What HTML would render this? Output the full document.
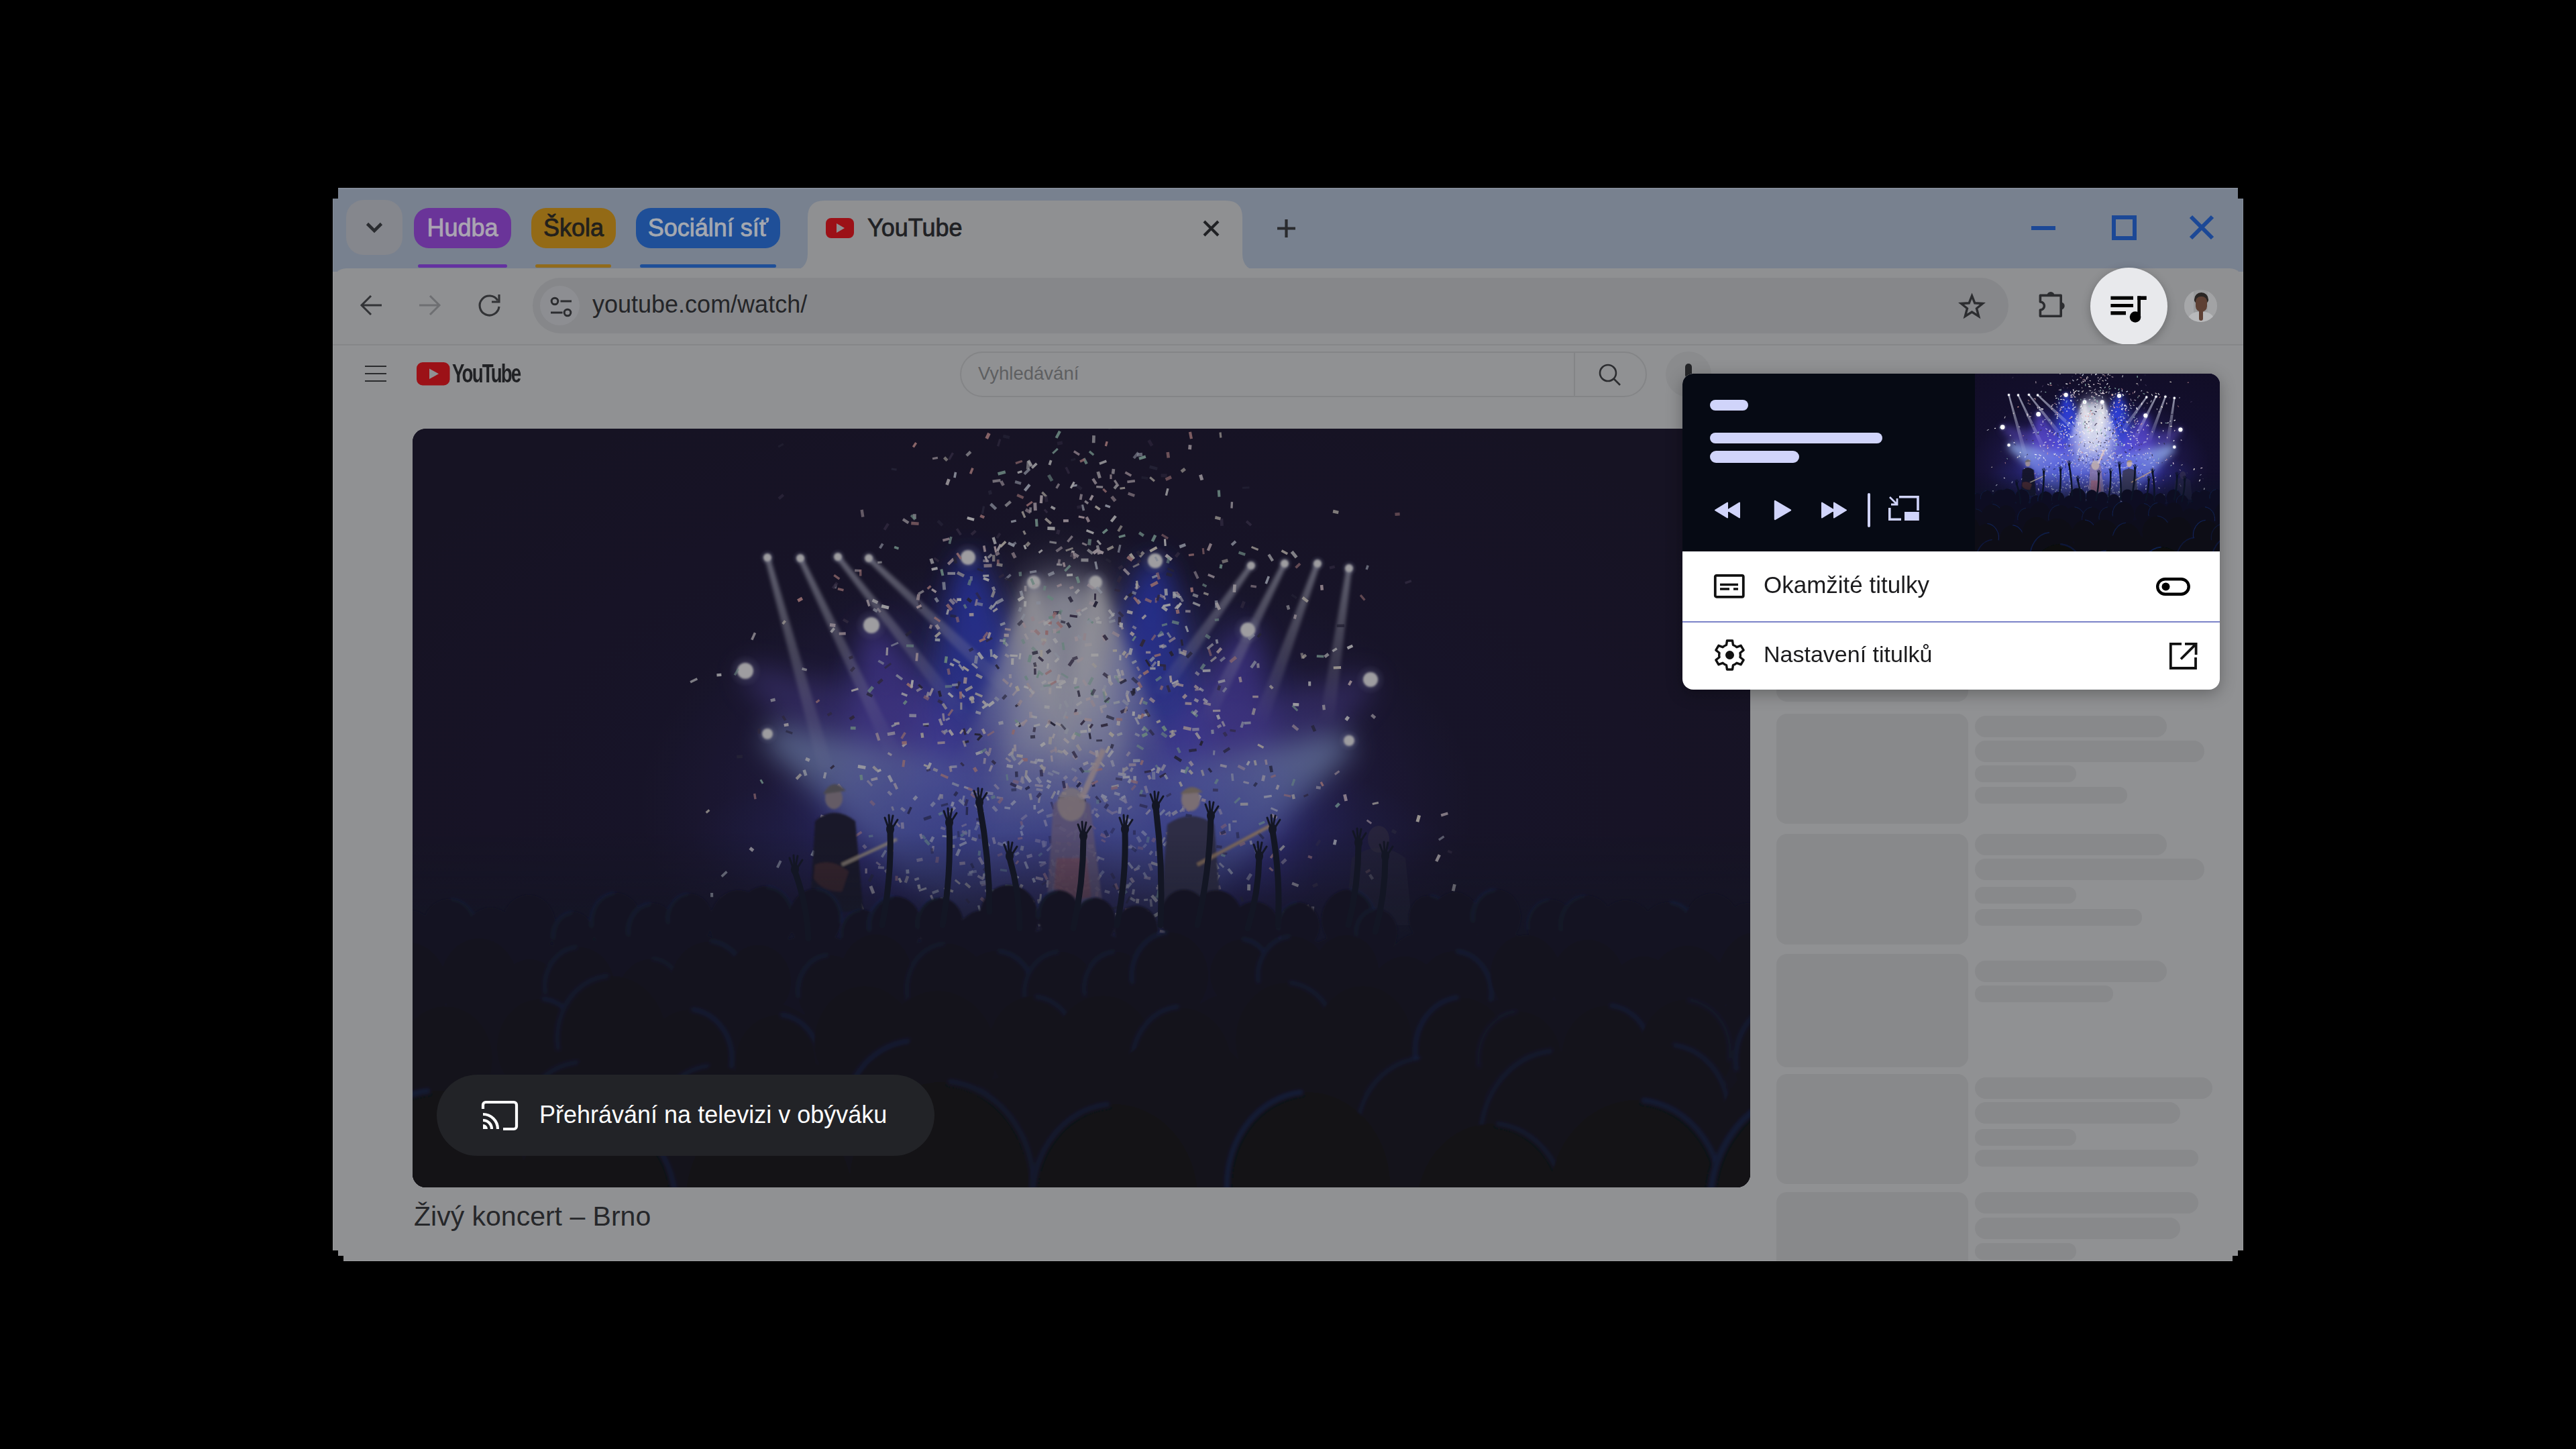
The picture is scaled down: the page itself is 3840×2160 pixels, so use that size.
<!DOCTYPE html>
<html><head><meta charset="utf-8">
<style>
*{margin:0;padding:0;box-sizing:border-box}
html,body{width:3840px;height:2160px;background:#000;overflow:hidden;font-family:"Liberation Sans",sans-serif}
.a{position:absolute}
#win{position:absolute;left:496px;top:280px;width:2848px;height:1600px;background:#909193;overflow:hidden;
clip-path:polygon(8px 0,2840px 0,2840px 16px,2848px 16px,2848px 1584px,2840px 1584px,2840px 1592px,2832px 1592px,2832px 1600px,16px 1600px,16px 1592px,8px 1592px,8px 1584px,0 1584px,0 16px,8px 16px)}
#tabs{left:0;top:0;width:2848px;height:125px;background:#78818f}
#toolbar{left:0;top:120px;width:2848px;height:113px;background:#8f9092;border-radius:20px 20px 0 0}
#content{left:0;top:233px;width:2848px;height:1367px;background:#909193;border-top:2px solid #858688}
.chip{top:30px;height:60px;border-radius:22px;font-size:36px;line-height:60px;text-align:center;-webkit-text-stroke:0.9px currentColor}
.uline{top:113.5px;height:5.5px;border-radius:3px}
.skel{position:absolute;background:#88898b;border-radius:16px}
.bar{position:absolute;background:#88898b;border-radius:16px;height:32px}
.bar.s{height:25px;border-radius:12px}
svg{position:absolute;overflow:visible}
</style></head><body>
<svg width="0" height="0" style="position:absolute"><defs>
<filter id="b40" x="-50%" y="-50%" width="200%" height="200%"><feGaussianBlur stdDeviation="40"/></filter>
<filter id="b20" x="-50%" y="-50%" width="200%" height="200%"><feGaussianBlur stdDeviation="20"/></filter>
<filter id="b10" x="-50%" y="-50%" width="200%" height="200%"><feGaussianBlur stdDeviation="10"/></filter>
<filter id="b5" x="-50%" y="-50%" width="200%" height="200%"><feGaussianBlur stdDeviation="5"/></filter>
<filter id="b3" x="-50%" y="-50%" width="200%" height="200%"><feGaussianBlur stdDeviation="2.5"/></filter>
<filter id="b2" x="-50%" y="-50%" width="200%" height="200%"><feGaussianBlur stdDeviation="1.5"/></filter>
<radialGradient id="pbg" cx="0.49" cy="0.5" r="0.6"><stop offset="0" stop-color="#1a1444"/><stop offset="0.45" stop-color="#130f2e"/><stop offset="1" stop-color="#110d24"/></radialGradient>
<radialGradient id="gpurple"><stop offset="0" stop-color="#4a3cc0" stop-opacity="0.75"/><stop offset="0.5" stop-color="#4a3cc0" stop-opacity="0.3375"/><stop offset="1" stop-color="#4a3cc0" stop-opacity="0"/></radialGradient>
<radialGradient id="gblue"><stop offset="0" stop-color="#3550e8" stop-opacity="0.8"/><stop offset="0.5" stop-color="#3550e8" stop-opacity="0.36000000000000004"/><stop offset="1" stop-color="#3550e8" stop-opacity="0"/></radialGradient>
<radialGradient id="gwhite"><stop offset="0" stop-color="#dfe6ff" stop-opacity="0.9"/><stop offset="0.5" stop-color="#dfe6ff" stop-opacity="0.405"/><stop offset="1" stop-color="#dfe6ff" stop-opacity="0"/></radialGradient>
<radialGradient id="gcyan"><stop offset="0" stop-color="#a8d0ff" stop-opacity="0.7"/><stop offset="0.5" stop-color="#a8d0ff" stop-opacity="0.315"/><stop offset="1" stop-color="#a8d0ff" stop-opacity="0"/></radialGradient>
<radialGradient id="gdot"><stop offset="0" stop-color="#c8d0ff" stop-opacity="0.9"/><stop offset="0.5" stop-color="#c8d0ff" stop-opacity="0.405"/><stop offset="1" stop-color="#c8d0ff" stop-opacity="0"/></radialGradient>
<linearGradient id="crowdg" x1="0" y1="0" x2="0" y2="1"><stop offset="0" stop-color="#0c1426" stop-opacity="0"/><stop offset="0.3" stop-color="#0c1426" stop-opacity="0.6"/><stop offset="1" stop-color="#07090f" stop-opacity="0.95"/></linearGradient>
<symbol id="photo" viewBox="0 0 1994 1131" preserveAspectRatio="none">
<rect width="1994" height="1131" fill="url(#pbg)"/>
<ellipse cx="960" cy="560" rx="620" ry="380" fill="url(#gpurple)" opacity="0.75" transform="rotate(0 960 560)"/>
<ellipse cx="790" cy="470" rx="200" ry="260" fill="url(#gblue)" opacity="0.5" transform="rotate(15 790 470)"/>
<ellipse cx="1160" cy="470" rx="200" ry="260" fill="url(#gblue)" opacity="0.5" transform="rotate(-15 1160 470)"/>
<ellipse cx="760" cy="520" rx="240" ry="200" fill="url(#gpurple)" opacity="0.7" transform="rotate(20 760 520)"/>
<ellipse cx="1190" cy="530" rx="240" ry="200" fill="url(#gpurple)" opacity="0.7" transform="rotate(-20 1190 530)"/>
<ellipse cx="975" cy="470" rx="260" ry="330" fill="url(#gwhite)" opacity="0.4" transform="rotate(0 975 470)"/>
<ellipse cx="972" cy="390" rx="130" ry="230" fill="url(#gwhite)" opacity="0.55" transform="rotate(0 972 390)"/>
<linearGradient id="lg23" gradientUnits="userSpaceOnUse" x1="828" y1="192" x2="870" y2="620"><stop offset="0" stop-color="#2c44ff" stop-opacity="1"/><stop offset="0.5" stop-color="#2c44ff" stop-opacity="0.55"/><stop offset="1" stop-color="#2c44ff" stop-opacity="0"/></linearGradient>
<polygon points="814.1,193.4 720.7,634.6 1019.3,605.4 841.9,190.6" fill="url(#lg23)" opacity="0.9" filter="url(#b20)"/>
<linearGradient id="lg25" gradientUnits="userSpaceOnUse" x1="1107" y1="197" x2="1075" y2="620"><stop offset="0" stop-color="#2c44ff" stop-opacity="1"/><stop offset="0.5" stop-color="#2c44ff" stop-opacity="0.55"/><stop offset="1" stop-color="#2c44ff" stop-opacity="0"/></linearGradient>
<polygon points="1093.0,195.9 925.4,608.7 1224.6,631.3 1121.0,198.1" fill="url(#lg25)" opacity="0.9" filter="url(#b20)"/>
<linearGradient id="lg27" gradientUnits="userSpaceOnUse" x1="684" y1="293" x2="780" y2="680"><stop offset="0" stop-color="#6650e8" stop-opacity="1"/><stop offset="0.5" stop-color="#6650e8" stop-opacity="0.55"/><stop offset="1" stop-color="#6650e8" stop-opacity="0"/></linearGradient>
<polygon points="672.4,295.9 615.0,720.9 945.0,639.1 695.6,290.1" fill="url(#lg27)" opacity="0.7" filter="url(#b20)"/>
<linearGradient id="lg29" gradientUnits="userSpaceOnUse" x1="1245" y1="300" x2="1160" y2="680"><stop offset="0" stop-color="#6650e8" stop-opacity="1"/><stop offset="0.5" stop-color="#6650e8" stop-opacity="0.55"/><stop offset="1" stop-color="#6650e8" stop-opacity="0"/></linearGradient>
<polygon points="1233.3,297.4 994.1,642.9 1325.9,717.1 1256.7,302.6" fill="url(#lg29)" opacity="0.7" filter="url(#b20)"/>
<linearGradient id="lg31" gradientUnits="userSpaceOnUse" x1="496" y1="361" x2="860" y2="580"><stop offset="0" stop-color="#6a58d8" stop-opacity="1"/><stop offset="0.5" stop-color="#6a58d8" stop-opacity="0.55"/><stop offset="1" stop-color="#6a58d8" stop-opacity="0"/></linearGradient>
<polygon points="490.8,369.6 782.7,708.5 937.3,451.5 501.2,352.4" fill="url(#lg31)" opacity="0.5" filter="url(#b20)"/>
<linearGradient id="lg33" gradientUnits="userSpaceOnUse" x1="1428" y1="374" x2="1090" y2="590"><stop offset="0" stop-color="#6a58d8" stop-opacity="1"/><stop offset="0.5" stop-color="#6a58d8" stop-opacity="0.55"/><stop offset="1" stop-color="#6a58d8" stop-opacity="0"/></linearGradient>
<polygon points="1422.6,365.6 1009.2,463.6 1170.8,716.4 1433.4,382.4" fill="url(#lg33)" opacity="0.5" filter="url(#b20)"/>
<linearGradient id="lg35" gradientUnits="userSpaceOnUse" x1="529" y1="455" x2="930" y2="660"><stop offset="0" stop-color="#9cbcf8" stop-opacity="1"/><stop offset="0.5" stop-color="#9cbcf8" stop-opacity="0.55"/><stop offset="1" stop-color="#9cbcf8" stop-opacity="0"/></linearGradient>
<polygon points="522.6,467.5 861.7,793.6 998.3,526.4 535.4,442.5" fill="url(#lg35)" opacity="0.8" filter="url(#b20)"/>
<linearGradient id="lg37" gradientUnits="userSpaceOnUse" x1="1396" y1="465" x2="1010" y2="670"><stop offset="0" stop-color="#9cbcf8" stop-opacity="1"/><stop offset="0.5" stop-color="#9cbcf8" stop-opacity="0.55"/><stop offset="1" stop-color="#9cbcf8" stop-opacity="0"/></linearGradient>
<polygon points="1389.4,452.6 939.6,537.5 1080.4,802.5 1402.6,477.4" fill="url(#lg37)" opacity="0.8" filter="url(#b20)"/>
<linearGradient id="lg39" gradientUnits="userSpaceOnUse" x1="972" y1="229" x2="972" y2="680"><stop offset="0" stop-color="#f0f4ff" stop-opacity="1"/><stop offset="0.5" stop-color="#f0f4ff" stop-opacity="0.55"/><stop offset="1" stop-color="#f0f4ff" stop-opacity="0"/></linearGradient>
<polygon points="932.0,229.0 832.0,680.0 1112.0,680.0 1012.0,229.0" fill="url(#lg39)" opacity="0.85" filter="url(#b20)"/>
<linearGradient id="lg41" gradientUnits="userSpaceOnUse" x1="926" y1="229" x2="900" y2="520"><stop offset="0" stop-color="#ffffff" stop-opacity="1"/><stop offset="0.5" stop-color="#ffffff" stop-opacity="0.55"/><stop offset="1" stop-color="#ffffff" stop-opacity="0"/></linearGradient>
<polygon points="918.0,228.3 810.4,512.0 989.6,528.0 934.0,229.7" fill="url(#lg41)" opacity="0.8" filter="url(#b10)"/>
<linearGradient id="lg43" gradientUnits="userSpaceOnUse" x1="1018" y1="229" x2="1045" y2="520"><stop offset="0" stop-color="#ffffff" stop-opacity="1"/><stop offset="0.5" stop-color="#ffffff" stop-opacity="0.55"/><stop offset="1" stop-color="#ffffff" stop-opacity="0"/></linearGradient>
<polygon points="1010.0,229.7 955.4,528.3 1134.6,511.7 1026.0,228.3" fill="url(#lg43)" opacity="0.8" filter="url(#b10)"/>
<linearGradient id="lg45" gradientUnits="userSpaceOnUse" x1="529" y1="192" x2="620" y2="520"><stop offset="0" stop-color="#e8ecff" stop-opacity="1"/><stop offset="0.5" stop-color="#e8ecff" stop-opacity="0.55"/><stop offset="1" stop-color="#e8ecff" stop-opacity="0"/></linearGradient>
<polygon points="525.1,193.1 609.4,522.9 630.6,517.1 532.9,190.9" fill="url(#lg45)" opacity="0.6" filter="url(#b3)"/>
<linearGradient id="lg47" gradientUnits="userSpaceOnUse" x1="578" y1="193" x2="720" y2="490"><stop offset="0" stop-color="#e8ecff" stop-opacity="1"/><stop offset="0.5" stop-color="#e8ecff" stop-opacity="0.55"/><stop offset="1" stop-color="#e8ecff" stop-opacity="0"/></linearGradient>
<polygon points="574.4,194.7 710.1,494.7 729.9,485.3 581.6,191.3" fill="url(#lg47)" opacity="0.6" filter="url(#b3)"/>
<linearGradient id="lg49" gradientUnits="userSpaceOnUse" x1="634" y1="191" x2="830" y2="440"><stop offset="0" stop-color="#e8ecff" stop-opacity="1"/><stop offset="0.5" stop-color="#e8ecff" stop-opacity="0.55"/><stop offset="1" stop-color="#e8ecff" stop-opacity="0"/></linearGradient>
<polygon points="630.9,193.5 821.4,446.8 838.6,433.2 637.1,188.5" fill="url(#lg49)" opacity="0.6" filter="url(#b3)"/>
<linearGradient id="lg51" gradientUnits="userSpaceOnUse" x1="680" y1="193" x2="900" y2="400"><stop offset="0" stop-color="#e8ecff" stop-opacity="1"/><stop offset="0.5" stop-color="#e8ecff" stop-opacity="0.55"/><stop offset="1" stop-color="#e8ecff" stop-opacity="0"/></linearGradient>
<polygon points="677.3,195.9 892.5,408.0 907.5,392.0 682.7,190.1" fill="url(#lg51)" opacity="0.6" filter="url(#b3)"/>
<linearGradient id="lg53" gradientUnits="userSpaceOnUse" x1="1250" y1="204" x2="1110" y2="400"><stop offset="0" stop-color="#e8ecff" stop-opacity="1"/><stop offset="0.5" stop-color="#e8ecff" stop-opacity="0.55"/><stop offset="1" stop-color="#e8ecff" stop-opacity="0"/></linearGradient>
<polygon points="1246.7,201.7 1101.0,393.6 1119.0,406.4 1253.3,206.3" fill="url(#lg53)" opacity="0.6" filter="url(#b3)"/>
<linearGradient id="lg55" gradientUnits="userSpaceOnUse" x1="1300" y1="201" x2="1180" y2="440"><stop offset="0" stop-color="#e8ecff" stop-opacity="1"/><stop offset="0.5" stop-color="#e8ecff" stop-opacity="0.55"/><stop offset="1" stop-color="#e8ecff" stop-opacity="0"/></linearGradient>
<polygon points="1296.4,199.2 1170.2,435.1 1189.8,444.9 1303.6,202.8" fill="url(#lg55)" opacity="0.6" filter="url(#b3)"/>
<linearGradient id="lg57" gradientUnits="userSpaceOnUse" x1="1349" y1="201" x2="1262" y2="440"><stop offset="0" stop-color="#e8ecff" stop-opacity="1"/><stop offset="0.5" stop-color="#e8ecff" stop-opacity="0.55"/><stop offset="1" stop-color="#e8ecff" stop-opacity="0"/></linearGradient>
<polygon points="1345.2,199.6 1251.7,436.2 1272.3,443.8 1352.8,202.4" fill="url(#lg57)" opacity="0.6" filter="url(#b3)"/>
<linearGradient id="lg59" gradientUnits="userSpaceOnUse" x1="1396" y1="208" x2="1362" y2="440"><stop offset="0" stop-color="#e8ecff" stop-opacity="1"/><stop offset="0.5" stop-color="#e8ecff" stop-opacity="0.55"/><stop offset="1" stop-color="#e8ecff" stop-opacity="0"/></linearGradient>
<polygon points="1392.0,207.4 1351.1,438.4 1372.9,441.6 1400.0,208.6" fill="url(#lg59)" opacity="0.6" filter="url(#b3)"/>
<circle cx="529" cy="192" r="12" fill="url(#gdot)" opacity="0.45"/>
<circle cx="578" cy="193" r="12" fill="url(#gdot)" opacity="0.45"/>
<circle cx="634" cy="191" r="12" fill="url(#gdot)" opacity="0.45"/>
<circle cx="680" cy="193" r="12" fill="url(#gdot)" opacity="0.45"/>
<circle cx="828" cy="192" r="22" fill="url(#gdot)" opacity="0.45"/>
<circle cx="926" cy="229" r="20" fill="url(#gdot)" opacity="0.45"/>
<circle cx="1018" cy="229" r="20" fill="url(#gdot)" opacity="0.45"/>
<circle cx="1107" cy="197" r="22" fill="url(#gdot)" opacity="0.45"/>
<circle cx="1250" cy="204" r="12" fill="url(#gdot)" opacity="0.45"/>
<circle cx="1300" cy="201" r="12" fill="url(#gdot)" opacity="0.45"/>
<circle cx="1349" cy="201" r="12" fill="url(#gdot)" opacity="0.45"/>
<circle cx="1396" cy="208" r="12" fill="url(#gdot)" opacity="0.45"/>
<circle cx="684" cy="293" r="24" fill="url(#gdot)" opacity="0.45"/>
<circle cx="1245" cy="300" r="22" fill="url(#gdot)" opacity="0.45"/>
<circle cx="496" cy="361" r="24" fill="url(#gdot)" opacity="0.45"/>
<circle cx="1428" cy="374" r="22" fill="url(#gdot)" opacity="0.45"/>
<circle cx="529" cy="455" r="16" fill="url(#gdot)" opacity="0.45"/>
<circle cx="1396" cy="465" r="16" fill="url(#gdot)" opacity="0.45"/>
<g filter="url(#b2)">
<circle cx="529" cy="192" r="6" fill="#ffffff"/>
<circle cx="578" cy="193" r="6" fill="#ffffff"/>
<circle cx="634" cy="191" r="6" fill="#ffffff"/>
<circle cx="680" cy="193" r="6" fill="#ffffff"/>
<circle cx="828" cy="192" r="11" fill="#ffffff"/>
<circle cx="926" cy="229" r="10" fill="#ffffff"/>
<circle cx="1018" cy="229" r="10" fill="#ffffff"/>
<circle cx="1107" cy="197" r="11" fill="#ffffff"/>
<circle cx="1250" cy="204" r="6" fill="#ffffff"/>
<circle cx="1300" cy="201" r="6" fill="#ffffff"/>
<circle cx="1349" cy="201" r="6" fill="#ffffff"/>
<circle cx="1396" cy="208" r="6" fill="#ffffff"/>
<circle cx="684" cy="293" r="12" fill="#ffffff"/>
<circle cx="1245" cy="300" r="11" fill="#ffffff"/>
<circle cx="496" cy="361" r="12" fill="#ffffff"/>
<circle cx="1428" cy="374" r="11" fill="#ffffff"/>
<circle cx="529" cy="455" r="8" fill="#ffffff"/>
<circle cx="1396" cy="465" r="8" fill="#ffffff"/>
</g>
<rect x="921.0" y="494.7" width="9.2" height="3.7" fill="#f4ecf0" opacity="0.80" transform="rotate(10 921.0 494.7)"/>
<rect x="1300.8" y="720.1" width="9.5" height="3.1" fill="#ffffff" opacity="0.62" transform="rotate(105 1300.8 720.1)"/>
<rect x="1127.6" y="89.5" width="10.9" height="3.4" fill="#ffffff" opacity="0.86" transform="rotate(104 1127.6 89.5)"/>
<rect x="1211.7" y="377.3" width="10.7" height="3.9" fill="#ffffff" opacity="0.74" transform="rotate(166 1211.7 377.3)"/>
<rect x="1091.6" y="185.5" width="9.2" height="4.8" fill="#f8f0e0" opacity="0.72" transform="rotate(131 1091.6 185.5)"/>
<rect x="991.4" y="371.6" width="10.0" height="4.5" fill="#ffffff" opacity="0.95" transform="rotate(103 991.4 371.6)"/>
<rect x="841.6" y="258.5" width="9.0" height="4.6" fill="#d8e0f0" opacity="0.64" transform="rotate(12 841.6 258.5)"/>
<rect x="1074.3" y="293.2" width="6.1" height="3.9" fill="#f4ecf0" opacity="0.65" transform="rotate(30 1074.3 293.2)"/>
<rect x="800.9" y="165.8" width="10.4" height="3.8" fill="#e8d0d8" opacity="0.80" transform="rotate(165 800.9 165.8)"/>
<rect x="1084.1" y="656.6" width="8.5" height="3.7" fill="#e8d0d8" opacity="0.98" transform="rotate(159 1084.1 656.6)"/>
<rect x="1109.2" y="500.5" width="11.0" height="3.4" fill="#a0d0c0" opacity="0.66" transform="rotate(50 1109.2 500.5)"/>
<rect x="1056.3" y="280.6" width="11.7" height="4.4" fill="#3a3050" opacity="0.85" transform="rotate(92 1056.3 280.6)"/>
<rect x="967.3" y="661.9" width="10.1" height="4.1" fill="#e0a0a0" opacity="0.76" transform="rotate(71 967.3 661.9)"/>
<rect x="709.4" y="482.1" width="6.4" height="3.4" fill="#f4ecf0" opacity="0.74" transform="rotate(29 709.4 482.1)"/>
<rect x="1179.0" y="466.4" width="7.2" height="3.8" fill="#2a2844" opacity="0.98" transform="rotate(114 1179.0 466.4)"/>
<rect x="1081.5" y="354.2" width="6.5" height="3.2" fill="#e8d0d8" opacity="0.71" transform="rotate(61 1081.5 354.2)"/>
<rect x="816.5" y="723.5" width="10.1" height="4.8" fill="#3a3050" opacity="0.72" transform="rotate(136 816.5 723.5)"/>
<rect x="967.6" y="656.1" width="7.6" height="3.7" fill="#a0d0c0" opacity="0.91" transform="rotate(30 967.6 656.1)"/>
<rect x="908.7" y="599.2" width="7.2" height="3.5" fill="#ffffff" opacity="0.92" transform="rotate(72 908.7 599.2)"/>
<rect x="752.1" y="22.0" width="7.7" height="3.5" fill="#e0a0a0" opacity="0.98" transform="rotate(124 752.1 22.0)"/>
<rect x="959.1" y="614.5" width="8.1" height="4.9" fill="#e0a0a0" opacity="0.64" transform="rotate(14 959.1 614.5)"/>
<rect x="1040.6" y="474.3" width="11.0" height="4.0" fill="#f8f0e0" opacity="0.92" transform="rotate(117 1040.6 474.3)"/>
<rect x="1144.7" y="634.3" width="8.3" height="4.4" fill="#f0e0e8" opacity="0.96" transform="rotate(35 1144.7 634.3)"/>
<rect x="1039.7" y="608.6" width="8.4" height="3.8" fill="#e8d0d8" opacity="0.89" transform="rotate(170 1039.7 608.6)"/>
<rect x="767.0" y="754.8" width="9.5" height="3.9" fill="#2a2844" opacity="0.84" transform="rotate(118 767.0 754.8)"/>
<rect x="939.8" y="99.5" width="11.8" height="4.3" fill="#f0e0e8" opacity="0.97" transform="rotate(94 939.8 99.5)"/>
<rect x="1149.0" y="664.2" width="7.3" height="4.0" fill="#a0d0c0" opacity="0.73" transform="rotate(137 1149.0 664.2)"/>
<rect x="971.1" y="318.4" width="11.5" height="3.7" fill="#a0d0c0" opacity="0.83" transform="rotate(82 971.1 318.4)"/>
<rect x="1252.2" y="397.9" width="8.6" height="3.4" fill="#e8d0d8" opacity="0.92" transform="rotate(0 1252.2 397.9)"/>
<rect x="1203.8" y="91.5" width="10.1" height="4.1" fill="#a0d0c0" opacity="0.91" transform="rotate(86 1203.8 91.5)"/>
<rect x="1094.4" y="343.7" width="11.4" height="3.1" fill="#2a2844" opacity="0.99" transform="rotate(58 1094.4 343.7)"/>
<rect x="1014.7" y="389.2" width="8.7" height="4.1" fill="#a0d0c0" opacity="0.98" transform="rotate(86 1014.7 389.2)"/>
<rect x="1067.9" y="336.0" width="7.4" height="3.1" fill="#e8d0d8" opacity="0.91" transform="rotate(120 1067.9 336.0)"/>
<rect x="1081.6" y="714.0" width="8.2" height="3.5" fill="#f8f0e0" opacity="0.79" transform="rotate(24 1081.6 714.0)"/>
<rect x="962.7" y="548.8" width="9.3" height="3.9" fill="#2a2844" opacity="0.73" transform="rotate(3 962.7 548.8)"/>
<rect x="1059.7" y="206.7" width="7.1" height="4.5" fill="#3a3050" opacity="0.94" transform="rotate(147 1059.7 206.7)"/>
<rect x="911.6" y="622.4" width="6.9" height="4.8" fill="#f8f0e0" opacity="0.88" transform="rotate(102 911.6 622.4)"/>
<rect x="1425.8" y="204.4" width="6.5" height="3.5" fill="#d8e0f0" opacity="0.69" transform="rotate(109 1425.8 204.4)"/>
<rect x="1163.9" y="257.8" width="11.6" height="3.5" fill="#ffffff" opacity="0.81" transform="rotate(23 1163.9 257.8)"/>
<rect x="973.2" y="708.5" width="9.2" height="3.4" fill="#d8e0f0" opacity="0.87" transform="rotate(80 973.2 708.5)"/>
<rect x="1142.6" y="263.7" width="7.5" height="3.0" fill="#ffffff" opacity="0.82" transform="rotate(131 1142.6 263.7)"/>
<rect x="798.0" y="339.8" width="9.9" height="4.3" fill="#a0d0c0" opacity="0.96" transform="rotate(98 798.0 339.8)"/>
<rect x="968.2" y="233.9" width="7.4" height="3.4" fill="#e8d0d8" opacity="0.89" transform="rotate(158 968.2 233.9)"/>
<rect x="794.2" y="41.3" width="6.4" height="4.5" fill="#f8f0e0" opacity="0.67" transform="rotate(46 794.2 41.3)"/>
<rect x="1115.2" y="505.6" width="9.0" height="4.9" fill="#f4ecf0" opacity="0.88" transform="rotate(107 1115.2 505.6)"/>
<rect x="843.3" y="338.8" width="11.8" height="4.9" fill="#d8e0f0" opacity="0.70" transform="rotate(98 843.3 338.8)"/>
<rect x="1021.9" y="165.6" width="8.0" height="3.2" fill="#ffffff" opacity="0.86" transform="rotate(50 1021.9 165.6)"/>
<rect x="960.1" y="200.8" width="8.4" height="3.1" fill="#ffffff" opacity="0.72" transform="rotate(4 960.1 200.8)"/>
<rect x="1072.7" y="678.5" width="9.6" height="4.5" fill="#d8e0f0" opacity="0.80" transform="rotate(129 1072.7 678.5)"/>
<rect x="869.3" y="550.4" width="6.3" height="4.7" fill="#a0d0c0" opacity="0.85" transform="rotate(160 869.3 550.4)"/>
<rect x="718.7" y="174.8" width="6.8" height="3.7" fill="#a0d0c0" opacity="0.93" transform="rotate(18 718.7 174.8)"/>
<rect x="1031.3" y="403.9" width="7.6" height="3.9" fill="#a0d0c0" opacity="0.97" transform="rotate(12 1031.3 403.9)"/>
<rect x="977.4" y="615.0" width="7.4" height="4.5" fill="#e0a0a0" opacity="0.86" transform="rotate(41 977.4 615.0)"/>
<rect x="701.8" y="375.4" width="8.9" height="4.4" fill="#3a3050" opacity="0.85" transform="rotate(138 701.8 375.4)"/>
<rect x="1093.0" y="252.1" width="10.2" height="4.2" fill="#e0a0a0" opacity="0.79" transform="rotate(24 1093.0 252.1)"/>
<rect x="851.7" y="221.1" width="8.8" height="3.9" fill="#ffffff" opacity="0.96" transform="rotate(21 851.7 221.1)"/>
<rect x="634.3" y="236.9" width="8.8" height="3.6" fill="#e0a0a0" opacity="0.80" transform="rotate(13 634.3 236.9)"/>
<rect x="975.6" y="56.7" width="10.5" height="3.5" fill="#3a3050" opacity="0.84" transform="rotate(64 975.6 56.7)"/>
<rect x="956.3" y="682.3" width="6.1" height="3.0" fill="#d8e0f0" opacity="0.78" transform="rotate(88 956.3 682.3)"/>
<rect x="947.9" y="285.8" width="8.0" height="3.6" fill="#ffffff" opacity="0.76" transform="rotate(60 947.9 285.8)"/>
<rect x="1218.7" y="447.8" width="8.6" height="3.6" fill="#3a3050" opacity="0.64" transform="rotate(8 1218.7 447.8)"/>
<rect x="855.0" y="189.5" width="9.1" height="3.4" fill="#f4ecf0" opacity="0.98" transform="rotate(67 855.0 189.5)"/>
<rect x="586.9" y="489.8" width="6.3" height="4.9" fill="#ffffff" opacity="0.79" transform="rotate(22 586.9 489.8)"/>
<rect x="1112.0" y="214.1" width="10.4" height="4.3" fill="#e0a0a0" opacity="0.70" transform="rotate(73 1112.0 214.1)"/>
<rect x="750.7" y="127.2" width="7.2" height="4.8" fill="#ffffff" opacity="0.69" transform="rotate(89 750.7 127.2)"/>
<rect x="896.8" y="757.3" width="6.8" height="3.4" fill="#f8f0e0" opacity="0.74" transform="rotate(16 896.8 757.3)"/>
<rect x="883.9" y="615.1" width="6.1" height="4.7" fill="#ffffff" opacity="0.90" transform="rotate(68 883.9 615.1)"/>
<rect x="1202.3" y="286.4" width="6.4" height="3.6" fill="#a0d0c0" opacity="0.65" transform="rotate(174 1202.3 286.4)"/>
<rect x="550.5" y="645.0" width="11.4" height="3.8" fill="#d8e0f0" opacity="0.77" transform="rotate(116 550.5 645.0)"/>
<rect x="904.3" y="645.0" width="6.1" height="3.1" fill="#e0a0a0" opacity="0.96" transform="rotate(127 904.3 645.0)"/>
<rect x="927.6" y="705.4" width="8.8" height="3.9" fill="#e8d0d8" opacity="0.69" transform="rotate(140 927.6 705.4)"/>
<rect x="932.0" y="492.0" width="8.7" height="4.1" fill="#ffffff" opacity="0.91" transform="rotate(7 932.0 492.0)"/>
<rect x="922.3" y="543.4" width="9.8" height="4.1" fill="#f8f0e0" opacity="0.91" transform="rotate(78 922.3 543.4)"/>
<rect x="861.7" y="8.0" width="8.8" height="4.9" fill="#e0a0a0" opacity="0.95" transform="rotate(116 861.7 8.0)"/>
<rect x="933.3" y="493.7" width="7.2" height="4.8" fill="#ffffff" opacity="0.63" transform="rotate(116 933.3 493.7)"/>
<rect x="702.5" y="172.4" width="8.0" height="3.8" fill="#d8e0f0" opacity="0.68" transform="rotate(122 702.5 172.4)"/>
<rect x="1400.9" y="376.8" width="7.3" height="3.8" fill="#e8d0d8" opacity="0.98" transform="rotate(119 1400.9 376.8)"/>
<rect x="945.6" y="315.7" width="7.1" height="3.9" fill="#f8f0e0" opacity="0.73" transform="rotate(128 945.6 315.7)"/>
<rect x="983.5" y="505.0" width="8.2" height="3.7" fill="#d8e0f0" opacity="0.60" transform="rotate(30 983.5 505.0)"/>
<rect x="921.4" y="61.4" width="11.3" height="4.1" fill="#d8e0f0" opacity="0.75" transform="rotate(136 921.4 61.4)"/>
<rect x="1068.4" y="681.7" width="8.5" height="4.6" fill="#f4ecf0" opacity="0.62" transform="rotate(138 1068.4 681.7)"/>
<rect x="1047.5" y="275.9" width="11.7" height="3.1" fill="#d8e0f0" opacity="0.88" transform="rotate(134 1047.5 275.9)"/>
<rect x="867.7" y="452.6" width="11.7" height="3.1" fill="#e0a0a0" opacity="0.64" transform="rotate(148 867.7 452.6)"/>
<rect x="1367.2" y="725.0" width="7.5" height="3.9" fill="#e8d0d8" opacity="0.97" transform="rotate(88 1367.2 725.0)"/>
<rect x="1016.6" y="526.0" width="7.4" height="4.7" fill="#2a2844" opacity="0.91" transform="rotate(82 1016.6 526.0)"/>
<rect x="1130.7" y="572.2" width="6.4" height="3.1" fill="#f0e0e8" opacity="0.73" transform="rotate(99 1130.7 572.2)"/>
<rect x="1089.3" y="539.4" width="7.4" height="3.8" fill="#a0d0c0" opacity="0.87" transform="rotate(111 1089.3 539.4)"/>
<rect x="1278.0" y="186.5" width="11.3" height="4.2" fill="#ffffff" opacity="0.76" transform="rotate(58 1278.0 186.5)"/>
<rect x="803.8" y="614.4" width="11.9" height="3.2" fill="#e0a0a0" opacity="0.93" transform="rotate(85 803.8 614.4)"/>
<rect x="976.7" y="694.9" width="7.8" height="3.2" fill="#2a2844" opacity="0.99" transform="rotate(34 976.7 694.9)"/>
<rect x="1019.0" y="389.6" width="9.6" height="4.5" fill="#3a3050" opacity="0.60" transform="rotate(119 1019.0 389.6)"/>
<rect x="1077.8" y="453.1" width="7.3" height="3.7" fill="#d8e0f0" opacity="0.68" transform="rotate(25 1077.8 453.1)"/>
<rect x="1081.6" y="622.3" width="8.2" height="4.2" fill="#e0a0a0" opacity="0.61" transform="rotate(14 1081.6 622.3)"/>
<rect x="898.7" y="77.1" width="9.3" height="4.3" fill="#d8e0f0" opacity="0.67" transform="rotate(16 898.7 77.1)"/>
<rect x="958.1" y="311.4" width="7.8" height="4.9" fill="#ffffff" opacity="0.83" transform="rotate(56 958.1 311.4)"/>
<rect x="943.9" y="582.7" width="9.9" height="3.8" fill="#f0e0e8" opacity="0.98" transform="rotate(72 943.9 582.7)"/>
<rect x="1009.6" y="685.2" width="10.9" height="3.8" fill="#e8d0d8" opacity="0.78" transform="rotate(158 1009.6 685.2)"/>
<rect x="1044.4" y="301.5" width="11.6" height="4.5" fill="#e8d0d8" opacity="0.74" transform="rotate(30 1044.4 301.5)"/>
<rect x="909.5" y="611.7" width="7.2" height="3.3" fill="#e0a0a0" opacity="0.99" transform="rotate(169 909.5 611.7)"/>
<rect x="850.1" y="483.6" width="10.3" height="4.4" fill="#ffffff" opacity="0.86" transform="rotate(160 850.1 483.6)"/>
<rect x="1079.0" y="429.7" width="11.6" height="3.3" fill="#ffffff" opacity="0.66" transform="rotate(64 1079.0 429.7)"/>
<rect x="988.3" y="637.0" width="9.6" height="4.1" fill="#f0e0e8" opacity="0.72" transform="rotate(112 988.3 637.0)"/>
<rect x="915.4" y="234.2" width="8.3" height="3.7" fill="#f4ecf0" opacity="0.67" transform="rotate(90 915.4 234.2)"/>
<rect x="788.0" y="592.8" width="7.1" height="3.9" fill="#f0e0e8" opacity="0.65" transform="rotate(19 788.0 592.8)"/>
<rect x="1176.5" y="547.5" width="10.5" height="4.8" fill="#f4ecf0" opacity="0.91" transform="rotate(117 1176.5 547.5)"/>
<rect x="909.4" y="49.8" width="10.5" height="3.3" fill="#e0a0a0" opacity="0.71" transform="rotate(161 909.4 49.8)"/>
<rect x="1168.1" y="699.1" width="7.6" height="4.0" fill="#e8d0d8" opacity="0.61" transform="rotate(57 1168.1 699.1)"/>
<rect x="945.7" y="286.4" width="7.6" height="4.5" fill="#e0a0a0" opacity="0.94" transform="rotate(8 945.7 286.4)"/>
<rect x="1204.3" y="421.9" width="11.3" height="3.2" fill="#f0e0e8" opacity="0.85" transform="rotate(178 1204.3 421.9)"/>
<rect x="966.7" y="285.6" width="6.9" height="3.7" fill="#2a2844" opacity="0.69" transform="rotate(14 966.7 285.6)"/>
<rect x="744.8" y="565.1" width="10.9" height="3.5" fill="#2a2844" opacity="0.99" transform="rotate(115 744.8 565.1)"/>
<rect x="801.9" y="276.7" width="8.9" height="4.2" fill="#2a2844" opacity="0.62" transform="rotate(8 801.9 276.7)"/>
<rect x="800.4" y="269.8" width="8.1" height="3.4" fill="#ffffff" opacity="0.84" transform="rotate(105 800.4 269.8)"/>
<rect x="671.8" y="120.6" width="10.8" height="4.4" fill="#e8d0d8" opacity="0.63" transform="rotate(81 671.8 120.6)"/>
<rect x="1098.2" y="427.4" width="9.9" height="3.9" fill="#ffffff" opacity="0.89" transform="rotate(168 1098.2 427.4)"/>
<rect x="988.6" y="46.8" width="7.1" height="3.3" fill="#2a2844" opacity="0.64" transform="rotate(164 988.6 46.8)"/>
<rect x="991.1" y="418.7" width="6.9" height="3.4" fill="#3a3050" opacity="0.80" transform="rotate(109 991.1 418.7)"/>
<rect x="688.1" y="386.5" width="9.8" height="5.0" fill="#a0d0c0" opacity="0.79" transform="rotate(130 688.1 386.5)"/>
<rect x="976.5" y="563.7" width="7.4" height="3.2" fill="#ffffff" opacity="0.62" transform="rotate(41 976.5 563.7)"/>
<rect x="916.3" y="516.2" width="11.5" height="4.9" fill="#ffffff" opacity="0.97" transform="rotate(53 916.3 516.2)"/>
<rect x="1137.1" y="639.7" width="7.0" height="4.8" fill="#2a2844" opacity="0.76" transform="rotate(34 1137.1 639.7)"/>
<rect x="1022.1" y="479.3" width="10.0" height="5.0" fill="#f4ecf0" opacity="0.94" transform="rotate(84 1022.1 479.3)"/>
<rect x="933.4" y="233.9" width="9.7" height="3.2" fill="#f4ecf0" opacity="0.66" transform="rotate(163 933.4 233.9)"/>
<rect x="1347.2" y="532.6" width="6.8" height="4.3" fill="#f4ecf0" opacity="0.63" transform="rotate(7 1347.2 532.6)"/>
<rect x="857.1" y="677.4" width="11.2" height="4.8" fill="#ffffff" opacity="0.64" transform="rotate(169 857.1 677.4)"/>
<rect x="1004.0" y="721.4" width="10.5" height="3.2" fill="#e0a0a0" opacity="0.85" transform="rotate(135 1004.0 721.4)"/>
<rect x="1047.8" y="75.9" width="10.5" height="3.4" fill="#f4ecf0" opacity="0.77" transform="rotate(57 1047.8 75.9)"/>
<rect x="815.0" y="599.7" width="9.1" height="3.2" fill="#2a2844" opacity="0.62" transform="rotate(84 815.0 599.7)"/>
<rect x="1471.8" y="129.5" width="7.2" height="4.5" fill="#e0a0a0" opacity="0.60" transform="rotate(176 1471.8 129.5)"/>
<rect x="953.8" y="713.1" width="7.0" height="4.9" fill="#a0d0c0" opacity="0.80" transform="rotate(138 953.8 713.1)"/>
<rect x="1065.8" y="270.3" width="8.4" height="4.8" fill="#f4ecf0" opacity="0.96" transform="rotate(15 1065.8 270.3)"/>
<rect x="642.9" y="282.7" width="8.6" height="4.1" fill="#3a3050" opacity="0.99" transform="rotate(30 642.9 282.7)"/>
<rect x="1013.6" y="404.0" width="10.5" height="4.3" fill="#e8d0d8" opacity="0.73" transform="rotate(62 1013.6 404.0)"/>
<rect x="1261.4" y="659.7" width="9.3" height="3.6" fill="#d8e0f0" opacity="0.88" transform="rotate(83 1261.4 659.7)"/>
<rect x="870.9" y="351.1" width="7.4" height="3.4" fill="#2a2844" opacity="0.88" transform="rotate(54 870.9 351.1)"/>
<rect x="923.1" y="117.5" width="7.5" height="3.7" fill="#ffffff" opacity="0.66" transform="rotate(93 923.1 117.5)"/>
<rect x="1033.1" y="112.7" width="7.8" height="3.5" fill="#d8e0f0" opacity="0.96" transform="rotate(19 1033.1 112.7)"/>
<rect x="1231.6" y="601.2" width="9.0" height="4.3" fill="#2a2844" opacity="0.66" transform="rotate(83 1231.6 601.2)"/>
<rect x="1038.4" y="561.1" width="7.5" height="4.7" fill="#3a3050" opacity="0.83" transform="rotate(126 1038.4 561.1)"/>
<rect x="1070.6" y="588.3" width="11.1" height="4.4" fill="#ffffff" opacity="0.78" transform="rotate(115 1070.6 588.3)"/>
<rect x="961.1" y="680.0" width="8.4" height="4.4" fill="#e0a0a0" opacity="0.94" transform="rotate(28 961.1 680.0)"/>
<rect x="669.3" y="707.0" width="9.9" height="4.6" fill="#f8f0e0" opacity="0.80" transform="rotate(69 669.3 707.0)"/>
<rect x="1216.8" y="714.8" width="6.6" height="4.1" fill="#a0d0c0" opacity="0.89" transform="rotate(97 1216.8 714.8)"/>
<rect x="828.3" y="564.0" width="11.9" height="3.4" fill="#2a2844" opacity="0.97" transform="rotate(92 828.3 564.0)"/>
<rect x="1152.1" y="270.2" width="7.6" height="3.8" fill="#f0e0e8" opacity="0.77" transform="rotate(2 1152.1 270.2)"/>
<rect x="726.0" y="440.9" width="7.8" height="3.8" fill="#f0e0e8" opacity="0.99" transform="rotate(171 726.0 440.9)"/>
<rect x="714.1" y="351.2" width="11.6" height="3.1" fill="#3a3050" opacity="0.68" transform="rotate(143 714.1 351.2)"/>
<rect x="819.5" y="732.5" width="9.8" height="4.6" fill="#d8e0f0" opacity="0.79" transform="rotate(146 819.5 732.5)"/>
<rect x="917.0" y="577.5" width="10.7" height="3.9" fill="#f0e0e8" opacity="0.69" transform="rotate(141 917.0 577.5)"/>
<rect x="711.9" y="515.9" width="10.8" height="4.6" fill="#ffffff" opacity="0.86" transform="rotate(64 711.9 515.9)"/>
<rect x="664.3" y="501.0" width="11.6" height="4.7" fill="#ffffff" opacity="0.93" transform="rotate(10 664.3 501.0)"/>
<rect x="1139.6" y="595.9" width="11.0" height="4.3" fill="#f8f0e0" opacity="0.60" transform="rotate(2 1139.6 595.9)"/>
<rect x="879.3" y="77.1" width="7.4" height="4.6" fill="#f0e0e8" opacity="0.66" transform="rotate(62 879.3 77.1)"/>
<rect x="827.5" y="601.7" width="11.3" height="4.2" fill="#a0d0c0" opacity="0.87" transform="rotate(140 827.5 601.7)"/>
<rect x="1179.8" y="178.0" width="9.0" height="3.1" fill="#e0a0a0" opacity="0.66" transform="rotate(84 1179.8 178.0)"/>
<rect x="988.2" y="455.7" width="7.0" height="3.6" fill="#d8e0f0" opacity="0.80" transform="rotate(125 988.2 455.7)"/>
<rect x="1134.9" y="638.8" width="8.5" height="4.9" fill="#3a3050" opacity="0.85" transform="rotate(13 1134.9 638.8)"/>
<rect x="944.4" y="759.2" width="6.6" height="4.0" fill="#ffffff" opacity="0.66" transform="rotate(136 944.4 759.2)"/>
<rect x="915.4" y="257.3" width="8.2" height="3.9" fill="#ffffff" opacity="0.91" transform="rotate(94 915.4 257.3)"/>
<rect x="984.2" y="219.8" width="9.0" height="3.7" fill="#ffffff" opacity="0.95" transform="rotate(177 984.2 219.8)"/>
<rect x="1067.3" y="741.0" width="10.8" height="3.7" fill="#2a2844" opacity="0.72" transform="rotate(57 1067.3 741.0)"/>
<rect x="1090.5" y="757.3" width="9.3" height="3.8" fill="#f8f0e0" opacity="0.76" transform="rotate(103 1090.5 757.3)"/>
<rect x="966.8" y="4.7" width="11.5" height="4.2" fill="#a0d0c0" opacity="0.92" transform="rotate(118 966.8 4.7)"/>
<rect x="761.4" y="453.2" width="7.3" height="4.3" fill="#f8f0e0" opacity="0.91" transform="rotate(82 761.4 453.2)"/>
<rect x="724.6" y="320.4" width="11.6" height="3.0" fill="#d8e0f0" opacity="0.66" transform="rotate(156 724.6 320.4)"/>
<rect x="553.2" y="427.2" width="7.8" height="3.8" fill="#3a3050" opacity="0.77" transform="rotate(57 553.2 427.2)"/>
<rect x="645.8" y="307.5" width="10.1" height="4.2" fill="#e8d0d8" opacity="0.86" transform="rotate(178 645.8 307.5)"/>
<rect x="1168.5" y="361.3" width="6.6" height="4.3" fill="#f4ecf0" opacity="0.66" transform="rotate(38 1168.5 361.3)"/>
<rect x="954.3" y="508.7" width="11.2" height="3.4" fill="#d8e0f0" opacity="0.79" transform="rotate(21 954.3 508.7)"/>
<rect x="1000.2" y="546.7" width="10.4" height="3.4" fill="#e8d0d8" opacity="0.91" transform="rotate(9 1000.2 546.7)"/>
<rect x="971.7" y="477.8" width="8.8" height="4.9" fill="#f4ecf0" opacity="0.99" transform="rotate(45 971.7 477.8)"/>
<rect x="880.9" y="8.7" width="9.9" height="4.6" fill="#2a2844" opacity="0.72" transform="rotate(14 880.9 8.7)"/>
<rect x="1235.1" y="369.6" width="8.2" height="4.1" fill="#e8d0d8" opacity="0.87" transform="rotate(78 1235.1 369.6)"/>
<rect x="1414.0" y="734.4" width="11.7" height="3.3" fill="#e0a0a0" opacity="0.79" transform="rotate(144 1414.0 734.4)"/>
<rect x="1397.1" y="430.8" width="6.4" height="4.9" fill="#ffffff" opacity="0.93" transform="rotate(126 1397.1 430.8)"/>
<rect x="836.4" y="660.9" width="6.1" height="3.3" fill="#ffffff" opacity="0.83" transform="rotate(149 836.4 660.9)"/>
<rect x="1250.8" y="613.7" width="6.0" height="3.5" fill="#f4ecf0" opacity="0.83" transform="rotate(76 1250.8 613.7)"/>
<rect x="952.0" y="676.9" width="6.9" height="5.0" fill="#e0a0a0" opacity="0.82" transform="rotate(143 952.0 676.9)"/>
<rect x="1118.6" y="263.6" width="9.3" height="4.6" fill="#ffffff" opacity="0.90" transform="rotate(36 1118.6 263.6)"/>
<rect x="953.6" y="300.6" width="11.6" height="4.2" fill="#a0d0c0" opacity="0.75" transform="rotate(1 953.6 300.6)"/>
<rect x="1010.3" y="440.5" width="11.3" height="4.0" fill="#ffffff" opacity="0.84" transform="rotate(85 1010.3 440.5)"/>
<rect x="804.7" y="161.6" width="10.8" height="3.6" fill="#a0d0c0" opacity="0.74" transform="rotate(104 804.7 161.6)"/>
<rect x="1102.0" y="701.2" width="11.2" height="3.7" fill="#ffffff" opacity="0.63" transform="rotate(83 1102.0 701.2)"/>
<rect x="837.9" y="453.9" width="9.1" height="3.0" fill="#2a2844" opacity="1.00" transform="rotate(6 837.9 453.9)"/>
<rect x="1012.8" y="323.7" width="10.6" height="4.6" fill="#f4ecf0" opacity="0.70" transform="rotate(173 1012.8 323.7)"/>
<rect x="557.0" y="287.4" width="6.2" height="3.7" fill="#f8f0e0" opacity="0.79" transform="rotate(127 557.0 287.4)"/>
<rect x="624.5" y="536.8" width="7.9" height="3.5" fill="#a0d0c0" opacity="0.97" transform="rotate(16 624.5 536.8)"/>
<rect x="1333.9" y="753.7" width="6.2" height="3.5" fill="#f4ecf0" opacity="0.96" transform="rotate(63 1333.9 753.7)"/>
<rect x="1532.8" y="636.3" width="10.7" height="4.4" fill="#f4ecf0" opacity="0.99" transform="rotate(116 1532.8 636.3)"/>
<rect x="1161.0" y="4.4" width="10.5" height="4.2" fill="#e0a0a0" opacity="0.86" transform="rotate(79 1161.0 4.4)"/>
<rect x="1114.7" y="246.2" width="6.7" height="4.0" fill="#e8d0d8" opacity="0.70" transform="rotate(30 1114.7 246.2)"/>
<rect x="714.4" y="607.1" width="11.0" height="3.2" fill="#e8d0d8" opacity="0.75" transform="rotate(111 714.4 607.1)"/>
<rect x="1096.4" y="703.7" width="6.1" height="3.2" fill="#ffffff" opacity="0.73" transform="rotate(175 1096.4 703.7)"/>
<rect x="888.9" y="168.5" width="10.3" height="4.1" fill="#d8e0f0" opacity="0.95" transform="rotate(26 888.9 168.5)"/>
<rect x="884.9" y="317.9" width="6.2" height="4.1" fill="#d8e0f0" opacity="0.92" transform="rotate(53 884.9 317.9)"/>
<rect x="766.6" y="686.4" width="11.9" height="3.1" fill="#ffffff" opacity="0.87" transform="rotate(161 766.6 686.4)"/>
<rect x="997.4" y="425.6" width="6.7" height="4.5" fill="#d8e0f0" opacity="0.77" transform="rotate(174 997.4 425.6)"/>
<rect x="978.2" y="681.1" width="10.4" height="3.6" fill="#a0d0c0" opacity="0.61" transform="rotate(176 978.2 681.1)"/>
<rect x="1100.6" y="400.2" width="8.6" height="4.8" fill="#e8d0d8" opacity="0.83" transform="rotate(39 1100.6 400.2)"/>
<rect x="1153.1" y="175.1" width="9.6" height="4.7" fill="#d8e0f0" opacity="0.89" transform="rotate(160 1153.1 175.1)"/>
<rect x="732.2" y="133.2" width="10.0" height="4.3" fill="#f4ecf0" opacity="0.72" transform="rotate(34 732.2 133.2)"/>
<rect x="740.0" y="657.0" width="6.1" height="4.8" fill="#d8e0f0" opacity="0.95" transform="rotate(85 740.0 657.0)"/>
<rect x="1053.1" y="533.7" width="11.1" height="3.7" fill="#f8f0e0" opacity="0.99" transform="rotate(167 1053.1 533.7)"/>
<rect x="1175.5" y="390.1" width="9.2" height="3.0" fill="#e8d0d8" opacity="0.69" transform="rotate(174 1175.5 390.1)"/>
<rect x="971.3" y="636.4" width="8.8" height="3.5" fill="#f8f0e0" opacity="0.74" transform="rotate(79 971.3 636.4)"/>
<rect x="790.9" y="545.0" width="6.7" height="4.0" fill="#f8f0e0" opacity="0.71" transform="rotate(90 790.9 545.0)"/>
<rect x="1360.1" y="411.6" width="7.4" height="4.3" fill="#f4ecf0" opacity="0.76" transform="rotate(83 1360.1 411.6)"/>
<rect x="1344.2" y="712.6" width="8.5" height="4.7" fill="#f4ecf0" opacity="0.76" transform="rotate(94 1344.2 712.6)"/>
<rect x="1023.2" y="182.7" width="8.6" height="5.0" fill="#f0e0e8" opacity="0.97" transform="rotate(144 1023.2 182.7)"/>
<rect x="760.9" y="644.2" width="9.1" height="4.9" fill="#f0e0e8" opacity="0.70" transform="rotate(168 760.9 644.2)"/>
<rect x="965.2" y="82.9" width="7.9" height="3.4" fill="#f0e0e8" opacity="0.69" transform="rotate(120 965.2 82.9)"/>
<rect x="952.4" y="737.0" width="11.6" height="4.3" fill="#f4ecf0" opacity="0.95" transform="rotate(145 952.4 737.0)"/>
<rect x="1061.7" y="207.8" width="11.5" height="4.2" fill="#f0e0e8" opacity="0.81" transform="rotate(45 1061.7 207.8)"/>
<rect x="990.9" y="85.9" width="7.0" height="3.1" fill="#d8e0f0" opacity="0.97" transform="rotate(172 990.9 85.9)"/>
<rect x="873.3" y="695.8" width="7.6" height="4.5" fill="#e0a0a0" opacity="0.71" transform="rotate(133 873.3 695.8)"/>
<rect x="734.6" y="494.3" width="10.3" height="3.9" fill="#e0a0a0" opacity="0.85" transform="rotate(98 734.6 494.3)"/>
<rect x="778.0" y="622.3" width="8.0" height="3.4" fill="#f0e0e8" opacity="0.99" transform="rotate(98 778.0 622.3)"/>
<rect x="1217.5" y="655.0" width="9.3" height="4.0" fill="#d8e0f0" opacity="1.00" transform="rotate(51 1217.5 655.0)"/>
<rect x="1002.4" y="43.2" width="9.3" height="4.2" fill="#a0d0c0" opacity="0.86" transform="rotate(62 1002.4 43.2)"/>
<rect x="779.9" y="558.9" width="7.4" height="4.9" fill="#ffffff" opacity="0.66" transform="rotate(132 779.9 558.9)"/>
<rect x="1159.3" y="507.9" width="7.2" height="4.2" fill="#f8f0e0" opacity="0.94" transform="rotate(49 1159.3 507.9)"/>
<rect x="955.9" y="577.4" width="10.7" height="4.4" fill="#f8f0e0" opacity="0.65" transform="rotate(164 955.9 577.4)"/>
<rect x="733.2" y="731.7" width="8.5" height="4.6" fill="#f0e0e8" opacity="0.84" transform="rotate(157 733.2 731.7)"/>
<rect x="834.3" y="647.3" width="7.7" height="3.7" fill="#2a2844" opacity="0.81" transform="rotate(63 834.3 647.3)"/>
<rect x="820.1" y="598.2" width="9.0" height="3.9" fill="#e8d0d8" opacity="0.72" transform="rotate(33 820.1 598.2)"/>
<rect x="1131.3" y="331.1" width="7.4" height="4.6" fill="#2a2844" opacity="0.99" transform="rotate(59 1131.3 331.1)"/>
<rect x="448.1" y="692.0" width="6.3" height="4.1" fill="#d8e0f0" opacity="0.97" transform="rotate(89 448.1 692.0)"/>
<rect x="770.9" y="393.1" width="8.3" height="3.7" fill="#f4ecf0" opacity="0.74" transform="rotate(107 770.9 393.1)"/>
<rect x="754.1" y="334.5" width="12.0" height="3.7" fill="#e8d0d8" opacity="0.93" transform="rotate(95 754.1 334.5)"/>
<rect x="921.1" y="710.9" width="11.8" height="4.3" fill="#ffffff" opacity="0.93" transform="rotate(94 921.1 710.9)"/>
<rect x="1205.2" y="383.7" width="7.1" height="4.3" fill="#3a3050" opacity="0.74" transform="rotate(108 1205.2 383.7)"/>
<rect x="936.9" y="312.7" width="7.8" height="4.4" fill="#f8f0e0" opacity="0.72" transform="rotate(0 936.9 312.7)"/>
<rect x="929.4" y="445.5" width="7.2" height="4.0" fill="#3a3050" opacity="0.71" transform="rotate(99 929.4 445.5)"/>
<rect x="1223.1" y="109.2" width="9.6" height="3.3" fill="#f4ecf0" opacity="0.80" transform="rotate(93 1223.1 109.2)"/>
<rect x="801.7" y="76.1" width="9.1" height="4.6" fill="#f4ecf0" opacity="0.92" transform="rotate(110 801.7 76.1)"/>
<rect x="762.0" y="439.9" width="7.4" height="3.6" fill="#2a2844" opacity="0.85" transform="rotate(5 762.0 439.9)"/>
<rect x="949.7" y="167.2" width="10.6" height="3.1" fill="#ffffff" opacity="0.70" transform="rotate(9 949.7 167.2)"/>
<rect x="1117.9" y="683.1" width="7.8" height="4.2" fill="#f8f0e0" opacity="0.80" transform="rotate(172 1117.9 683.1)"/>
<rect x="813.0" y="184.6" width="10.3" height="3.4" fill="#e0a0a0" opacity="0.95" transform="rotate(55 813.0 184.6)"/>
<rect x="1055.7" y="288.0" width="11.3" height="3.8" fill="#f0e0e8" opacity="0.73" transform="rotate(65 1055.7 288.0)"/>
<rect x="798.6" y="730.5" width="11.5" height="4.1" fill="#ffffff" opacity="0.79" transform="rotate(69 798.6 730.5)"/>
<rect x="1296.3" y="180.3" width="10.0" height="3.7" fill="#f8f0e0" opacity="0.88" transform="rotate(28 1296.3 180.3)"/>
<rect x="1088.8" y="598.5" width="8.8" height="4.6" fill="#ffffff" opacity="0.75" transform="rotate(43 1088.8 598.5)"/>
<rect x="1281.0" y="549.1" width="11.8" height="3.4" fill="#ffffff" opacity="0.80" transform="rotate(171 1281.0 549.1)"/>
<rect x="693.7" y="452.9" width="11.9" height="4.1" fill="#e8d0d8" opacity="0.80" transform="rotate(72 693.7 452.9)"/>
<rect x="1074.0" y="389.9" width="7.6" height="4.5" fill="#2a2844" opacity="0.86" transform="rotate(69 1074.0 389.9)"/>
<rect x="893.0" y="110.3" width="10.3" height="4.4" fill="#ffffff" opacity="0.69" transform="rotate(139 893.0 110.3)"/>
<rect x="922.4" y="427.1" width="9.0" height="3.6" fill="#ffffff" opacity="0.72" transform="rotate(11 922.4 427.1)"/>
<rect x="882.5" y="219.3" width="8.4" height="3.7" fill="#3a3050" opacity="0.79" transform="rotate(151 882.5 219.3)"/>
<rect x="864.8" y="313.6" width="10.2" height="3.5" fill="#3a3050" opacity="0.74" transform="rotate(152 864.8 313.6)"/>
<rect x="1162.4" y="419.8" width="11.6" height="4.1" fill="#a0d0c0" opacity="0.80" transform="rotate(40 1162.4 419.8)"/>
<rect x="977.1" y="520.1" width="6.0" height="4.7" fill="#f4ecf0" opacity="0.71" transform="rotate(139 977.1 520.1)"/>
<rect x="1252.0" y="665.1" width="10.2" height="4.9" fill="#ffffff" opacity="0.61" transform="rotate(122 1252.0 665.1)"/>
<rect x="1122.4" y="569.6" width="10.2" height="3.8" fill="#d8e0f0" opacity="0.93" transform="rotate(134 1122.4 569.6)"/>
<rect x="1241.8" y="258.6" width="10.1" height="4.7" fill="#3a3050" opacity="0.80" transform="rotate(112 1241.8 258.6)"/>
<rect x="900.9" y="530.7" width="9.1" height="4.9" fill="#f4ecf0" opacity="0.90" transform="rotate(22 900.9 530.7)"/>
<rect x="1431.1" y="424.9" width="7.0" height="4.6" fill="#f4ecf0" opacity="0.70" transform="rotate(42 1431.1 424.9)"/>
<rect x="847.1" y="127.7" width="6.6" height="4.3" fill="#e0a0a0" opacity="0.87" transform="rotate(24 847.1 127.7)"/>
<rect x="896.6" y="183.7" width="8.7" height="4.9" fill="#e8d0d8" opacity="0.72" transform="rotate(63 896.6 183.7)"/>
<rect x="823.3" y="446.5" width="9.8" height="3.2" fill="#3a3050" opacity="0.98" transform="rotate(76 823.3 446.5)"/>
<rect x="815.8" y="350.5" width="11.0" height="3.2" fill="#ffffff" opacity="0.74" transform="rotate(52 815.8 350.5)"/>
<rect x="944.8" y="234.8" width="7.0" height="3.9" fill="#a0d0c0" opacity="0.72" transform="rotate(102 944.8 234.8)"/>
<rect x="1099.2" y="54.6" width="12.0" height="4.5" fill="#2a2844" opacity="0.89" transform="rotate(15 1099.2 54.6)"/>
<rect x="952.4" y="727.1" width="10.7" height="3.6" fill="#d8e0f0" opacity="0.64" transform="rotate(64 952.4 727.1)"/>
<rect x="875.7" y="187.0" width="6.2" height="4.5" fill="#e8d0d8" opacity="0.72" transform="rotate(151 875.7 187.0)"/>
<rect x="829.3" y="731.1" width="11.4" height="4.4" fill="#d8e0f0" opacity="0.89" transform="rotate(18 829.3 731.1)"/>
<rect x="762.9" y="243.3" width="9.3" height="3.7" fill="#f4ecf0" opacity="0.70" transform="rotate(149 762.9 243.3)"/>
<rect x="1266.1" y="306.4" width="7.3" height="3.8" fill="#2a2844" opacity="1.00" transform="rotate(131 1266.1 306.4)"/>
<rect x="895.7" y="522.9" width="8.7" height="4.9" fill="#e0a0a0" opacity="0.62" transform="rotate(16 895.7 522.9)"/>
<rect x="935.1" y="364.3" width="8.2" height="3.1" fill="#a0d0c0" opacity="0.93" transform="rotate(109 935.1 364.3)"/>
<rect x="802.9" y="502.8" width="8.5" height="3.7" fill="#e8d0d8" opacity="0.87" transform="rotate(78 802.9 502.8)"/>
<rect x="1077.1" y="687.0" width="7.8" height="3.9" fill="#ffffff" opacity="0.74" transform="rotate(101 1077.1 687.0)"/>
<rect x="678.2" y="392.8" width="9.2" height="4.3" fill="#2a2844" opacity="0.76" transform="rotate(27 678.2 392.8)"/>
<rect x="1045.8" y="471.1" width="6.4" height="4.4" fill="#2a2844" opacity="0.72" transform="rotate(109 1045.8 471.1)"/>
<rect x="774.1" y="498.9" width="11.2" height="4.1" fill="#ffffff" opacity="0.94" transform="rotate(114 774.1 498.9)"/>
<rect x="1099.0" y="515.8" width="6.5" height="4.3" fill="#f0e0e8" opacity="0.83" transform="rotate(66 1099.0 515.8)"/>
<rect x="866.9" y="335.4" width="7.4" height="4.9" fill="#ffffff" opacity="0.90" transform="rotate(36 866.9 335.4)"/>
<rect x="1127.8" y="655.3" width="6.6" height="4.1" fill="#a0d0c0" opacity="0.80" transform="rotate(45 1127.8 655.3)"/>
<rect x="1066.1" y="691.0" width="11.1" height="4.4" fill="#a0d0c0" opacity="0.65" transform="rotate(144 1066.1 691.0)"/>
<rect x="608.9" y="575.2" width="11.9" height="4.4" fill="#f0e0e8" opacity="0.93" transform="rotate(18 608.9 575.2)"/>
<rect x="1086.8" y="70.8" width="9.7" height="3.8" fill="#2a2844" opacity="0.62" transform="rotate(8 1086.8 70.8)"/>
<rect x="1250.0" y="726.3" width="6.7" height="3.3" fill="#ffffff" opacity="0.64" transform="rotate(163 1250.0 726.3)"/>
<rect x="469.7" y="661.8" width="10.5" height="3.7" fill="#d8e0f0" opacity="0.87" transform="rotate(137 469.7 661.8)"/>
<rect x="936.3" y="548.6" width="9.6" height="3.2" fill="#f8f0e0" opacity="0.92" transform="rotate(98 936.3 548.6)"/>
<rect x="1142.4" y="269.3" width="6.1" height="5.0" fill="#e0a0a0" opacity="0.92" transform="rotate(79 1142.4 269.3)"/>
<rect x="1110.7" y="220.4" width="8.3" height="3.3" fill="#d8e0f0" opacity="0.82" transform="rotate(157 1110.7 220.4)"/>
<rect x="1276.9" y="721.1" width="8.1" height="3.3" fill="#f4ecf0" opacity="0.95" transform="rotate(90 1276.9 721.1)"/>
<rect x="729.6" y="392.9" width="9.2" height="3.6" fill="#ffffff" opacity="0.85" transform="rotate(23 729.6 392.9)"/>
<rect x="1099.3" y="355.5" width="8.3" height="3.7" fill="#ffffff" opacity="0.83" transform="rotate(1 1099.3 355.5)"/>
<rect x="1192.1" y="172.2" width="11.3" height="4.2" fill="#e8d0d8" opacity="0.89" transform="rotate(113 1192.1 172.2)"/>
<rect x="956.6" y="380.0" width="9.4" height="4.1" fill="#f4ecf0" opacity="1.00" transform="rotate(172 956.6 380.0)"/>
<rect x="1122.7" y="324.0" width="6.6" height="4.6" fill="#e8d0d8" opacity="0.70" transform="rotate(142 1122.7 324.0)"/>
<rect x="1078.9" y="517.8" width="10.6" height="4.5" fill="#ffffff" opacity="0.85" transform="rotate(91 1078.9 517.8)"/>
<rect x="1045.1" y="679.6" width="12.0" height="3.3" fill="#3a3050" opacity="0.96" transform="rotate(36 1045.1 679.6)"/>
<rect x="695.2" y="344.4" width="9.4" height="3.6" fill="#d8e0f0" opacity="0.63" transform="rotate(30 695.2 344.4)"/>
<rect x="949.1" y="434.6" width="11.8" height="3.1" fill="#2a2844" opacity="0.97" transform="rotate(34 949.1 434.6)"/>
<rect x="1219.2" y="588.6" width="11.2" height="3.1" fill="#d8e0f0" opacity="0.96" transform="rotate(87 1219.2 588.6)"/>
<rect x="966.5" y="682.3" width="10.6" height="4.3" fill="#f4ecf0" opacity="0.61" transform="rotate(42 966.5 682.3)"/>
<rect x="850.0" y="458.2" width="9.9" height="3.4" fill="#2a2844" opacity="0.99" transform="rotate(132 850.0 458.2)"/>
<rect x="1083.6" y="36.9" width="10.9" height="4.2" fill="#d8e0f0" opacity="0.60" transform="rotate(129 1083.6 36.9)"/>
<rect x="867.6" y="161.3" width="10.5" height="4.3" fill="#ffffff" opacity="0.87" transform="rotate(72 867.6 161.3)"/>
<rect x="1212.8" y="605.2" width="9.7" height="4.6" fill="#e0a0a0" opacity="0.76" transform="rotate(177 1212.8 605.2)"/>
<rect x="1428.7" y="663.7" width="7.9" height="4.3" fill="#ffffff" opacity="0.77" transform="rotate(56 1428.7 663.7)"/>
<rect x="1025.4" y="638.9" width="8.2" height="3.7" fill="#e8d0d8" opacity="0.95" transform="rotate(122 1025.4 638.9)"/>
<rect x="1021.1" y="235.0" width="11.9" height="3.9" fill="#d8e0f0" opacity="0.81" transform="rotate(50 1021.1 235.0)"/>
<rect x="554.1" y="100.2" width="8.9" height="4.3" fill="#3a3050" opacity="0.74" transform="rotate(139 554.1 100.2)"/>
<rect x="1042.5" y="68.3" width="6.8" height="3.1" fill="#e8d0d8" opacity="0.82" transform="rotate(90 1042.5 68.3)"/>
<rect x="943.0" y="661.8" width="10.7" height="4.1" fill="#e0a0a0" opacity="0.88" transform="rotate(63 943.0 661.8)"/>
<rect x="834.3" y="608.4" width="7.9" height="4.8" fill="#f8f0e0" opacity="0.89" transform="rotate(19 834.3 608.4)"/>
<rect x="878.5" y="173.4" width="11.4" height="3.8" fill="#f4ecf0" opacity="0.94" transform="rotate(118 878.5 173.4)"/>
<rect x="778.5" y="191.5" width="8.6" height="3.5" fill="#3a3050" opacity="0.90" transform="rotate(36 778.5 191.5)"/>
<rect x="1376.7" y="725.2" width="7.8" height="3.2" fill="#ffffff" opacity="0.95" transform="rotate(0 1376.7 725.2)"/>
<rect x="707.0" y="656.1" width="11.2" height="5.0" fill="#f8f0e0" opacity="0.61" transform="rotate(53 707.0 656.1)"/>
<rect x="1127.0" y="382.0" width="10.5" height="3.9" fill="#3a3050" opacity="0.77" transform="rotate(71 1127.0 382.0)"/>
<rect x="1142.8" y="698.1" width="11.3" height="5.0" fill="#3a3050" opacity="0.69" transform="rotate(5 1142.8 698.1)"/>
<rect x="959.2" y="383.6" width="8.6" height="3.2" fill="#ffffff" opacity="1.00" transform="rotate(3 959.2 383.6)"/>
<rect x="920.5" y="49.1" width="11.7" height="4.9" fill="#ffffff" opacity="0.60" transform="rotate(94 920.5 49.1)"/>
<rect x="929.1" y="561.0" width="6.7" height="3.7" fill="#ffffff" opacity="0.97" transform="rotate(89 929.1 561.0)"/>
<rect x="855.0" y="737.6" width="11.8" height="3.4" fill="#f4ecf0" opacity="0.88" transform="rotate(13 855.0 737.6)"/>
<rect x="1079.1" y="310.2" width="8.2" height="3.0" fill="#a0d0c0" opacity="0.86" transform="rotate(123 1079.1 310.2)"/>
<rect x="1204.5" y="566.4" width="8.5" height="4.1" fill="#f0e0e8" opacity="0.66" transform="rotate(68 1204.5 566.4)"/>
<rect x="957.6" y="627.4" width="6.5" height="4.2" fill="#f0e0e8" opacity="0.89" transform="rotate(6 957.6 627.4)"/>
<rect x="908.9" y="491.1" width="7.9" height="4.9" fill="#e0a0a0" opacity="0.90" transform="rotate(0 908.9 491.1)"/>
<rect x="777.1" y="387.7" width="12.0" height="3.5" fill="#f0e0e8" opacity="0.90" transform="rotate(113 777.1 387.7)"/>
<rect x="929.1" y="741.7" width="10.0" height="4.7" fill="#3a3050" opacity="0.92" transform="rotate(12 929.1 741.7)"/>
<rect x="933.8" y="359.7" width="9.1" height="4.0" fill="#a0d0c0" opacity="0.66" transform="rotate(39 933.8 359.7)"/>
<rect x="1101.1" y="512.0" width="10.0" height="3.4" fill="#3a3050" opacity="0.94" transform="rotate(170 1101.1 512.0)"/>
<rect x="1193.4" y="659.5" width="8.3" height="4.7" fill="#e8d0d8" opacity="0.65" transform="rotate(147 1193.4 659.5)"/>
<rect x="913.9" y="277.2" width="9.1" height="3.6" fill="#d8e0f0" opacity="0.71" transform="rotate(119 913.9 277.2)"/>
<rect x="753.2" y="757.7" width="8.7" height="4.0" fill="#e8d0d8" opacity="0.90" transform="rotate(143 753.2 757.7)"/>
<rect x="1117.1" y="371.5" width="9.7" height="4.0" fill="#a0d0c0" opacity="0.70" transform="rotate(144 1117.1 371.5)"/>
<rect x="1131.5" y="545.8" width="7.9" height="3.5" fill="#3a3050" opacity="0.64" transform="rotate(150 1131.5 545.8)"/>
<rect x="1040.6" y="375.0" width="6.8" height="4.9" fill="#f4ecf0" opacity="0.91" transform="rotate(52 1040.6 375.0)"/>
<rect x="747.4" y="737.0" width="9.6" height="3.5" fill="#e8d0d8" opacity="0.94" transform="rotate(42 747.4 737.0)"/>
<rect x="1130.2" y="738.2" width="8.2" height="4.3" fill="#e0a0a0" opacity="0.63" transform="rotate(59 1130.2 738.2)"/>
<rect x="910.8" y="288.3" width="9.0" height="4.8" fill="#2a2844" opacity="0.61" transform="rotate(136 910.8 288.3)"/>
<rect x="757.9" y="756.1" width="6.4" height="3.8" fill="#f4ecf0" opacity="0.90" transform="rotate(24 757.9 756.1)"/>
<rect x="788.0" y="305.3" width="10.1" height="4.1" fill="#f8f0e0" opacity="0.91" transform="rotate(138 788.0 305.3)"/>
<rect x="945.2" y="377.7" width="7.3" height="3.9" fill="#ffffff" opacity="0.68" transform="rotate(148 945.2 377.7)"/>
<rect x="965.9" y="366.9" width="10.1" height="3.8" fill="#f4ecf0" opacity="1.00" transform="rotate(105 965.9 366.9)"/>
<rect x="1082.2" y="254.1" width="6.0" height="5.0" fill="#ffffff" opacity="0.70" transform="rotate(49 1082.2 254.1)"/>
<rect x="884.0" y="291.6" width="7.8" height="3.8" fill="#d8e0f0" opacity="0.87" transform="rotate(159 884.0 291.6)"/>
<rect x="816.5" y="609.5" width="7.5" height="3.4" fill="#ffffff" opacity="0.81" transform="rotate(9 816.5 609.5)"/>
<rect x="950.6" y="707.1" width="8.7" height="4.4" fill="#f4ecf0" opacity="0.89" transform="rotate(119 950.6 707.1)"/>
<rect x="851.4" y="405.1" width="9.4" height="3.6" fill="#d8e0f0" opacity="0.92" transform="rotate(49 851.4 405.1)"/>
<rect x="1037.4" y="739.6" width="8.4" height="4.5" fill="#e8d0d8" opacity="0.68" transform="rotate(36 1037.4 739.6)"/>
<rect x="1148.2" y="329.6" width="6.3" height="4.7" fill="#e8d0d8" opacity="0.84" transform="rotate(12 1148.2 329.6)"/>
<rect x="1383.0" y="560.3" width="7.3" height="4.4" fill="#a0d0c0" opacity="0.92" transform="rotate(134 1383.0 560.3)"/>
<rect x="1020.6" y="637.1" width="11.5" height="3.4" fill="#f8f0e0" opacity="0.64" transform="rotate(18 1020.6 637.1)"/>
<rect x="1231.5" y="500.7" width="11.4" height="4.4" fill="#e8d0d8" opacity="0.62" transform="rotate(27 1231.5 500.7)"/>
<rect x="935.7" y="442.4" width="9.4" height="3.3" fill="#ffffff" opacity="0.73" transform="rotate(164 935.7 442.4)"/>
<rect x="953.9" y="487.0" width="9.3" height="3.2" fill="#f0e0e8" opacity="0.89" transform="rotate(83 953.9 487.0)"/>
<rect x="1204.4" y="499.7" width="9.9" height="4.0" fill="#f4ecf0" opacity="0.80" transform="rotate(13 1204.4 499.7)"/>
<rect x="985.7" y="706.7" width="8.9" height="4.7" fill="#f8f0e0" opacity="0.82" transform="rotate(107 985.7 706.7)"/>
<rect x="1032.4" y="687.2" width="7.8" height="4.2" fill="#ffffff" opacity="0.60" transform="rotate(18 1032.4 687.2)"/>
<rect x="1199.0" y="341.7" width="10.5" height="3.4" fill="#f8f0e0" opacity="0.72" transform="rotate(141 1199.0 341.7)"/>
<rect x="1054.6" y="550.0" width="10.5" height="3.2" fill="#f4ecf0" opacity="0.76" transform="rotate(29 1054.6 550.0)"/>
<rect x="839.1" y="504.0" width="7.0" height="4.9" fill="#e0a0a0" opacity="0.94" transform="rotate(59 839.1 504.0)"/>
<rect x="1178.4" y="230.6" width="6.6" height="3.5" fill="#a0d0c0" opacity="0.71" transform="rotate(27 1178.4 230.6)"/>
<rect x="1174.1" y="385.2" width="7.2" height="3.8" fill="#ffffff" opacity="0.65" transform="rotate(36 1174.1 385.2)"/>
<rect x="939.7" y="182.1" width="6.6" height="3.1" fill="#ffffff" opacity="0.88" transform="rotate(142 939.7 182.1)"/>
<rect x="679.1" y="523.6" width="10.5" height="3.3" fill="#f0e0e8" opacity="0.61" transform="rotate(47 679.1 523.6)"/>
<rect x="899.4" y="433.1" width="10.0" height="3.4" fill="#a0d0c0" opacity="0.91" transform="rotate(43 899.4 433.1)"/>
<rect x="900.2" y="540.2" width="7.5" height="4.2" fill="#2a2844" opacity="0.62" transform="rotate(176 900.2 540.2)"/>
<rect x="1007.2" y="230.7" width="10.6" height="4.2" fill="#f0e0e8" opacity="0.73" transform="rotate(32 1007.2 230.7)"/>
<rect x="831.7" y="597.8" width="10.7" height="3.3" fill="#ffffff" opacity="0.67" transform="rotate(92 831.7 597.8)"/>
<rect x="1006.3" y="702.9" width="10.3" height="3.1" fill="#f4ecf0" opacity="0.95" transform="rotate(0 1006.3 702.9)"/>
<rect x="817.6" y="378.0" width="11.4" height="4.5" fill="#3a3050" opacity="0.68" transform="rotate(114 817.6 378.0)"/>
<rect x="1059.2" y="738.2" width="10.8" height="4.0" fill="#d8e0f0" opacity="0.80" transform="rotate(138 1059.2 738.2)"/>
<rect x="841.2" y="661.8" width="11.8" height="4.1" fill="#d8e0f0" opacity="0.65" transform="rotate(170 841.2 661.8)"/>
<rect x="987.2" y="182.5" width="9.4" height="4.8" fill="#f4ecf0" opacity="0.97" transform="rotate(103 987.2 182.5)"/>
<rect x="1087.6" y="715.7" width="8.4" height="3.2" fill="#ffffff" opacity="0.93" transform="rotate(117 1087.6 715.7)"/>
<rect x="794.1" y="228.4" width="11.7" height="4.8" fill="#d8e0f0" opacity="0.76" transform="rotate(85 794.1 228.4)"/>
<rect x="1079.9" y="347.7" width="7.3" height="3.7" fill="#d8e0f0" opacity="0.85" transform="rotate(152 1079.9 347.7)"/>
<rect x="940.8" y="285.5" width="8.3" height="3.7" fill="#ffffff" opacity="0.67" transform="rotate(27 940.8 285.5)"/>
<rect x="1249.2" y="679.4" width="9.0" height="4.9" fill="#ffffff" opacity="1.00" transform="rotate(91 1249.2 679.4)"/>
<rect x="958.9" y="648.7" width="7.5" height="4.1" fill="#3a3050" opacity="0.89" transform="rotate(118 958.9 648.7)"/>
<rect x="756.4" y="679.3" width="6.5" height="4.2" fill="#ffffff" opacity="0.98" transform="rotate(79 756.4 679.3)"/>
<rect x="1354.5" y="614.6" width="9.9" height="4.0" fill="#3a3050" opacity="0.61" transform="rotate(124 1354.5 614.6)"/>
<rect x="1163.3" y="236.5" width="6.9" height="4.2" fill="#e0a0a0" opacity="0.98" transform="rotate(82 1163.3 236.5)"/>
<rect x="1093.4" y="446.5" width="6.3" height="3.8" fill="#d8e0f0" opacity="0.86" transform="rotate(134 1093.4 446.5)"/>
<rect x="896.9" y="476.7" width="10.6" height="3.1" fill="#f8f0e0" opacity="0.76" transform="rotate(98 896.9 476.7)"/>
<rect x="959.5" y="437.1" width="10.8" height="3.7" fill="#f4ecf0" opacity="0.81" transform="rotate(25 959.5 437.1)"/>
<rect x="1088.3" y="40.7" width="8.3" height="4.9" fill="#d8e0f0" opacity="0.67" transform="rotate(173 1088.3 40.7)"/>
<rect x="1174.9" y="677.3" width="9.7" height="4.9" fill="#ffffff" opacity="0.87" transform="rotate(72 1174.9 677.3)"/>
<rect x="791.0" y="732.3" width="7.2" height="4.8" fill="#3a3050" opacity="0.93" transform="rotate(81 791.0 732.3)"/>
<rect x="1179.5" y="407.1" width="11.1" height="3.8" fill="#f0e0e8" opacity="0.76" transform="rotate(13 1179.5 407.1)"/>
<rect x="1040.1" y="402.3" width="9.8" height="3.5" fill="#2a2844" opacity="0.62" transform="rotate(138 1040.1 402.3)"/>
<rect x="1063.5" y="549.4" width="6.7" height="3.8" fill="#ffffff" opacity="0.92" transform="rotate(151 1063.5 549.4)"/>
<rect x="1119.5" y="304.0" width="8.0" height="4.7" fill="#a0d0c0" opacity="0.66" transform="rotate(128 1119.5 304.0)"/>
<rect x="1003.0" y="436.1" width="8.6" height="3.4" fill="#3a3050" opacity="0.91" transform="rotate(131 1003.0 436.1)"/>
<rect x="993.0" y="599.2" width="6.9" height="4.3" fill="#d8e0f0" opacity="0.80" transform="rotate(135 993.0 599.2)"/>
<rect x="740.3" y="667.8" width="10.2" height="4.4" fill="#f8f0e0" opacity="0.71" transform="rotate(110 740.3 667.8)"/>
<rect x="1030.9" y="386.9" width="11.4" height="3.6" fill="#f8f0e0" opacity="0.83" transform="rotate(64 1030.9 386.9)"/>
<rect x="1414.2" y="247.1" width="9.8" height="3.3" fill="#e0a0a0" opacity="0.62" transform="rotate(49 1414.2 247.1)"/>
<rect x="1194.2" y="448.6" width="6.2" height="4.1" fill="#d8e0f0" opacity="0.79" transform="rotate(84 1194.2 448.6)"/>
<rect x="828.4" y="251.6" width="7.3" height="4.6" fill="#2a2844" opacity="0.94" transform="rotate(37 828.4 251.6)"/>
<rect x="819.4" y="408.2" width="10.7" height="3.1" fill="#f8f0e0" opacity="0.77" transform="rotate(90 819.4 408.2)"/>
<rect x="1176.8" y="68.0" width="8.3" height="4.9" fill="#f4ecf0" opacity="0.87" transform="rotate(73 1176.8 68.0)"/>
<rect x="928.6" y="611.2" width="8.0" height="5.0" fill="#e8d0d8" opacity="0.79" transform="rotate(12 928.6 611.2)"/>
<rect x="1260.8" y="469.4" width="9.7" height="3.2" fill="#f8f0e0" opacity="0.90" transform="rotate(29 1260.8 469.4)"/>
<rect x="958.5" y="333.3" width="10.2" height="3.4" fill="#d8e0f0" opacity="0.82" transform="rotate(47 958.5 333.3)"/>
<rect x="1335.7" y="546.8" width="7.2" height="3.0" fill="#3a3050" opacity="0.89" transform="rotate(155 1335.7 546.8)"/>
<rect x="792.0" y="408.7" width="9.8" height="4.1" fill="#f8f0e0" opacity="0.74" transform="rotate(56 792.0 408.7)"/>
<rect x="1027.6" y="611.4" width="6.6" height="3.2" fill="#e0a0a0" opacity="0.91" transform="rotate(27 1027.6 611.4)"/>
<rect x="881.5" y="256.6" width="11.4" height="5.0" fill="#d8e0f0" opacity="0.81" transform="rotate(152 881.5 256.6)"/>
<rect x="994.1" y="386.0" width="7.5" height="3.0" fill="#a0d0c0" opacity="0.88" transform="rotate(163 994.1 386.0)"/>
<rect x="1142.1" y="639.4" width="6.1" height="3.4" fill="#f4ecf0" opacity="0.75" transform="rotate(105 1142.1 639.4)"/>
<rect x="740.4" y="425.3" width="10.6" height="4.8" fill="#ffffff" opacity="0.68" transform="rotate(1 740.4 425.3)"/>
<rect x="898.3" y="449.3" width="7.2" height="3.9" fill="#e0a0a0" opacity="0.85" transform="rotate(105 898.3 449.3)"/>
<rect x="1063.8" y="578.9" width="10.3" height="4.7" fill="#ffffff" opacity="0.86" transform="rotate(30 1063.8 578.9)"/>
<rect x="926.7" y="669.3" width="6.7" height="4.0" fill="#ffffff" opacity="0.88" transform="rotate(68 926.7 669.3)"/>
<rect x="979.7" y="561.3" width="7.5" height="4.8" fill="#e0a0a0" opacity="0.60" transform="rotate(36 979.7 561.3)"/>
<rect x="807.0" y="37.0" width="11.6" height="3.4" fill="#3a3050" opacity="0.97" transform="rotate(120 807.0 37.0)"/>
<rect x="1015.9" y="73.4" width="9.2" height="4.2" fill="#f0e0e8" opacity="0.80" transform="rotate(58 1015.9 73.4)"/>
<rect x="468.7" y="696.4" width="11.1" height="4.1" fill="#2a2844" opacity="0.80" transform="rotate(147 468.7 696.4)"/>
<rect x="625.8" y="425.5" width="7.1" height="4.0" fill="#3a3050" opacity="0.68" transform="rotate(150 625.8 425.5)"/>
<rect x="1084.3" y="559.0" width="11.9" height="4.2" fill="#3a3050" opacity="0.81" transform="rotate(15 1084.3 559.0)"/>
<rect x="989.3" y="455.1" width="8.7" height="3.8" fill="#f8f0e0" opacity="0.86" transform="rotate(109 989.3 455.1)"/>
<rect x="1391.7" y="544.7" width="10.1" height="4.7" fill="#e8d0d8" opacity="0.95" transform="rotate(77 1391.7 544.7)"/>
<rect x="737.1" y="470.2" width="7.5" height="3.3" fill="#f4ecf0" opacity="0.94" transform="rotate(141 737.1 470.2)"/>
<rect x="1084.6" y="497.1" width="10.6" height="4.7" fill="#d8e0f0" opacity="0.90" transform="rotate(178 1084.6 497.1)"/>
<rect x="998.5" y="408.8" width="9.3" height="3.7" fill="#ffffff" opacity="0.60" transform="rotate(146 998.5 408.8)"/>
<rect x="946.6" y="676.3" width="9.2" height="3.2" fill="#3a3050" opacity="0.73" transform="rotate(148 946.6 676.3)"/>
<rect x="1062.9" y="160.7" width="10.0" height="3.5" fill="#a0d0c0" opacity="0.97" transform="rotate(165 1062.9 160.7)"/>
<rect x="1019.5" y="197.7" width="11.9" height="3.4" fill="#d8e0f0" opacity="0.87" transform="rotate(78 1019.5 197.7)"/>
<rect x="962.0" y="572.4" width="7.5" height="3.1" fill="#d8e0f0" opacity="0.68" transform="rotate(124 962.0 572.4)"/>
<rect x="716.1" y="562.8" width="6.4" height="3.1" fill="#f8f0e0" opacity="0.63" transform="rotate(70 716.1 562.8)"/>
<rect x="737.9" y="407.1" width="6.4" height="4.1" fill="#a0d0c0" opacity="0.86" transform="rotate(130 737.9 407.1)"/>
<rect x="908.6" y="584.8" width="6.6" height="3.6" fill="#e0a0a0" opacity="0.88" transform="rotate(73 908.6 584.8)"/>
<rect x="1163.8" y="245.2" width="8.3" height="4.6" fill="#ffffff" opacity="0.68" transform="rotate(19 1163.8 245.2)"/>
<rect x="772.4" y="509.7" width="6.1" height="3.4" fill="#3a3050" opacity="0.66" transform="rotate(162 772.4 509.7)"/>
<rect x="871.1" y="199.9" width="8.9" height="4.7" fill="#f8f0e0" opacity="0.70" transform="rotate(10 871.1 199.9)"/>
<rect x="801.3" y="432.9" width="6.4" height="3.0" fill="#ffffff" opacity="0.65" transform="rotate(153 801.3 432.9)"/>
<rect x="864.7" y="188.7" width="7.7" height="3.8" fill="#ffffff" opacity="0.69" transform="rotate(137 864.7 188.7)"/>
<rect x="967.5" y="673.8" width="11.1" height="3.5" fill="#f4ecf0" opacity="0.71" transform="rotate(160 967.5 673.8)"/>
<rect x="1335.6" y="635.7" width="6.2" height="3.9" fill="#e0a0a0" opacity="0.78" transform="rotate(20 1335.6 635.7)"/>
<rect x="1100.3" y="71.2" width="8.9" height="3.3" fill="#f8f0e0" opacity="0.78" transform="rotate(41 1100.3 71.2)"/>
<rect x="1056.5" y="337.4" width="8.0" height="3.1" fill="#ffffff" opacity="0.79" transform="rotate(91 1056.5 337.4)"/>
<rect x="869.6" y="398.9" width="7.0" height="4.7" fill="#d8e0f0" opacity="0.63" transform="rotate(38 869.6 398.9)"/>
<rect x="907.8" y="213.3" width="6.4" height="4.4" fill="#a0d0c0" opacity="0.70" transform="rotate(85 907.8 213.3)"/>
<rect x="929.6" y="357.4" width="9.2" height="3.5" fill="#3a3050" opacity="0.84" transform="rotate(89 929.6 357.4)"/>
<rect x="979.9" y="277.0" width="11.3" height="3.6" fill="#3a3050" opacity="0.94" transform="rotate(7 979.9 277.0)"/>
<rect x="894.1" y="685.2" width="7.3" height="3.1" fill="#ffffff" opacity="0.66" transform="rotate(79 894.1 685.2)"/>
<rect x="912.2" y="151.5" width="6.2" height="3.3" fill="#f8f0e0" opacity="0.79" transform="rotate(64 912.2 151.5)"/>
<rect x="1189.5" y="362.6" width="11.7" height="4.0" fill="#ffffff" opacity="0.85" transform="rotate(178 1189.5 362.6)"/>
<rect x="1084.8" y="235.5" width="7.6" height="4.9" fill="#e8d0d8" opacity="0.61" transform="rotate(136 1084.8 235.5)"/>
<rect x="971.4" y="427.0" width="6.8" height="3.5" fill="#e8d0d8" opacity="0.98" transform="rotate(21 971.4 427.0)"/>
<rect x="1130.3" y="572.5" width="8.5" height="3.2" fill="#d8e0f0" opacity="0.92" transform="rotate(147 1130.3 572.5)"/>
<rect x="1150.3" y="675.2" width="11.2" height="4.9" fill="#f0e0e8" opacity="0.98" transform="rotate(48 1150.3 675.2)"/>
<rect x="1135.1" y="687.0" width="10.5" height="3.4" fill="#f0e0e8" opacity="0.63" transform="rotate(24 1135.1 687.0)"/>
<rect x="1248.8" y="496.6" width="6.7" height="3.5" fill="#ffffff" opacity="0.83" transform="rotate(118 1248.8 496.6)"/>
<rect x="1020.0" y="682.1" width="7.1" height="4.4" fill="#ffffff" opacity="0.69" transform="rotate(46 1020.0 682.1)"/>
<rect x="1078.0" y="726.8" width="10.9" height="4.4" fill="#ffffff" opacity="0.87" transform="rotate(10 1078.0 726.8)"/>
<rect x="890.4" y="728.5" width="7.4" height="3.9" fill="#f0e0e8" opacity="0.68" transform="rotate(172 890.4 728.5)"/>
<rect x="858.9" y="304.8" width="10.5" height="3.7" fill="#e0a0a0" opacity="0.75" transform="rotate(127 858.9 304.8)"/>
<rect x="998.8" y="169.2" width="7.6" height="3.1" fill="#f0e0e8" opacity="0.76" transform="rotate(24 998.8 169.2)"/>
<rect x="855.1" y="491.2" width="8.7" height="3.7" fill="#f0e0e8" opacity="0.74" transform="rotate(97 855.1 491.2)"/>
<rect x="805.0" y="526.8" width="10.7" height="3.8" fill="#d8e0f0" opacity="0.85" transform="rotate(21 805.0 526.8)"/>
<rect x="725.9" y="734.4" width="10.6" height="3.6" fill="#2a2844" opacity="0.93" transform="rotate(46 725.9 734.4)"/>
<rect x="993.0" y="681.8" width="8.5" height="4.1" fill="#e8d0d8" opacity="0.92" transform="rotate(5 993.0 681.8)"/>
<rect x="909.0" y="65.2" width="7.0" height="3.3" fill="#ffffff" opacity="0.91" transform="rotate(162 909.0 65.2)"/>
<rect x="999.9" y="112.9" width="9.1" height="3.6" fill="#d8e0f0" opacity="0.79" transform="rotate(75 999.9 112.9)"/>
<rect x="699.8" y="200.6" width="6.4" height="3.1" fill="#ffffff" opacity="0.65" transform="rotate(175 699.8 200.6)"/>
<rect x="1202.0" y="425.9" width="6.9" height="4.4" fill="#ffffff" opacity="0.89" transform="rotate(69 1202.0 425.9)"/>
<rect x="1000.9" y="343.6" width="10.9" height="4.2" fill="#f0e0e8" opacity="0.79" transform="rotate(148 1000.9 343.6)"/>
<rect x="1090.7" y="442.7" width="9.8" height="3.5" fill="#a0d0c0" opacity="0.77" transform="rotate(46 1090.7 442.7)"/>
<rect x="1109.9" y="252.2" width="7.4" height="3.0" fill="#e0a0a0" opacity="0.68" transform="rotate(92 1109.9 252.2)"/>
<rect x="629.5" y="503.5" width="6.9" height="3.5" fill="#3a3050" opacity="0.93" transform="rotate(138 629.5 503.5)"/>
<rect x="870.9" y="548.1" width="9.7" height="3.2" fill="#e8d0d8" opacity="0.81" transform="rotate(8 870.9 548.1)"/>
<rect x="1144.4" y="186.3" width="7.9" height="4.6" fill="#3a3050" opacity="0.95" transform="rotate(129 1144.4 186.3)"/>
<rect x="1299.2" y="544.4" width="10.7" height="3.2" fill="#e0a0a0" opacity="0.75" transform="rotate(12 1299.2 544.4)"/>
<rect x="1176.7" y="550.8" width="6.3" height="4.5" fill="#e8d0d8" opacity="0.97" transform="rotate(15 1176.7 550.8)"/>
<rect x="841.1" y="585.8" width="6.5" height="3.8" fill="#f4ecf0" opacity="0.99" transform="rotate(16 841.1 585.8)"/>
<rect x="1094.1" y="532.1" width="10.9" height="4.2" fill="#f0e0e8" opacity="0.70" transform="rotate(73 1094.1 532.1)"/>
<rect x="1009.7" y="256.9" width="7.5" height="4.9" fill="#f0e0e8" opacity="0.70" transform="rotate(21 1009.7 256.9)"/>
<rect x="821.2" y="353.6" width="10.4" height="3.3" fill="#f8f0e0" opacity="0.98" transform="rotate(34 821.2 353.6)"/>
<rect x="859.5" y="659.2" width="10.8" height="3.1" fill="#e8d0d8" opacity="0.93" transform="rotate(92 859.5 659.2)"/>
<rect x="933.6" y="645.0" width="10.0" height="3.1" fill="#ffffff" opacity="0.69" transform="rotate(0 933.6 645.0)"/>
<rect x="1012.8" y="723.5" width="11.1" height="4.6" fill="#ffffff" opacity="0.75" transform="rotate(47 1012.8 723.5)"/>
<rect x="1001.9" y="430.9" width="10.9" height="4.3" fill="#e8d0d8" opacity="0.96" transform="rotate(9 1001.9 430.9)"/>
<rect x="977.6" y="289.3" width="6.8" height="4.1" fill="#ffffff" opacity="0.93" transform="rotate(60 977.6 289.3)"/>
<rect x="1350.1" y="680.9" width="7.9" height="4.5" fill="#3a3050" opacity="0.98" transform="rotate(154 1350.1 680.9)"/>
<rect x="1036.8" y="554.4" width="6.4" height="3.2" fill="#f4ecf0" opacity="0.96" transform="rotate(159 1036.8 554.4)"/>
<rect x="617.7" y="725.1" width="9.8" height="4.8" fill="#d8e0f0" opacity="0.96" transform="rotate(84 617.7 725.1)"/>
<rect x="1245.4" y="561.7" width="11.5" height="4.2" fill="#f8f0e0" opacity="0.96" transform="rotate(179 1245.4 561.7)"/>
<rect x="726.8" y="669.2" width="7.2" height="3.7" fill="#f8f0e0" opacity="0.98" transform="rotate(65 726.8 669.2)"/>
<rect x="1011.0" y="497.6" width="8.8" height="4.1" fill="#f8f0e0" opacity="0.65" transform="rotate(4 1011.0 497.6)"/>
<rect x="1068.8" y="391.5" width="6.6" height="4.6" fill="#ffffff" opacity="0.62" transform="rotate(108 1068.8 391.5)"/>
<rect x="1084.3" y="153.3" width="8.0" height="4.5" fill="#a0d0c0" opacity="0.82" transform="rotate(33 1084.3 153.3)"/>
<rect x="1019.4" y="632.1" width="7.0" height="3.0" fill="#f8f0e0" opacity="0.95" transform="rotate(116 1019.4 632.1)"/>
<rect x="1145.5" y="702.2" width="6.1" height="4.0" fill="#ffffff" opacity="0.96" transform="rotate(161 1145.5 702.2)"/>
<rect x="855.5" y="479.6" width="8.5" height="4.2" fill="#f0e0e8" opacity="0.71" transform="rotate(46 855.5 479.6)"/>
<rect x="808.6" y="624.7" width="7.0" height="4.7" fill="#f8f0e0" opacity="0.89" transform="rotate(175 808.6 624.7)"/>
<rect x="941.4" y="569.4" width="10.3" height="3.5" fill="#f4ecf0" opacity="0.97" transform="rotate(150 941.4 569.4)"/>
<rect x="970.3" y="660.6" width="11.4" height="4.1" fill="#e8d0d8" opacity="0.73" transform="rotate(74 970.3 660.6)"/>
<rect x="986.1" y="485.4" width="8.0" height="4.5" fill="#e8d0d8" opacity="0.68" transform="rotate(44 986.1 485.4)"/>
<rect x="1144.9" y="331.3" width="9.8" height="3.9" fill="#f8f0e0" opacity="0.84" transform="rotate(25 1144.9 331.3)"/>
<rect x="813.1" y="383.5" width="8.9" height="3.9" fill="#d8e0f0" opacity="0.79" transform="rotate(175 813.1 383.5)"/>
<rect x="821.6" y="449.9" width="7.0" height="3.1" fill="#f0e0e8" opacity="0.99" transform="rotate(126 821.6 449.9)"/>
<rect x="785.0" y="638.6" width="8.8" height="4.7" fill="#e0a0a0" opacity="0.62" transform="rotate(98 785.0 638.6)"/>
<rect x="1207.2" y="328.7" width="9.3" height="4.3" fill="#e8d0d8" opacity="0.98" transform="rotate(132 1207.2 328.7)"/>
<rect x="863.3" y="476.2" width="8.4" height="3.7" fill="#e8d0d8" opacity="0.69" transform="rotate(102 863.3 476.2)"/>
<rect x="743.4" y="138.6" width="11.4" height="4.6" fill="#e0a0a0" opacity="0.73" transform="rotate(4 743.4 138.6)"/>
<rect x="907.5" y="335.0" width="9.1" height="3.0" fill="#ffffff" opacity="0.92" transform="rotate(98 907.5 335.0)"/>
<rect x="802.4" y="252.8" width="9.7" height="4.6" fill="#f0e0e8" opacity="0.75" transform="rotate(46 802.4 252.8)"/>
<rect x="958.1" y="677.4" width="9.0" height="4.9" fill="#ffffff" opacity="0.63" transform="rotate(67 958.1 677.4)"/>
<rect x="1093.5" y="43.8" width="10.4" height="4.4" fill="#a0d0c0" opacity="0.98" transform="rotate(163 1093.5 43.8)"/>
<rect x="1005.3" y="636.5" width="9.0" height="4.5" fill="#e8d0d8" opacity="0.85" transform="rotate(76 1005.3 636.5)"/>
<rect x="1067.4" y="94.4" width="10.2" height="4.3" fill="#e8d0d8" opacity="0.66" transform="rotate(20 1067.4 94.4)"/>
<rect x="1005.1" y="150.1" width="11.6" height="3.4" fill="#ffffff" opacity="0.94" transform="rotate(21 1005.1 150.1)"/>
<rect x="1106.0" y="756.1" width="7.1" height="3.4" fill="#3a3050" opacity="0.74" transform="rotate(27 1106.0 756.1)"/>
<rect x="1271.5" y="517.3" width="8.6" height="4.6" fill="#f4ecf0" opacity="0.78" transform="rotate(103 1271.5 517.3)"/>
<rect x="1096.2" y="456.8" width="8.4" height="4.9" fill="#a0d0c0" opacity="0.97" transform="rotate(154 1096.2 456.8)"/>
<rect x="693.6" y="523.2" width="9.9" height="4.0" fill="#f4ecf0" opacity="0.88" transform="rotate(166 693.6 523.2)"/>
<rect x="954.6" y="641.8" width="10.2" height="3.4" fill="#ffffff" opacity="0.87" transform="rotate(68 954.6 641.8)"/>
<rect x="829.7" y="467.5" width="8.3" height="3.5" fill="#2a2844" opacity="0.92" transform="rotate(162 829.7 467.5)"/>
<rect x="1316.3" y="522.9" width="10.5" height="3.5" fill="#a0d0c0" opacity="0.66" transform="rotate(109 1316.3 522.9)"/>
<rect x="1543.9" y="575.3" width="10.6" height="4.1" fill="#f0e0e8" opacity="0.83" transform="rotate(163 1543.9 575.3)"/>
<rect x="978.5" y="447.6" width="8.3" height="4.8" fill="#d8e0f0" opacity="0.77" transform="rotate(109 978.5 447.6)"/>
<rect x="939.4" y="634.1" width="6.4" height="3.5" fill="#a0d0c0" opacity="0.68" transform="rotate(140 939.4 634.1)"/>
<rect x="487.1" y="359.3" width="10.5" height="3.3" fill="#a0d0c0" opacity="0.62" transform="rotate(122 487.1 359.3)"/>
<rect x="694.1" y="652.0" width="9.0" height="3.9" fill="#f4ecf0" opacity="0.63" transform="rotate(4 694.1 652.0)"/>
<rect x="1057.9" y="221.2" width="9.7" height="4.9" fill="#3a3050" opacity="0.90" transform="rotate(116 1057.9 221.2)"/>
<rect x="907.8" y="706.7" width="10.7" height="3.5" fill="#2a2844" opacity="0.69" transform="rotate(164 907.8 706.7)"/>
<rect x="1026.0" y="496.0" width="9.2" height="3.4" fill="#f8f0e0" opacity="0.81" transform="rotate(46 1026.0 496.0)"/>
<rect x="744.8" y="127.5" width="8.8" height="4.0" fill="#a0d0c0" opacity="0.75" transform="rotate(48 744.8 127.5)"/>
<rect x="781.2" y="251.0" width="7.1" height="4.5" fill="#d8e0f0" opacity="0.78" transform="rotate(57 781.2 251.0)"/>
<rect x="986.7" y="346.0" width="10.7" height="4.9" fill="#3a3050" opacity="0.79" transform="rotate(125 986.7 346.0)"/>
<rect x="1187.9" y="505.3" width="7.1" height="3.4" fill="#2a2844" opacity="0.88" transform="rotate(52 1187.9 505.3)"/>
<rect x="985.9" y="237.9" width="6.1" height="3.8" fill="#e8d0d8" opacity="0.84" transform="rotate(162 985.9 237.9)"/>
<rect x="928.6" y="391.8" width="11.8" height="3.8" fill="#f0e0e8" opacity="0.63" transform="rotate(125 928.6 391.8)"/>
<rect x="966.9" y="276.8" width="11.7" height="5.0" fill="#3a3050" opacity="0.85" transform="rotate(178 966.9 276.8)"/>
<rect x="1125.3" y="292.8" width="8.2" height="3.3" fill="#a0d0c0" opacity="0.75" transform="rotate(165 1125.3 292.8)"/>
<rect x="1099.0" y="608.7" width="9.0" height="4.1" fill="#a0d0c0" opacity="0.77" transform="rotate(100 1099.0 608.7)"/>
<rect x="985.1" y="179.5" width="11.6" height="3.0" fill="#f8f0e0" opacity="0.74" transform="rotate(161 985.1 179.5)"/>
<rect x="1107.1" y="754.4" width="11.9" height="3.5" fill="#ffffff" opacity="0.97" transform="rotate(6 1107.1 754.4)"/>
<rect x="1078.8" y="252.0" width="9.9" height="3.8" fill="#e0a0a0" opacity="0.80" transform="rotate(55 1078.8 252.0)"/>
<rect x="1028.8" y="185.7" width="7.8" height="3.6" fill="#f0e0e8" opacity="0.88" transform="rotate(163 1028.8 185.7)"/>
<rect x="840.4" y="558.5" width="10.9" height="4.6" fill="#f4ecf0" opacity="0.62" transform="rotate(51 840.4 558.5)"/>
<rect x="1314.4" y="544.7" width="7.0" height="4.3" fill="#f8f0e0" opacity="0.86" transform="rotate(77 1314.4 544.7)"/>
<rect x="1232.2" y="182.5" width="10.2" height="4.3" fill="#a0d0c0" opacity="0.76" transform="rotate(18 1232.2 182.5)"/>
<rect x="679.4" y="254.6" width="10.0" height="3.4" fill="#f0e0e8" opacity="0.88" transform="rotate(72 679.4 254.6)"/>
<rect x="1058.7" y="145.8" width="9.8" height="3.8" fill="#f8f0e0" opacity="0.70" transform="rotate(122 1058.7 145.8)"/>
<rect x="1028.5" y="509.1" width="10.9" height="3.6" fill="#e0a0a0" opacity="0.93" transform="rotate(168 1028.5 509.1)"/>
<rect x="1050.1" y="332.4" width="6.2" height="3.4" fill="#f8f0e0" opacity="0.89" transform="rotate(177 1050.1 332.4)"/>
<rect x="1051.7" y="85.8" width="6.3" height="4.2" fill="#ffffff" opacity="0.74" transform="rotate(130 1051.7 85.8)"/>
<rect x="1244.4" y="136.5" width="9.3" height="3.9" fill="#3a3050" opacity="0.96" transform="rotate(42 1244.4 136.5)"/>
<rect x="699.0" y="510.3" width="6.3" height="3.7" fill="#ffffff" opacity="1.00" transform="rotate(157 699.0 510.3)"/>
<rect x="1089.4" y="405.2" width="7.2" height="4.5" fill="#a0d0c0" opacity="0.74" transform="rotate(22 1089.4 405.2)"/>
<rect x="518.5" y="446.9" width="7.7" height="4.0" fill="#3a3050" opacity="0.77" transform="rotate(90 518.5 446.9)"/>
<rect x="924.0" y="222.8" width="9.8" height="3.9" fill="#a0d0c0" opacity="0.79" transform="rotate(67 924.0 222.8)"/>
<rect x="942.0" y="412.3" width="7.8" height="4.7" fill="#ffffff" opacity="0.70" transform="rotate(5 942.0 412.3)"/>
<rect x="964.5" y="343.5" width="7.8" height="3.7" fill="#ffffff" opacity="0.89" transform="rotate(135 964.5 343.5)"/>
<rect x="845.1" y="332.5" width="11.3" height="4.7" fill="#ffffff" opacity="0.92" transform="rotate(54 845.1 332.5)"/>
<rect x="1200.2" y="256.1" width="10.8" height="4.5" fill="#d8e0f0" opacity="0.75" transform="rotate(87 1200.2 256.1)"/>
<rect x="1044.1" y="99.7" width="8.5" height="4.9" fill="#e8d0d8" opacity="0.66" transform="rotate(51 1044.1 99.7)"/>
<rect x="939.9" y="740.4" width="6.9" height="3.6" fill="#ffffff" opacity="0.94" transform="rotate(165 939.9 740.4)"/>
<rect x="863.7" y="206.4" width="12.0" height="5.0" fill="#e8d0d8" opacity="0.76" transform="rotate(177 863.7 206.4)"/>
<rect x="978.0" y="288.3" width="8.2" height="4.5" fill="#2a2844" opacity="0.87" transform="rotate(59 978.0 288.3)"/>
<rect x="949.5" y="440.4" width="7.4" height="3.2" fill="#ffffff" opacity="0.94" transform="rotate(127 949.5 440.4)"/>
<rect x="885.4" y="489.7" width="9.1" height="3.2" fill="#f0e0e8" opacity="0.72" transform="rotate(38 885.4 489.7)"/>
<rect x="1022.9" y="173.5" width="8.4" height="4.3" fill="#ffffff" opacity="0.73" transform="rotate(76 1022.9 173.5)"/>
<rect x="962.6" y="286.7" width="10.8" height="4.6" fill="#e0a0a0" opacity="0.91" transform="rotate(48 962.6 286.7)"/>
<rect x="944.4" y="504.2" width="9.6" height="3.4" fill="#f0e0e8" opacity="0.79" transform="rotate(107 944.4 504.2)"/>
<rect x="929.3" y="667.3" width="11.2" height="4.4" fill="#e8d0d8" opacity="0.96" transform="rotate(12 929.3 667.3)"/>
<rect x="804.1" y="385.9" width="10.2" height="4.0" fill="#a0d0c0" opacity="0.67" transform="rotate(176 804.1 385.9)"/>
<rect x="1180.2" y="401.2" width="7.7" height="4.1" fill="#ffffff" opacity="0.76" transform="rotate(39 1180.2 401.2)"/>
<rect x="793.7" y="469.8" width="11.1" height="3.7" fill="#e8d0d8" opacity="0.86" transform="rotate(177 793.7 469.8)"/>
<rect x="756.6" y="257.4" width="11.7" height="3.7" fill="#3a3050" opacity="0.66" transform="rotate(72 756.6 257.4)"/>
<rect x="1019.4" y="286.3" width="7.9" height="3.8" fill="#ffffff" opacity="0.82" transform="rotate(7 1019.4 286.3)"/>
<rect x="905.5" y="411.6" width="7.0" height="3.4" fill="#2a2844" opacity="0.80" transform="rotate(146 905.5 411.6)"/>
<rect x="1031.9" y="660.9" width="9.2" height="4.4" fill="#d8e0f0" opacity="0.64" transform="rotate(131 1031.9 660.9)"/>
<rect x="1141.0" y="572.4" width="8.7" height="4.9" fill="#f8f0e0" opacity="0.86" transform="rotate(147 1141.0 572.4)"/>
<rect x="664.9" y="389.3" width="10.8" height="3.1" fill="#f4ecf0" opacity="0.98" transform="rotate(163 664.9 389.3)"/>
<rect x="1158.2" y="655.4" width="11.4" height="3.7" fill="#f8f0e0" opacity="0.73" transform="rotate(4 1158.2 655.4)"/>
<rect x="1029.9" y="546.8" width="10.2" height="4.3" fill="#f8f0e0" opacity="0.89" transform="rotate(54 1029.9 546.8)"/>
<rect x="956.3" y="661.3" width="8.6" height="4.6" fill="#f4ecf0" opacity="0.97" transform="rotate(50 956.3 661.3)"/>
<rect x="806.4" y="419.6" width="11.2" height="3.3" fill="#e0a0a0" opacity="0.79" transform="rotate(125 806.4 419.6)"/>
<rect x="1128.0" y="34.7" width="8.6" height="4.6" fill="#e0a0a0" opacity="0.74" transform="rotate(83 1128.0 34.7)"/>
<rect x="969.4" y="271.3" width="8.1" height="4.5" fill="#a0d0c0" opacity="0.76" transform="rotate(118 969.4 271.3)"/>
<rect x="987.6" y="684.6" width="8.1" height="3.2" fill="#ffffff" opacity="0.84" transform="rotate(50 987.6 684.6)"/>
<rect x="1132.6" y="602.8" width="9.3" height="4.1" fill="#e8d0d8" opacity="0.88" transform="rotate(161 1132.6 602.8)"/>
<rect x="1070.3" y="619.5" width="10.0" height="4.9" fill="#f0e0e8" opacity="0.64" transform="rotate(34 1070.3 619.5)"/>
<rect x="836.5" y="329.8" width="6.6" height="4.4" fill="#2a2844" opacity="0.66" transform="rotate(151 836.5 329.8)"/>
<rect x="1312.4" y="408.7" width="9.0" height="4.7" fill="#ffffff" opacity="0.97" transform="rotate(3 1312.4 408.7)"/>
<rect x="492.0" y="491.0" width="8.6" height="4.7" fill="#2a2844" opacity="0.85" transform="rotate(177 492.0 491.0)"/>
<rect x="841.2" y="364.8" width="9.9" height="4.4" fill="#f8f0e0" opacity="0.82" transform="rotate(27 841.2 364.8)"/>
<rect x="1117.7" y="156.4" width="11.0" height="3.5" fill="#e0a0a0" opacity="0.60" transform="rotate(32 1117.7 156.4)"/>
<rect x="885.5" y="169.6" width="11.3" height="3.8" fill="#f8f0e0" opacity="0.95" transform="rotate(135 885.5 169.6)"/>
<rect x="927.9" y="529.8" width="12.0" height="3.4" fill="#f0e0e8" opacity="0.90" transform="rotate(6 927.9 529.8)"/>
<rect x="1090.1" y="495.0" width="7.3" height="3.8" fill="#e0a0a0" opacity="0.92" transform="rotate(111 1090.1 495.0)"/>
<rect x="837.8" y="403.4" width="7.6" height="4.7" fill="#ffffff" opacity="0.93" transform="rotate(163 837.8 403.4)"/>
<rect x="688.0" y="502.3" width="8.8" height="4.1" fill="#f8f0e0" opacity="0.82" transform="rotate(44 688.0 502.3)"/>
<rect x="660.2" y="357.2" width="7.8" height="4.4" fill="#3a3050" opacity="0.68" transform="rotate(131 660.2 357.2)"/>
<rect x="630.1" y="298.7" width="7.8" height="3.8" fill="#ffffff" opacity="0.81" transform="rotate(129 630.1 298.7)"/>
<rect x="917.1" y="509.5" width="10.7" height="3.6" fill="#f8f0e0" opacity="0.92" transform="rotate(98 917.1 509.5)"/>
<rect x="979.1" y="535.7" width="9.8" height="4.5" fill="#e0a0a0" opacity="0.65" transform="rotate(161 979.1 535.7)"/>
<rect x="782.6" y="291.2" width="7.4" height="4.9" fill="#f0e0e8" opacity="0.86" transform="rotate(57 782.6 291.2)"/>
<rect x="991.7" y="83.2" width="8.7" height="4.7" fill="#2a2844" opacity="0.78" transform="rotate(36 991.7 83.2)"/>
<rect x="783.0" y="209.9" width="9.1" height="3.9" fill="#ffffff" opacity="0.96" transform="rotate(168 783.0 209.9)"/>
<rect x="1017.0" y="504.2" width="11.5" height="3.9" fill="#f8f0e0" opacity="0.64" transform="rotate(137 1017.0 504.2)"/>
<rect x="1034.7" y="382.9" width="10.9" height="4.1" fill="#d8e0f0" opacity="0.63" transform="rotate(108 1034.7 382.9)"/>
<rect x="1016.0" y="624.1" width="7.5" height="3.5" fill="#f8f0e0" opacity="0.62" transform="rotate(151 1016.0 624.1)"/>
<rect x="632.9" y="232.0" width="6.7" height="3.9" fill="#d8e0f0" opacity="0.69" transform="rotate(102 632.9 232.0)"/>
<rect x="887.2" y="515.0" width="9.4" height="3.0" fill="#a0d0c0" opacity="0.73" transform="rotate(82 887.2 515.0)"/>
<rect x="1339.2" y="376.8" width="6.7" height="4.0" fill="#ffffff" opacity="0.89" transform="rotate(90 1339.2 376.8)"/>
<rect x="993.9" y="389.9" width="9.6" height="3.5" fill="#2a2844" opacity="0.79" transform="rotate(78 993.9 389.9)"/>
<rect x="1538.4" y="609.2" width="9.3" height="3.3" fill="#d8e0f0" opacity="0.61" transform="rotate(145 1538.4 609.2)"/>
<rect x="1086.5" y="196.9" width="7.2" height="3.9" fill="#3a3050" opacity="0.64" transform="rotate(128 1086.5 196.9)"/>
<rect x="867.4" y="608.8" width="9.9" height="4.1" fill="#f0e0e8" opacity="0.96" transform="rotate(75 867.4 608.8)"/>
<rect x="1151.3" y="562.7" width="8.4" height="4.1" fill="#e8d0d8" opacity="0.68" transform="rotate(92 1151.3 562.7)"/>
<rect x="1407.9" y="754.3" width="11.0" height="3.5" fill="#e8d0d8" opacity="0.89" transform="rotate(133 1407.9 754.3)"/>
<rect x="890.1" y="633.4" width="7.6" height="4.6" fill="#ffffff" opacity="0.72" transform="rotate(85 890.1 633.4)"/>
<rect x="931.9" y="134.4" width="11.4" height="4.1" fill="#a0d0c0" opacity="0.95" transform="rotate(86 931.9 134.4)"/>
<rect x="921.0" y="300.1" width="8.6" height="3.8" fill="#f0e0e8" opacity="0.94" transform="rotate(2 921.0 300.1)"/>
<rect x="1171.6" y="597.6" width="11.7" height="3.8" fill="#e0a0a0" opacity="0.84" transform="rotate(43 1171.6 597.6)"/>
<rect x="902.4" y="383.1" width="7.7" height="4.9" fill="#f8f0e0" opacity="1.00" transform="rotate(67 902.4 383.1)"/>
<rect x="755.5" y="672.1" width="6.9" height="3.8" fill="#ffffff" opacity="0.79" transform="rotate(161 755.5 672.1)"/>
<rect x="744.7" y="303.4" width="10.2" height="4.1" fill="#2a2844" opacity="0.85" transform="rotate(140 744.7 303.4)"/>
<rect x="834.9" y="220.1" width="6.3" height="4.0" fill="#d8e0f0" opacity="0.62" transform="rotate(91 834.9 220.1)"/>
<rect x="1051.4" y="536.8" width="9.9" height="4.3" fill="#e0a0a0" opacity="0.91" transform="rotate(168 1051.4 536.8)"/>
<rect x="1072.6" y="523.4" width="6.7" height="4.5" fill="#ffffff" opacity="0.88" transform="rotate(121 1072.6 523.4)"/>
<rect x="1204.5" y="757.5" width="10.8" height="4.3" fill="#e8d0d8" opacity="0.99" transform="rotate(31 1204.5 757.5)"/>
<rect x="1016.0" y="564.9" width="6.5" height="3.5" fill="#f0e0e8" opacity="0.62" transform="rotate(24 1016.0 564.9)"/>
<rect x="1001.3" y="373.5" width="9.9" height="4.0" fill="#f0e0e8" opacity="0.84" transform="rotate(58 1001.3 373.5)"/>
<rect x="993.4" y="635.8" width="11.8" height="4.7" fill="#f4ecf0" opacity="0.83" transform="rotate(105 993.4 635.8)"/>
<rect x="894.7" y="379.8" width="6.6" height="3.2" fill="#f0e0e8" opacity="0.80" transform="rotate(118 894.7 379.8)"/>
<rect x="989.1" y="667.7" width="7.7" height="4.8" fill="#ffffff" opacity="0.96" transform="rotate(148 989.1 667.7)"/>
<rect x="908.6" y="267.0" width="6.6" height="4.3" fill="#d8e0f0" opacity="0.62" transform="rotate(108 908.6 267.0)"/>
<rect x="1035.5" y="736.2" width="8.9" height="4.3" fill="#3a3050" opacity="0.88" transform="rotate(96 1035.5 736.2)"/>
<rect x="1203.9" y="666.0" width="10.7" height="3.1" fill="#ffffff" opacity="0.92" transform="rotate(116 1203.9 666.0)"/>
<rect x="1004.2" y="556.9" width="10.5" height="4.4" fill="#2a2844" opacity="0.91" transform="rotate(176 1004.2 556.9)"/>
<rect x="811.5" y="610.6" width="9.4" height="4.5" fill="#d8e0f0" opacity="0.61" transform="rotate(168 811.5 610.6)"/>
<rect x="1136.6" y="605.0" width="6.7" height="4.7" fill="#3a3050" opacity="0.93" transform="rotate(0 1136.6 605.0)"/>
<rect x="1066.9" y="250.4" width="6.8" height="3.6" fill="#f8f0e0" opacity="0.83" transform="rotate(126 1066.9 250.4)"/>
<rect x="945.2" y="648.5" width="10.5" height="4.0" fill="#e8d0d8" opacity="0.65" transform="rotate(150 945.2 648.5)"/>
<rect x="817.5" y="627.8" width="10.6" height="4.5" fill="#ffffff" opacity="0.93" transform="rotate(114 817.5 627.8)"/>
<rect x="966.8" y="298.4" width="10.1" height="3.9" fill="#e8d0d8" opacity="0.84" transform="rotate(145 966.8 298.4)"/>
<rect x="1311.8" y="675.8" width="10.2" height="4.3" fill="#f4ecf0" opacity="0.91" transform="rotate(21 1311.8 675.8)"/>
<rect x="1357.3" y="232.8" width="7.7" height="4.5" fill="#e8d0d8" opacity="0.93" transform="rotate(84 1357.3 232.8)"/>
<rect x="881.7" y="305.5" width="7.2" height="4.9" fill="#f0e0e8" opacity="0.96" transform="rotate(1 881.7 305.5)"/>
<rect x="1023.9" y="63.4" width="10.0" height="4.7" fill="#f4ecf0" opacity="0.78" transform="rotate(73 1023.9 63.4)"/>
<rect x="851.4" y="446.7" width="8.1" height="3.9" fill="#f0e0e8" opacity="0.94" transform="rotate(65 851.4 446.7)"/>
<rect x="952.4" y="331.9" width="7.1" height="4.8" fill="#2a2844" opacity="0.72" transform="rotate(143 952.4 331.9)"/>
<rect x="677.7" y="655.5" width="7.6" height="3.2" fill="#e8d0d8" opacity="0.91" transform="rotate(90 677.7 655.5)"/>
<rect x="1085.6" y="388.5" width="6.0" height="4.8" fill="#ffffff" opacity="0.99" transform="rotate(150 1085.6 388.5)"/>
<rect x="893.6" y="483.8" width="11.5" height="4.3" fill="#d8e0f0" opacity="0.81" transform="rotate(55 893.6 483.8)"/>
<rect x="1075.1" y="246.6" width="7.7" height="4.7" fill="#2a2844" opacity="0.84" transform="rotate(139 1075.1 246.6)"/>
<rect x="1118.3" y="700.0" width="11.2" height="3.8" fill="#a0d0c0" opacity="0.61" transform="rotate(178 1118.3 700.0)"/>
<rect x="954.7" y="622.8" width="11.0" height="3.4" fill="#f0e0e8" opacity="0.79" transform="rotate(135 954.7 622.8)"/>
<rect x="932.8" y="518.6" width="9.8" height="5.0" fill="#ffffff" opacity="0.68" transform="rotate(55 932.8 518.6)"/>
<rect x="1318.3" y="277.8" width="6.4" height="4.0" fill="#f0e0e8" opacity="0.78" transform="rotate(104 1318.3 277.8)"/>
<rect x="865.4" y="502.5" width="9.8" height="3.5" fill="#f0e0e8" opacity="0.80" transform="rotate(112 865.4 502.5)"/>
<rect x="866.8" y="759.6" width="6.2" height="4.0" fill="#e8d0d8" opacity="0.86" transform="rotate(91 866.8 759.6)"/>
<rect x="1138.3" y="378.8" width="11.4" height="3.8" fill="#e8d0d8" opacity="0.89" transform="rotate(13 1138.3 378.8)"/>
<rect x="1067.6" y="507.3" width="8.3" height="4.8" fill="#f8f0e0" opacity="0.72" transform="rotate(147 1067.6 507.3)"/>
<rect x="1124.5" y="325.3" width="6.5" height="3.6" fill="#d8e0f0" opacity="0.76" transform="rotate(155 1124.5 325.3)"/>
<rect x="992.6" y="543.2" width="10.6" height="3.1" fill="#d8e0f0" opacity="0.75" transform="rotate(54 992.6 543.2)"/>
<rect x="851.0" y="404.7" width="6.6" height="3.7" fill="#f4ecf0" opacity="0.94" transform="rotate(41 851.0 404.7)"/>
<rect x="1007.9" y="282.6" width="9.4" height="3.4" fill="#a0d0c0" opacity="0.85" transform="rotate(37 1007.9 282.6)"/>
<rect x="1006.7" y="619.7" width="8.3" height="5.0" fill="#f4ecf0" opacity="0.95" transform="rotate(1 1006.7 619.7)"/>
<rect x="738.5" y="378.4" width="9.9" height="4.2" fill="#e0a0a0" opacity="0.99" transform="rotate(37 738.5 378.4)"/>
<rect x="721.3" y="586.1" width="8.8" height="3.0" fill="#e8d0d8" opacity="0.87" transform="rotate(46 721.3 586.1)"/>
<rect x="807.9" y="556.9" width="7.2" height="4.1" fill="#ffffff" opacity="0.89" transform="rotate(107 807.9 556.9)"/>
<rect x="780.4" y="750.8" width="6.1" height="3.6" fill="#e8d0d8" opacity="0.68" transform="rotate(164 780.4 750.8)"/>
<rect x="981.7" y="205.2" width="11.6" height="3.6" fill="#a0d0c0" opacity="0.88" transform="rotate(134 981.7 205.2)"/>
<rect x="912.3" y="592.4" width="7.6" height="3.7" fill="#d8e0f0" opacity="0.86" transform="rotate(131 912.3 592.4)"/>
<rect x="1030.6" y="88.7" width="6.7" height="3.4" fill="#e0a0a0" opacity="0.83" transform="rotate(45 1030.6 88.7)"/>
<rect x="986.8" y="32.3" width="9.7" height="3.5" fill="#e8d0d8" opacity="0.80" transform="rotate(32 986.8 32.3)"/>
<rect x="992.0" y="524.2" width="7.5" height="3.5" fill="#e8d0d8" opacity="0.81" transform="rotate(35 992.0 524.2)"/>
<rect x="811.6" y="505.6" width="9.8" height="3.9" fill="#ffffff" opacity="0.68" transform="rotate(176 811.6 505.6)"/>
<rect x="1089.9" y="401.5" width="10.8" height="3.2" fill="#e8d0d8" opacity="0.94" transform="rotate(112 1089.9 401.5)"/>
<rect x="1080.7" y="230.6" width="8.0" height="3.2" fill="#ffffff" opacity="0.91" transform="rotate(86 1080.7 230.6)"/>
<rect x="1101.5" y="645.1" width="10.5" height="4.2" fill="#f8f0e0" opacity="0.98" transform="rotate(17 1101.5 645.1)"/>
<rect x="836.7" y="59.4" width="9.2" height="3.6" fill="#e0a0a0" opacity="0.92" transform="rotate(112 836.7 59.4)"/>
<rect x="748.9" y="727.1" width="10.2" height="4.5" fill="#e0a0a0" opacity="0.61" transform="rotate(109 748.9 727.1)"/>
<rect x="673.6" y="619.2" width="6.2" height="4.8" fill="#e8d0d8" opacity="0.62" transform="rotate(48 673.6 619.2)"/>
<rect x="1111.6" y="350.6" width="11.2" height="3.5" fill="#3a3050" opacity="0.85" transform="rotate(5 1111.6 350.6)"/>
<rect x="976.6" y="528.5" width="8.9" height="3.3" fill="#e8d0d8" opacity="0.92" transform="rotate(92 976.6 528.5)"/>
<rect x="912.0" y="382.7" width="7.7" height="3.2" fill="#ffffff" opacity="0.97" transform="rotate(20 912.0 382.7)"/>
<rect x="761.8" y="751.6" width="6.1" height="3.7" fill="#f0e0e8" opacity="0.65" transform="rotate(56 761.8 751.6)"/>
<rect x="1031.1" y="362.9" width="9.9" height="4.8" fill="#3a3050" opacity="0.76" transform="rotate(37 1031.1 362.9)"/>
<rect x="1109.3" y="159.7" width="10.3" height="4.5" fill="#a0d0c0" opacity="0.91" transform="rotate(116 1109.3 159.7)"/>
<rect x="967.7" y="439.8" width="10.1" height="3.1" fill="#2a2844" opacity="0.60" transform="rotate(48 967.7 439.8)"/>
<rect x="999.0" y="98.0" width="8.5" height="3.9" fill="#f0e0e8" opacity="0.74" transform="rotate(100 999.0 98.0)"/>
<rect x="884.3" y="334.9" width="6.7" height="4.0" fill="#f4ecf0" opacity="0.65" transform="rotate(31 884.3 334.9)"/>
<rect x="1312.5" y="181.8" width="11.2" height="4.9" fill="#ffffff" opacity="0.79" transform="rotate(51 1312.5 181.8)"/>
<rect x="1366.7" y="337.7" width="7.1" height="4.6" fill="#ffffff" opacity="0.75" transform="rotate(142 1366.7 337.7)"/>
<rect x="924.8" y="110.3" width="10.4" height="3.1" fill="#e0a0a0" opacity="0.87" transform="rotate(145 924.8 110.3)"/>
<rect x="997.2" y="528.9" width="8.5" height="4.0" fill="#2a2844" opacity="1.00" transform="rotate(129 997.2 528.9)"/>
<rect x="853.4" y="174.0" width="9.4" height="3.6" fill="#e8d0d8" opacity="0.93" transform="rotate(79 853.4 174.0)"/>
<rect x="943.4" y="734.8" width="6.4" height="4.7" fill="#2a2844" opacity="0.70" transform="rotate(3 943.4 734.8)"/>
<rect x="1135.3" y="244.7" width="11.2" height="4.1" fill="#d8e0f0" opacity="0.99" transform="rotate(26 1135.3 244.7)"/>
<rect x="915.0" y="118.6" width="8.6" height="4.8" fill="#e8d0d8" opacity="0.68" transform="rotate(29 915.0 118.6)"/>
<rect x="1394.5" y="745.4" width="8.2" height="3.1" fill="#e8d0d8" opacity="0.86" transform="rotate(148 1394.5 745.4)"/>
<rect x="1287.2" y="518.3" width="7.6" height="3.3" fill="#e0a0a0" opacity="0.74" transform="rotate(159 1287.2 518.3)"/>
<rect x="942.6" y="389.8" width="6.8" height="4.3" fill="#d8e0f0" opacity="0.91" transform="rotate(177 942.6 389.8)"/>
<rect x="1378.7" y="329.2" width="7.6" height="3.4" fill="#ffffff" opacity="0.82" transform="rotate(148 1378.7 329.2)"/>
<rect x="990.9" y="454.7" width="10.9" height="4.6" fill="#f4ecf0" opacity="0.88" transform="rotate(121 990.9 454.7)"/>
<rect x="818.5" y="497.0" width="6.3" height="3.3" fill="#3a3050" opacity="0.81" transform="rotate(46 818.5 497.0)"/>
<rect x="1019.9" y="572.5" width="6.3" height="5.0" fill="#f8f0e0" opacity="0.94" transform="rotate(46 1019.9 572.5)"/>
<rect x="1066.2" y="420.3" width="10.5" height="4.9" fill="#3a3050" opacity="0.84" transform="rotate(153 1066.2 420.3)"/>
<rect x="844.4" y="591.9" width="8.3" height="4.1" fill="#d8e0f0" opacity="0.74" transform="rotate(117 844.4 591.9)"/>
<rect x="868.5" y="188.3" width="9.8" height="4.3" fill="#f8f0e0" opacity="0.67" transform="rotate(91 868.5 188.3)"/>
<rect x="926.0" y="279.5" width="6.8" height="4.9" fill="#e8d0d8" opacity="0.83" transform="rotate(75 926.0 279.5)"/>
<rect x="1010.3" y="594.3" width="7.8" height="4.7" fill="#3a3050" opacity="0.64" transform="rotate(124 1010.3 594.3)"/>
<rect x="1273.4" y="493.1" width="7.8" height="3.4" fill="#e8d0d8" opacity="0.78" transform="rotate(80 1273.4 493.1)"/>
<rect x="884.4" y="66.8" width="11.6" height="4.7" fill="#a0d0c0" opacity="0.91" transform="rotate(165 884.4 66.8)"/>
<rect x="653.6" y="659.5" width="9.7" height="3.3" fill="#f4ecf0" opacity="0.95" transform="rotate(59 653.6 659.5)"/>
<rect x="867.9" y="409.0" width="10.2" height="4.6" fill="#ffffff" opacity="0.95" transform="rotate(143 867.9 409.0)"/>
<rect x="1375.3" y="207.8" width="8.1" height="4.3" fill="#3a3050" opacity="0.78" transform="rotate(166 1375.3 207.8)"/>
<rect x="1126.6" y="617.2" width="7.9" height="4.0" fill="#ffffff" opacity="0.95" transform="rotate(134 1126.6 617.2)"/>
<rect x="910.8" y="519.6" width="9.3" height="4.2" fill="#f8f0e0" opacity="0.66" transform="rotate(80 910.8 519.6)"/>
<rect x="686.6" y="608.7" width="6.5" height="3.4" fill="#a0d0c0" opacity="0.62" transform="rotate(173 686.6 608.7)"/>
<rect x="986.9" y="724.8" width="9.7" height="4.7" fill="#ffffff" opacity="0.70" transform="rotate(0 986.9 724.8)"/>
<rect x="1011.0" y="403.8" width="6.9" height="4.1" fill="#f0e0e8" opacity="0.90" transform="rotate(162 1011.0 403.8)"/>
<rect x="843.5" y="736.0" width="6.0" height="4.7" fill="#a0d0c0" opacity="0.73" transform="rotate(41 843.5 736.0)"/>
<rect x="952.1" y="606.7" width="11.3" height="4.4" fill="#3a3050" opacity="0.83" transform="rotate(81 952.1 606.7)"/>
<rect x="1009.2" y="645.9" width="8.0" height="4.4" fill="#f4ecf0" opacity="0.75" transform="rotate(148 1009.2 645.9)"/>
<rect x="939.7" y="93.6" width="9.4" height="3.6" fill="#f8f0e0" opacity="0.78" transform="rotate(46 939.7 93.6)"/>
<rect x="923.8" y="338.0" width="11.1" height="4.9" fill="#a0d0c0" opacity="0.81" transform="rotate(104 923.8 338.0)"/>
<rect x="1543.8" y="627.7" width="6.7" height="3.7" fill="#3a3050" opacity="0.77" transform="rotate(22 1543.8 627.7)"/>
<rect x="1091.5" y="426.4" width="7.8" height="4.5" fill="#e0a0a0" opacity="0.89" transform="rotate(124 1091.5 426.4)"/>
<rect x="512.2" y="304.9" width="11.7" height="3.6" fill="#f4ecf0" opacity="0.80" transform="rotate(114 512.2 304.9)"/>
<rect x="1124.6" y="648.7" width="8.9" height="3.4" fill="#2a2844" opacity="0.90" transform="rotate(48 1124.6 648.7)"/>
<rect x="1006.4" y="268.5" width="9.6" height="3.2" fill="#ffffff" opacity="0.74" transform="rotate(151 1006.4 268.5)"/>
<rect x="1003.0" y="620.1" width="10.7" height="3.0" fill="#e0a0a0" opacity="0.94" transform="rotate(152 1003.0 620.1)"/>
<rect x="876.8" y="79.0" width="12.0" height="4.1" fill="#f4ecf0" opacity="0.70" transform="rotate(172 876.8 79.0)"/>
<rect x="1260.0" y="529.1" width="6.4" height="4.1" fill="#2a2844" opacity="0.75" transform="rotate(127 1260.0 529.1)"/>
<rect x="1242.7" y="717.5" width="8.2" height="4.2" fill="#3a3050" opacity="0.88" transform="rotate(42 1242.7 717.5)"/>
<rect x="1014.9" y="348.6" width="8.0" height="4.1" fill="#f8f0e0" opacity="0.64" transform="rotate(45 1014.9 348.6)"/>
<rect x="963.4" y="644.6" width="7.4" height="3.4" fill="#a0d0c0" opacity="0.92" transform="rotate(128 963.4 644.6)"/>
<rect x="1055.0" y="436.2" width="6.5" height="5.0" fill="#f4ecf0" opacity="0.94" transform="rotate(97 1055.0 436.2)"/>
<rect x="1327.4" y="333.9" width="8.5" height="4.2" fill="#f8f0e0" opacity="0.60" transform="rotate(77 1327.4 333.9)"/>
<rect x="1172.6" y="450.2" width="10.3" height="4.4" fill="#ffffff" opacity="0.61" transform="rotate(177 1172.6 450.2)"/>
<rect x="1179.8" y="243.2" width="7.6" height="3.5" fill="#f8f0e0" opacity="0.78" transform="rotate(19 1179.8 243.2)"/>
<rect x="869.4" y="175.0" width="9.5" height="3.2" fill="#e8d0d8" opacity="1.00" transform="rotate(78 869.4 175.0)"/>
<rect x="846.3" y="604.4" width="6.9" height="3.8" fill="#3a3050" opacity="0.81" transform="rotate(80 846.3 604.4)"/>
<rect x="793.5" y="697.8" width="10.5" height="4.3" fill="#2a2844" opacity="0.65" transform="rotate(66 793.5 697.8)"/>
<rect x="788.2" y="513.9" width="11.9" height="3.8" fill="#e0a0a0" opacity="0.95" transform="rotate(24 788.2 513.9)"/>
<rect x="1094.1" y="417.9" width="12.0" height="4.1" fill="#3a3050" opacity="0.69" transform="rotate(59 1094.1 417.9)"/>
<rect x="1241.9" y="619.3" width="8.7" height="4.6" fill="#e0a0a0" opacity="0.80" transform="rotate(154 1241.9 619.3)"/>
<rect x="650.1" y="658.6" width="8.1" height="5.0" fill="#e0a0a0" opacity="0.72" transform="rotate(11 650.1 658.6)"/>
<rect x="881.0" y="440.5" width="7.1" height="5.0" fill="#ffffff" opacity="0.65" transform="rotate(169 881.0 440.5)"/>
<rect x="1312.6" y="411.8" width="10.7" height="3.0" fill="#a0d0c0" opacity="0.73" transform="rotate(44 1312.6 411.8)"/>
<rect x="1116.8" y="722.8" width="11.8" height="4.9" fill="#ffffff" opacity="0.90" transform="rotate(150 1116.8 722.8)"/>
<rect x="951.6" y="532.1" width="6.2" height="4.7" fill="#ffffff" opacity="0.85" transform="rotate(121 951.6 532.1)"/>
<rect x="600.7" y="656.8" width="7.7" height="4.8" fill="#f8f0e0" opacity="0.91" transform="rotate(3 600.7 656.8)"/>
<rect x="800.8" y="686.2" width="6.0" height="3.8" fill="#f8f0e0" opacity="0.89" transform="rotate(20 800.8 686.2)"/>
<rect x="1017.9" y="10.2" width="11.1" height="4.7" fill="#ffffff" opacity="0.69" transform="rotate(92 1017.9 10.2)"/>
<rect x="862.5" y="91.5" width="6.0" height="5.0" fill="#2a2844" opacity="0.91" transform="rotate(74 862.5 91.5)"/>
<rect x="1083.8" y="377.1" width="9.1" height="4.5" fill="#e0a0a0" opacity="0.77" transform="rotate(60 1083.8 377.1)"/>
<rect x="714.0" y="58.4" width="7.9" height="3.2" fill="#2a2844" opacity="0.89" transform="rotate(8 714.0 58.4)"/>
<rect x="1161.5" y="24.4" width="6.8" height="4.8" fill="#f0e0e8" opacity="0.85" transform="rotate(95 1161.5 24.4)"/>
<rect x="1077.1" y="387.1" width="7.8" height="4.1" fill="#2a2844" opacity="0.96" transform="rotate(86 1077.1 387.1)"/>
<rect x="1157.8" y="505.1" width="10.7" height="4.1" fill="#a0d0c0" opacity="0.89" transform="rotate(116 1157.8 505.1)"/>
<rect x="1019.3" y="85.0" width="9.9" height="3.3" fill="#f4ecf0" opacity="0.80" transform="rotate(3 1019.3 85.0)"/>
<rect x="859.5" y="412.1" width="10.9" height="4.0" fill="#ffffff" opacity="0.87" transform="rotate(146 859.5 412.1)"/>
<rect x="1114.4" y="248.3" width="9.0" height="3.6" fill="#3a3050" opacity="0.87" transform="rotate(107 1114.4 248.3)"/>
<rect x="869.2" y="242.7" width="10.0" height="4.3" fill="#f8f0e0" opacity="0.75" transform="rotate(111 869.2 242.7)"/>
<rect x="938.1" y="500.0" width="9.4" height="4.7" fill="#f8f0e0" opacity="0.95" transform="rotate(53 938.1 500.0)"/>
<rect x="1382.4" y="511.8" width="8.3" height="3.2" fill="#e8d0d8" opacity="0.67" transform="rotate(143 1382.4 511.8)"/>
<rect x="1078.5" y="503.1" width="10.7" height="4.4" fill="#e8d0d8" opacity="0.80" transform="rotate(178 1078.5 503.1)"/>
<rect x="877.4" y="157.2" width="8.3" height="3.9" fill="#3a3050" opacity="0.73" transform="rotate(124 877.4 157.2)"/>
<rect x="1134.8" y="449.6" width="6.2" height="3.2" fill="#f8f0e0" opacity="0.84" transform="rotate(101 1134.8 449.6)"/>
<rect x="1077.1" y="79.8" width="11.6" height="3.8" fill="#f0e0e8" opacity="0.75" transform="rotate(173 1077.1 79.8)"/>
<rect x="691.0" y="758.1" width="7.0" height="4.4" fill="#f4ecf0" opacity="0.92" transform="rotate(163 691.0 758.1)"/>
<rect x="857.3" y="737.7" width="7.3" height="4.1" fill="#e0a0a0" opacity="0.69" transform="rotate(79 857.3 737.7)"/>
<rect x="1055.9" y="371.9" width="10.2" height="4.4" fill="#d8e0f0" opacity="1.00" transform="rotate(178 1055.9 371.9)"/>
<rect x="960.3" y="378.1" width="9.9" height="3.3" fill="#e0a0a0" opacity="0.72" transform="rotate(150 960.3 378.1)"/>
<rect x="915.0" y="367.8" width="7.0" height="3.9" fill="#a0d0c0" opacity="0.80" transform="rotate(62 915.0 367.8)"/>
<rect x="802.0" y="348.6" width="6.5" height="3.7" fill="#ffffff" opacity="0.91" transform="rotate(27 802.0 348.6)"/>
<rect x="1280.1" y="564.3" width="10.8" height="3.0" fill="#ffffff" opacity="0.68" transform="rotate(23 1280.1 564.3)"/>
<rect x="1206.3" y="443.9" width="6.2" height="4.2" fill="#f4ecf0" opacity="0.69" transform="rotate(150 1206.3 443.9)"/>
<rect x="959.3" y="759.9" width="11.4" height="3.6" fill="#f0e0e8" opacity="0.80" transform="rotate(74 959.3 759.9)"/>
<rect x="848.6" y="697.8" width="7.7" height="4.8" fill="#e0a0a0" opacity="0.71" transform="rotate(40 848.6 697.8)"/>
<rect x="970.6" y="719.9" width="11.2" height="5.0" fill="#d8e0f0" opacity="0.88" transform="rotate(90 970.6 719.9)"/>
<rect x="670.4" y="602.8" width="11.3" height="3.7" fill="#e0a0a0" opacity="0.79" transform="rotate(146 670.4 602.8)"/>
<rect x="653.9" y="693.3" width="11.0" height="4.4" fill="#2a2844" opacity="0.80" transform="rotate(36 653.9 693.3)"/>
<rect x="1008.4" y="549.9" width="9.7" height="4.7" fill="#f4ecf0" opacity="0.84" transform="rotate(171 1008.4 549.9)"/>
<rect x="984.6" y="693.2" width="9.7" height="4.8" fill="#f4ecf0" opacity="0.65" transform="rotate(171 984.6 693.2)"/>
<rect x="934.8" y="701.0" width="6.4" height="3.8" fill="#f8f0e0" opacity="0.70" transform="rotate(80 934.8 701.0)"/>
<rect x="1212.1" y="342.6" width="8.7" height="4.0" fill="#d8e0f0" opacity="0.67" transform="rotate(141 1212.1 342.6)"/>
<rect x="1228.6" y="587.0" width="6.4" height="3.2" fill="#f8f0e0" opacity="0.66" transform="rotate(179 1228.6 587.0)"/>
<rect x="913.3" y="172.9" width="6.5" height="3.2" fill="#ffffff" opacity="0.99" transform="rotate(69 913.3 172.9)"/>
<rect x="1300.8" y="623.1" width="9.1" height="3.9" fill="#f8f0e0" opacity="0.93" transform="rotate(134 1300.8 623.1)"/>
<rect x="1208.0" y="631.1" width="6.7" height="3.2" fill="#3a3050" opacity="0.71" transform="rotate(9 1208.0 631.1)"/>
<rect x="912.3" y="252.7" width="9.8" height="4.6" fill="#ffffff" opacity="0.98" transform="rotate(148 912.3 252.7)"/>
<rect x="958.3" y="455.2" width="7.3" height="3.3" fill="#f4ecf0" opacity="0.85" transform="rotate(109 958.3 455.2)"/>
<rect x="1110.9" y="629.8" width="7.2" height="3.8" fill="#f8f0e0" opacity="0.61" transform="rotate(91 1110.9 629.8)"/>
<rect x="1047.3" y="60.4" width="7.5" height="4.6" fill="#f4ecf0" opacity="0.74" transform="rotate(98 1047.3 60.4)"/>
<rect x="1343.4" y="441.6" width="9.4" height="4.7" fill="#2a2844" opacity="0.77" transform="rotate(66 1343.4 441.6)"/>
<rect x="736.1" y="321.4" width="11.0" height="4.2" fill="#a0d0c0" opacity="0.66" transform="rotate(2 736.1 321.4)"/>
<rect x="1216.0" y="198.4" width="9.0" height="4.7" fill="#f8f0e0" opacity="0.64" transform="rotate(164 1216.0 198.4)"/>
<rect x="973.8" y="404.7" width="10.6" height="4.0" fill="#d8e0f0" opacity="0.70" transform="rotate(63 973.8 404.7)"/>
<rect x="986.2" y="480.0" width="11.1" height="4.4" fill="#3a3050" opacity="0.78" transform="rotate(60 986.2 480.0)"/>
<rect x="1081.1" y="226.6" width="7.4" height="3.2" fill="#f8f0e0" opacity="0.91" transform="rotate(82 1081.1 226.6)"/>
<rect x="797.4" y="213.8" width="11.6" height="4.0" fill="#ffffff" opacity="0.74" transform="rotate(0 797.4 213.8)"/>
<rect x="1027.4" y="416.0" width="7.5" height="3.3" fill="#f0e0e8" opacity="0.75" transform="rotate(70 1027.4 416.0)"/>
<rect x="1010.6" y="453.5" width="9.0" height="3.1" fill="#2a2844" opacity="0.93" transform="rotate(81 1010.6 453.5)"/>
<rect x="1123.9" y="515.7" width="10.7" height="3.4" fill="#3a3050" opacity="1.00" transform="rotate(151 1123.9 515.7)"/>
<rect x="910.7" y="313.2" width="7.1" height="4.2" fill="#a0d0c0" opacity="0.65" transform="rotate(64 910.7 313.2)"/>
<rect x="1029.1" y="714.8" width="8.0" height="4.5" fill="#f4ecf0" opacity="0.96" transform="rotate(164 1029.1 714.8)"/>
<rect x="1120.5" y="442.2" width="8.2" height="5.0" fill="#a0d0c0" opacity="0.96" transform="rotate(57 1120.5 442.2)"/>
<rect x="967.9" y="410.7" width="7.8" height="3.4" fill="#d8e0f0" opacity="0.97" transform="rotate(101 967.9 410.7)"/>
<rect x="847.1" y="543.2" width="6.9" height="4.0" fill="#d8e0f0" opacity="0.63" transform="rotate(118 847.1 543.2)"/>
<rect x="898.3" y="665.1" width="6.6" height="3.2" fill="#ffffff" opacity="1.00" transform="rotate(26 898.3 665.1)"/>
<rect x="777.0" y="505.2" width="7.1" height="4.4" fill="#f8f0e0" opacity="0.72" transform="rotate(23 777.0 505.2)"/>
<rect x="787.4" y="431.8" width="10.3" height="4.0" fill="#f4ecf0" opacity="0.82" transform="rotate(69 787.4 431.8)"/>
<rect x="874.5" y="195.0" width="6.4" height="3.7" fill="#e0a0a0" opacity="0.70" transform="rotate(88 874.5 195.0)"/>
<rect x="765.7" y="611.6" width="9.6" height="4.5" fill="#a0d0c0" opacity="0.93" transform="rotate(48 765.7 611.6)"/>
<rect x="1228.4" y="169.5" width="8.2" height="4.1" fill="#d8e0f0" opacity="0.83" transform="rotate(137 1228.4 169.5)"/>
<rect x="1054.2" y="272.0" width="9.2" height="4.0" fill="#3a3050" opacity="0.69" transform="rotate(46 1054.2 272.0)"/>
<rect x="919.8" y="46.3" width="9.7" height="4.4" fill="#ffffff" opacity="0.84" transform="rotate(61 919.8 46.3)"/>
<rect x="1128.8" y="727.3" width="8.2" height="3.6" fill="#2a2844" opacity="0.62" transform="rotate(167 1128.8 727.3)"/>
<rect x="1043.3" y="722.8" width="8.3" height="3.9" fill="#ffffff" opacity="0.81" transform="rotate(109 1043.3 722.8)"/>
<rect x="910.7" y="680.4" width="6.1" height="4.6" fill="#f8f0e0" opacity="0.86" transform="rotate(116 910.7 680.4)"/>
<rect x="823.6" y="547.3" width="12.0" height="3.0" fill="#ffffff" opacity="0.68" transform="rotate(103 823.6 547.3)"/>
<rect x="992.9" y="426.5" width="6.9" height="4.5" fill="#e8d0d8" opacity="0.93" transform="rotate(174 992.9 426.5)"/>
<rect x="856.0" y="612.8" width="10.0" height="3.4" fill="#ffffff" opacity="0.73" transform="rotate(60 856.0 612.8)"/>
<rect x="783.2" y="44.9" width="8.0" height="3.2" fill="#f0e0e8" opacity="0.74" transform="rotate(170 783.2 44.9)"/>
<rect x="1141.0" y="674.7" width="10.9" height="4.1" fill="#e8d0d8" opacity="0.88" transform="rotate(117 1141.0 674.7)"/>
<rect x="1115.4" y="688.3" width="10.2" height="5.0" fill="#a0d0c0" opacity="0.94" transform="rotate(98 1115.4 688.3)"/>
<rect x="1183.6" y="305.8" width="7.7" height="4.9" fill="#a0d0c0" opacity="0.65" transform="rotate(34 1183.6 305.8)"/>
<rect x="1130.1" y="263.9" width="11.0" height="3.4" fill="#ffffff" opacity="0.97" transform="rotate(168 1130.1 263.9)"/>
<rect x="908.7" y="241.3" width="7.7" height="4.3" fill="#d8e0f0" opacity="0.88" transform="rotate(74 908.7 241.3)"/>
<rect x="1039.5" y="269.1" width="11.8" height="3.8" fill="#ffffff" opacity="0.79" transform="rotate(53 1039.5 269.1)"/>
<rect x="865.1" y="690.1" width="7.5" height="3.4" fill="#2a2844" opacity="0.87" transform="rotate(25 865.1 690.1)"/>
<rect x="790.8" y="574.4" width="6.4" height="4.0" fill="#a0d0c0" opacity="0.91" transform="rotate(155 790.8 574.4)"/>
<rect x="1024.8" y="283.8" width="6.5" height="4.5" fill="#ffffff" opacity="0.75" transform="rotate(155 1024.8 283.8)"/>
<rect x="951.3" y="655.9" width="11.3" height="3.5" fill="#e0a0a0" opacity="0.99" transform="rotate(67 951.3 655.9)"/>
<rect x="822.1" y="741.7" width="9.7" height="4.2" fill="#e8d0d8" opacity="0.77" transform="rotate(78 822.1 741.7)"/>
<rect x="840.8" y="153.8" width="8.6" height="4.2" fill="#3a3050" opacity="0.93" transform="rotate(138 840.8 153.8)"/>
<rect x="1077.0" y="421.7" width="6.5" height="4.0" fill="#ffffff" opacity="0.93" transform="rotate(94 1077.0 421.7)"/>
<rect x="1012.2" y="164.9" width="9.1" height="5.0" fill="#a0d0c0" opacity="0.74" transform="rotate(97 1012.2 164.9)"/>
<rect x="1059.0" y="359.5" width="8.3" height="4.1" fill="#f4ecf0" opacity="0.80" transform="rotate(75 1059.0 359.5)"/>
<rect x="688.0" y="665.9" width="11.6" height="4.5" fill="#2a2844" opacity="0.90" transform="rotate(118 688.0 665.9)"/>
<rect x="951.5" y="384.0" width="11.0" height="3.4" fill="#a0d0c0" opacity="0.65" transform="rotate(173 951.5 384.0)"/>
<rect x="1108.8" y="308.6" width="9.5" height="3.4" fill="#e0a0a0" opacity="0.67" transform="rotate(126 1108.8 308.6)"/>
<rect x="693.4" y="722.4" width="10.1" height="3.8" fill="#a0d0c0" opacity="0.93" transform="rotate(160 693.4 722.4)"/>
<rect x="719.6" y="456.0" width="11.4" height="4.9" fill="#f4ecf0" opacity="0.74" transform="rotate(170 719.6 456.0)"/>
<rect x="778.3" y="609.6" width="8.4" height="4.6" fill="#ffffff" opacity="0.82" transform="rotate(117 778.3 609.6)"/>
<rect x="553.6" y="24.2" width="8.8" height="3.2" fill="#2a2844" opacity="0.64" transform="rotate(151 553.6 24.2)"/>
<rect x="1006.0" y="572.9" width="8.5" height="4.2" fill="#a0d0c0" opacity="0.98" transform="rotate(99 1006.0 572.9)"/>
<rect x="1046.6" y="541.0" width="8.7" height="4.3" fill="#ffffff" opacity="0.79" transform="rotate(16 1046.6 541.0)"/>
<rect x="1132.0" y="74.2" width="9.2" height="4.8" fill="#e0a0a0" opacity="0.67" transform="rotate(155 1132.0 74.2)"/>
<rect x="1085.5" y="652.3" width="8.0" height="4.0" fill="#d8e0f0" opacity="0.78" transform="rotate(130 1085.5 652.3)"/>
<rect x="717.4" y="630.0" width="6.1" height="3.8" fill="#e0a0a0" opacity="0.77" transform="rotate(157 717.4 630.0)"/>
<rect x="747.1" y="374.9" width="11.8" height="3.6" fill="#ffffff" opacity="0.98" transform="rotate(98 747.1 374.9)"/>
<rect x="1266.2" y="707.0" width="8.1" height="4.9" fill="#3a3050" opacity="0.66" transform="rotate(16 1266.2 707.0)"/>
<rect x="944.5" y="132.5" width="11.4" height="3.9" fill="#f8f0e0" opacity="0.84" transform="rotate(41 944.5 132.5)"/>
<rect x="1281.3" y="502.3" width="9.6" height="4.6" fill="#2a2844" opacity="0.82" transform="rotate(80 1281.3 502.3)"/>
<rect x="1166.5" y="401.6" width="6.5" height="4.5" fill="#f4ecf0" opacity="0.81" transform="rotate(27 1166.5 401.6)"/>
<rect x="784.4" y="403.2" width="7.0" height="4.7" fill="#3a3050" opacity="0.73" transform="rotate(28 784.4 403.2)"/>
<rect x="1205.6" y="5.3" width="8.1" height="3.2" fill="#f8f0e0" opacity="0.74" transform="rotate(84 1205.6 5.3)"/>
<rect x="1069.9" y="697.2" width="9.4" height="4.1" fill="#ffffff" opacity="0.73" transform="rotate(30 1069.9 697.2)"/>
<rect x="857.5" y="547.9" width="6.1" height="3.1" fill="#ffffff" opacity="0.97" transform="rotate(66 857.5 547.9)"/>
<rect x="652.9" y="444.0" width="7.8" height="4.5" fill="#a0d0c0" opacity="0.85" transform="rotate(2 652.9 444.0)"/>
<rect x="1207.5" y="202.8" width="6.0" height="4.0" fill="#a0d0c0" opacity="0.91" transform="rotate(100 1207.5 202.8)"/>
<rect x="1292.5" y="531.9" width="7.0" height="3.9" fill="#f4ecf0" opacity="0.90" transform="rotate(111 1292.5 531.9)"/>
<rect x="1440.2" y="558.9" width="9.3" height="3.0" fill="#f8f0e0" opacity="0.85" transform="rotate(167 1440.2 558.9)"/>
<rect x="800.4" y="357.3" width="9.0" height="4.1" fill="#e0a0a0" opacity="0.67" transform="rotate(80 800.4 357.3)"/>
<rect x="853.0" y="653.8" width="6.4" height="4.7" fill="#3a3050" opacity="0.92" transform="rotate(44 853.0 653.8)"/>
<rect x="915.5" y="723.8" width="6.9" height="3.7" fill="#3a3050" opacity="0.63" transform="rotate(49 915.5 723.8)"/>
<rect x="820.7" y="737.0" width="8.8" height="3.2" fill="#f4ecf0" opacity="0.93" transform="rotate(45 820.7 737.0)"/>
<rect x="884.6" y="312.6" width="9.1" height="3.9" fill="#a0d0c0" opacity="0.87" transform="rotate(95 884.6 312.6)"/>
<rect x="1306.5" y="262.8" width="6.5" height="4.4" fill="#ffffff" opacity="0.63" transform="rotate(74 1306.5 262.8)"/>
<rect x="854.5" y="540.6" width="11.4" height="4.5" fill="#ffffff" opacity="0.63" transform="rotate(7 854.5 540.6)"/>
<rect x="902.0" y="97.1" width="10.4" height="4.1" fill="#e0a0a0" opacity="0.70" transform="rotate(24 902.0 97.1)"/>
<rect x="1240.1" y="437.5" width="9.2" height="4.0" fill="#d8e0f0" opacity="0.72" transform="rotate(108 1240.1 437.5)"/>
<rect x="1503.0" y="577.1" width="10.1" height="4.9" fill="#f8f0e0" opacity="0.98" transform="rotate(106 1503.0 577.1)"/>
<rect x="892.8" y="219.1" width="10.4" height="3.7" fill="#d8e0f0" opacity="0.64" transform="rotate(138 892.8 219.1)"/>
<rect x="793.6" y="683.3" width="9.2" height="3.1" fill="#f4ecf0" opacity="0.88" transform="rotate(43 793.6 683.3)"/>
<rect x="1054.8" y="687.2" width="11.9" height="5.0" fill="#ffffff" opacity="0.63" transform="rotate(54 1054.8 687.2)"/>
<rect x="1137.7" y="456.5" width="9.4" height="4.5" fill="#f8f0e0" opacity="0.80" transform="rotate(148 1137.7 456.5)"/>
<rect x="825.4" y="676.2" width="9.6" height="4.0" fill="#f8f0e0" opacity="0.84" transform="rotate(42 825.4 676.2)"/>
<rect x="504.5" y="623.2" width="6.3" height="4.9" fill="#f4ecf0" opacity="0.97" transform="rotate(39 504.5 623.2)"/>
<rect x="758.9" y="603.4" width="7.8" height="4.0" fill="#f0e0e8" opacity="0.99" transform="rotate(71 758.9 603.4)"/>
<rect x="851.3" y="662.2" width="10.1" height="4.2" fill="#a0d0c0" opacity="0.95" transform="rotate(10 851.3 662.2)"/>
<rect x="1073.2" y="564.2" width="7.6" height="3.4" fill="#f0e0e8" opacity="0.78" transform="rotate(144 1073.2 564.2)"/>
<rect x="952.3" y="386.3" width="9.5" height="3.9" fill="#f4ecf0" opacity="0.88" transform="rotate(91 952.3 386.3)"/>
<rect x="816.9" y="391.9" width="10.1" height="3.2" fill="#ffffff" opacity="0.73" transform="rotate(46 816.9 391.9)"/>
<rect x="1123.2" y="352.5" width="7.9" height="4.1" fill="#3a3050" opacity="0.73" transform="rotate(90 1123.2 352.5)"/>
<rect x="720.0" y="527.8" width="9.6" height="3.9" fill="#f0e0e8" opacity="0.90" transform="rotate(65 720.0 527.8)"/>
<rect x="1423.5" y="582.4" width="8.2" height="3.0" fill="#e8d0d8" opacity="0.74" transform="rotate(36 1423.5 582.4)"/>
<rect x="900.6" y="171.4" width="6.0" height="3.6" fill="#d8e0f0" opacity="0.68" transform="rotate(149 900.6 171.4)"/>
<rect x="628.6" y="683.7" width="8.4" height="3.0" fill="#ffffff" opacity="0.61" transform="rotate(159 628.6 683.7)"/>
<rect x="1153.0" y="61.7" width="7.0" height="4.8" fill="#f8f0e0" opacity="0.71" transform="rotate(142 1153.0 61.7)"/>
<rect x="1059.1" y="289.8" width="6.6" height="4.6" fill="#ffffff" opacity="0.92" transform="rotate(97 1059.1 289.8)"/>
<rect x="1100.9" y="569.1" width="9.3" height="3.3" fill="#f0e0e8" opacity="0.99" transform="rotate(132 1100.9 569.1)"/>
<rect x="953.5" y="646.6" width="6.9" height="4.5" fill="#d8e0f0" opacity="0.79" transform="rotate(6 953.5 646.6)"/>
<rect x="1034.5" y="192.9" width="8.2" height="3.9" fill="#2a2844" opacity="0.92" transform="rotate(29 1034.5 192.9)"/>
<rect x="960.8" y="274.6" width="9.9" height="4.9" fill="#e0a0a0" opacity="0.81" transform="rotate(116 960.8 274.6)"/>
<rect x="1142.2" y="377.1" width="10.8" height="3.1" fill="#ffffff" opacity="0.92" transform="rotate(154 1142.2 377.1)"/>
<rect x="948.5" y="673.0" width="11.1" height="3.3" fill="#f0e0e8" opacity="0.90" transform="rotate(92 948.5 673.0)"/>
<rect x="1141.0" y="642.9" width="6.9" height="4.1" fill="#e8d0d8" opacity="0.84" transform="rotate(104 1141.0 642.9)"/>
<rect x="1015.1" y="441.4" width="7.1" height="3.2" fill="#3a3050" opacity="0.89" transform="rotate(126 1015.1 441.4)"/>
<rect x="512.6" y="759.6" width="8.4" height="4.9" fill="#3a3050" opacity="0.62" transform="rotate(53 512.6 759.6)"/>
<rect x="1281.6" y="573.8" width="9.2" height="4.6" fill="#e8d0d8" opacity="0.95" transform="rotate(31 1281.6 573.8)"/>
<rect x="762.7" y="499.7" width="8.5" height="3.0" fill="#f8f0e0" opacity="0.92" transform="rotate(23 762.7 499.7)"/>
<rect x="1311.3" y="246.1" width="9.1" height="3.4" fill="#2a2844" opacity="0.62" transform="rotate(34 1311.3 246.1)"/>
<rect x="967.8" y="363.7" width="12.0" height="3.1" fill="#a0d0c0" opacity="0.63" transform="rotate(32 967.8 363.7)"/>
<rect x="929.7" y="298.5" width="9.1" height="4.9" fill="#e0a0a0" opacity="0.61" transform="rotate(45 929.7 298.5)"/>
<rect x="966.4" y="195.0" width="9.2" height="3.8" fill="#f0e0e8" opacity="0.64" transform="rotate(101 966.4 195.0)"/>
<rect x="1065.2" y="621.9" width="7.7" height="3.8" fill="#ffffff" opacity="0.62" transform="rotate(2 1065.2 621.9)"/>
<rect x="1071.6" y="185.3" width="9.4" height="4.9" fill="#f8f0e0" opacity="0.97" transform="rotate(55 1071.6 185.3)"/>
<rect x="1051.7" y="721.2" width="11.0" height="4.9" fill="#f4ecf0" opacity="0.94" transform="rotate(80 1051.7 721.2)"/>
<rect x="1121.2" y="248.6" width="6.1" height="3.0" fill="#f0e0e8" opacity="0.81" transform="rotate(71 1121.2 248.6)"/>
<rect x="947.8" y="511.3" width="8.5" height="3.9" fill="#d8e0f0" opacity="0.63" transform="rotate(22 947.8 511.3)"/>
<rect x="1098.1" y="363.1" width="8.9" height="4.4" fill="#e0a0a0" opacity="0.96" transform="rotate(149 1098.1 363.1)"/>
<rect x="425.1" y="374.4" width="11.4" height="3.4" fill="#ffffff" opacity="0.76" transform="rotate(154 425.1 374.4)"/>
<rect x="846.6" y="638.0" width="11.7" height="4.6" fill="#f0e0e8" opacity="0.90" transform="rotate(60 846.6 638.0)"/>
<rect x="959.8" y="473.9" width="9.3" height="3.3" fill="#e8d0d8" opacity="0.62" transform="rotate(82 959.8 473.9)"/>
<rect x="969.5" y="178.2" width="10.8" height="4.1" fill="#f0e0e8" opacity="0.64" transform="rotate(144 969.5 178.2)"/>
<rect x="1145.2" y="525.8" width="7.4" height="3.6" fill="#f8f0e0" opacity="0.99" transform="rotate(65 1145.2 525.8)"/>
<rect x="580.5" y="516.6" width="9.8" height="4.2" fill="#f8f0e0" opacity="0.82" transform="rotate(134 580.5 516.6)"/>
<rect x="834.6" y="666.4" width="7.2" height="4.0" fill="#d8e0f0" opacity="0.66" transform="rotate(179 834.6 666.4)"/>
<rect x="966.9" y="593.5" width="9.6" height="3.7" fill="#3a3050" opacity="0.64" transform="rotate(177 966.9 593.5)"/>
<rect x="1052.1" y="512.2" width="11.8" height="4.6" fill="#ffffff" opacity="0.79" transform="rotate(9 1052.1 512.2)"/>
<rect x="560.8" y="443.2" width="6.8" height="4.4" fill="#f4ecf0" opacity="0.92" transform="rotate(171 560.8 443.2)"/>
<rect x="1169.5" y="452.2" width="10.6" height="4.1" fill="#f4ecf0" opacity="0.87" transform="rotate(56 1169.5 452.2)"/>
<rect x="1073.9" y="327.9" width="10.0" height="4.9" fill="#ffffff" opacity="0.84" transform="rotate(104 1073.9 327.9)"/>
<rect x="871.8" y="259.5" width="10.3" height="3.1" fill="#ffffff" opacity="0.80" transform="rotate(127 871.8 259.5)"/>
<rect x="1150.2" y="566.8" width="7.3" height="3.2" fill="#f8f0e0" opacity="0.78" transform="rotate(133 1150.2 566.8)"/>
<rect x="1106.9" y="342.4" width="8.1" height="4.3" fill="#d8e0f0" opacity="0.82" transform="rotate(135 1106.9 342.4)"/>
<rect x="992.1" y="343.0" width="8.1" height="4.6" fill="#3a3050" opacity="0.72" transform="rotate(159 992.1 343.0)"/>
<rect x="991.8" y="520.7" width="8.0" height="5.0" fill="#e8d0d8" opacity="0.73" transform="rotate(129 991.8 520.7)"/>
<rect x="1015.7" y="372.1" width="11.9" height="4.3" fill="#a0d0c0" opacity="0.66" transform="rotate(118 1015.7 372.1)"/>
<rect x="960.8" y="479.5" width="10.2" height="3.8" fill="#e8d0d8" opacity="0.61" transform="rotate(154 960.8 479.5)"/>
<rect x="1069.6" y="717.6" width="7.6" height="3.3" fill="#e0a0a0" opacity="0.79" transform="rotate(174 1069.6 717.6)"/>
<rect x="969.0" y="715.1" width="11.5" height="3.2" fill="#f0e0e8" opacity="0.73" transform="rotate(148 969.0 715.1)"/>
<rect x="1152.9" y="574.0" width="9.1" height="4.6" fill="#2a2844" opacity="0.82" transform="rotate(10 1152.9 574.0)"/>
<rect x="1193.0" y="536.4" width="7.8" height="4.4" fill="#3a3050" opacity="0.67" transform="rotate(2 1193.0 536.4)"/>
<rect x="959.3" y="298.3" width="6.9" height="5.0" fill="#f0e0e8" opacity="0.89" transform="rotate(90 959.3 298.3)"/>
<rect x="1188.6" y="714.6" width="9.8" height="4.6" fill="#e0a0a0" opacity="0.68" transform="rotate(52 1188.6 714.6)"/>
<rect x="946.2" y="522.9" width="6.9" height="3.5" fill="#ffffff" opacity="0.97" transform="rotate(24 946.2 522.9)"/>
<rect x="1071.4" y="523.0" width="10.5" height="4.2" fill="#e0a0a0" opacity="0.86" transform="rotate(15 1071.4 523.0)"/>
<rect x="775.4" y="293.0" width="6.1" height="4.0" fill="#e8d0d8" opacity="0.80" transform="rotate(110 775.4 293.0)"/>
<rect x="934.5" y="339.0" width="9.0" height="3.7" fill="#3a3050" opacity="0.88" transform="rotate(41 934.5 339.0)"/>
<rect x="883.2" y="297.1" width="8.8" height="3.1" fill="#e8d0d8" opacity="0.84" transform="rotate(8 883.2 297.1)"/>
<rect x="1166.8" y="746.8" width="7.3" height="3.3" fill="#3a3050" opacity="0.71" transform="rotate(80 1166.8 746.8)"/>
<rect x="999.2" y="537.8" width="6.4" height="4.4" fill="#e8d0d8" opacity="0.79" transform="rotate(168 999.2 537.8)"/>
<rect x="992.3" y="470.1" width="10.4" height="4.6" fill="#f8f0e0" opacity="0.60" transform="rotate(57 992.3 470.1)"/>
<rect x="892.0" y="758.7" width="8.2" height="3.7" fill="#ffffff" opacity="0.99" transform="rotate(146 892.0 758.7)"/>
<rect x="1027.7" y="544.3" width="8.8" height="4.6" fill="#ffffff" opacity="0.94" transform="rotate(27 1027.7 544.3)"/>
<rect x="824.0" y="649.8" width="8.5" height="4.6" fill="#e8d0d8" opacity="0.90" transform="rotate(174 824.0 649.8)"/>
<rect x="980.9" y="754.8" width="11.6" height="3.0" fill="#3a3050" opacity="0.91" transform="rotate(64 980.9 754.8)"/>
<rect x="990.2" y="603.6" width="10.8" height="3.3" fill="#a0d0c0" opacity="0.88" transform="rotate(102 990.2 603.6)"/>
<rect x="1125.2" y="238.4" width="10.1" height="4.8" fill="#ffffff" opacity="0.83" transform="rotate(86 1125.2 238.4)"/>
<rect x="1123.4" y="705.6" width="11.3" height="4.1" fill="#f4ecf0" opacity="0.89" transform="rotate(179 1123.4 705.6)"/>
<rect x="723.6" y="666.7" width="7.3" height="4.0" fill="#e0a0a0" opacity="0.75" transform="rotate(92 723.6 666.7)"/>
<rect x="1074.2" y="369.8" width="10.3" height="4.7" fill="#2a2844" opacity="0.62" transform="rotate(42 1074.2 369.8)"/>
<rect x="735.9" y="454.0" width="10.4" height="3.6" fill="#e0a0a0" opacity="0.75" transform="rotate(122 735.9 454.0)"/>
<rect x="773.6" y="235.7" width="6.5" height="3.4" fill="#e0a0a0" opacity="0.87" transform="rotate(138 773.6 235.7)"/>
<rect x="965.1" y="275.7" width="8.2" height="3.7" fill="#f4ecf0" opacity="0.94" transform="rotate(74 965.1 275.7)"/>
<rect x="1026.8" y="602.5" width="9.3" height="4.9" fill="#e0a0a0" opacity="0.92" transform="rotate(24 1026.8 602.5)"/>
<rect x="1078.0" y="598.7" width="6.7" height="4.1" fill="#3a3050" opacity="0.89" transform="rotate(90 1078.0 598.7)"/>
<rect x="993.6" y="271.5" width="7.1" height="4.1" fill="#ffffff" opacity="0.71" transform="rotate(58 993.6 271.5)"/>
<rect x="1004.8" y="716.4" width="9.9" height="3.4" fill="#2a2844" opacity="0.63" transform="rotate(105 1004.8 716.4)"/>
<rect x="617.5" y="512.8" width="9.2" height="3.8" fill="#ffffff" opacity="0.74" transform="rotate(103 617.5 512.8)"/>
<rect x="1203.6" y="680.5" width="6.1" height="4.2" fill="#e8d0d8" opacity="0.83" transform="rotate(74 1203.6 680.5)"/>
<rect x="812.9" y="148.3" width="10.8" height="3.6" fill="#3a3050" opacity="0.95" transform="rotate(57 812.9 148.3)"/>
<rect x="1006.5" y="130.7" width="8.2" height="4.3" fill="#e8d0d8" opacity="0.87" transform="rotate(63 1006.5 130.7)"/>
<rect x="917.7" y="378.5" width="11.1" height="3.6" fill="#e8d0d8" opacity="0.71" transform="rotate(60 917.7 378.5)"/>
<rect x="1238.9" y="524.9" width="8.5" height="3.1" fill="#f4ecf0" opacity="0.74" transform="rotate(15 1238.9 524.9)"/>
<rect x="760.1" y="388.3" width="9.0" height="3.8" fill="#f0e0e8" opacity="0.72" transform="rotate(150 760.1 388.3)"/>
<rect x="699.7" y="262.1" width="11.2" height="4.8" fill="#ffffff" opacity="0.97" transform="rotate(14 699.7 262.1)"/>
<rect x="865.3" y="493.5" width="6.7" height="4.2" fill="#3a3050" opacity="0.85" transform="rotate(43 865.3 493.5)"/>
<rect x="1122.9" y="515.1" width="7.4" height="3.6" fill="#d8e0f0" opacity="0.96" transform="rotate(59 1122.9 515.1)"/>
<rect x="1068.8" y="722.7" width="8.4" height="3.4" fill="#e0a0a0" opacity="0.72" transform="rotate(152 1068.8 722.7)"/>
<rect x="1249.7" y="440.2" width="9.8" height="3.8" fill="#d8e0f0" opacity="0.80" transform="rotate(176 1249.7 440.2)"/>
<rect x="990.0" y="722.1" width="11.2" height="4.8" fill="#f8f0e0" opacity="0.95" transform="rotate(170 990.0 722.1)"/>
<rect x="1069.4" y="521.1" width="10.7" height="3.8" fill="#ffffff" opacity="0.95" transform="rotate(176 1069.4 521.1)"/>
<rect x="1416.4" y="706.6" width="9.9" height="3.9" fill="#f4ecf0" opacity="0.87" transform="rotate(9 1416.4 706.6)"/>
<rect x="1251.1" y="174.9" width="10.9" height="3.2" fill="#f8f0e0" opacity="0.84" transform="rotate(22 1251.1 174.9)"/>
<rect x="962.8" y="694.8" width="8.0" height="3.3" fill="#f4ecf0" opacity="0.69" transform="rotate(114 962.8 694.8)"/>
<rect x="1200.3" y="258.7" width="11.2" height="4.5" fill="#f4ecf0" opacity="0.93" transform="rotate(65 1200.3 258.7)"/>
<rect x="952.6" y="114.7" width="7.0" height="3.9" fill="#ffffff" opacity="0.89" transform="rotate(29 952.6 114.7)"/>
<rect x="577.9" y="725.0" width="11.0" height="4.4" fill="#2a2844" opacity="0.99" transform="rotate(172 577.9 725.0)"/>
<rect x="692.1" y="645.0" width="7.5" height="3.1" fill="#e8d0d8" opacity="0.66" transform="rotate(36 692.1 645.0)"/>
<rect x="900.4" y="740.7" width="8.6" height="3.2" fill="#e8d0d8" opacity="0.72" transform="rotate(65 900.4 740.7)"/>
<rect x="975.2" y="683.5" width="10.7" height="4.2" fill="#f0e0e8" opacity="0.93" transform="rotate(51 975.2 683.5)"/>
<rect x="1062.3" y="89.8" width="7.7" height="3.2" fill="#f8f0e0" opacity="0.82" transform="rotate(172 1062.3 89.8)"/>
<rect x="623.7" y="578.9" width="6.6" height="3.1" fill="#f0e0e8" opacity="0.64" transform="rotate(97 623.7 578.9)"/>
<rect x="1402.2" y="325.5" width="8.6" height="4.2" fill="#ffffff" opacity="0.96" transform="rotate(155 1402.2 325.5)"/>
<rect x="1121.5" y="702.4" width="9.2" height="4.4" fill="#3a3050" opacity="0.73" transform="rotate(145 1121.5 702.4)"/>
<rect x="798.4" y="452.0" width="6.3" height="4.6" fill="#d8e0f0" opacity="0.79" transform="rotate(155 798.4 452.0)"/>
<rect x="809.8" y="671.6" width="9.3" height="3.1" fill="#f8f0e0" opacity="0.86" transform="rotate(39 809.8 671.6)"/>
<rect x="1372.6" y="120.8" width="8.4" height="4.7" fill="#f8f0e0" opacity="0.80" transform="rotate(13 1372.6 120.8)"/>
<rect x="905.9" y="685.3" width="6.7" height="4.3" fill="#3a3050" opacity="0.90" transform="rotate(35 905.9 685.3)"/>
<rect x="921.6" y="84.7" width="11.7" height="4.3" fill="#d8e0f0" opacity="0.94" transform="rotate(129 921.6 84.7)"/>
<rect x="1063.3" y="63.6" width="10.2" height="3.7" fill="#e8d0d8" opacity="0.78" transform="rotate(29 1063.3 63.6)"/>
<rect x="686.6" y="253.6" width="8.6" height="4.5" fill="#ffffff" opacity="0.81" transform="rotate(26 686.6 253.6)"/>
<rect x="879.8" y="635.4" width="7.5" height="3.7" fill="#e0a0a0" opacity="0.62" transform="rotate(158 879.8 635.4)"/>
<rect x="899.8" y="470.8" width="10.3" height="3.8" fill="#f0e0e8" opacity="0.77" transform="rotate(88 899.8 470.8)"/>
<rect x="995.0" y="241.3" width="7.9" height="4.0" fill="#ffffff" opacity="0.80" transform="rotate(135 995.0 241.3)"/>
<rect x="819.7" y="758.7" width="6.3" height="3.3" fill="#f4ecf0" opacity="0.65" transform="rotate(121 819.7 758.7)"/>
<rect x="659.2" y="209.6" width="9.0" height="3.6" fill="#f0e0e8" opacity="0.63" transform="rotate(2 659.2 209.6)"/>
<rect x="931.2" y="350.7" width="7.0" height="3.7" fill="#f4ecf0" opacity="1.00" transform="rotate(110 931.2 350.7)"/>
<rect x="836.6" y="279.5" width="6.7" height="4.8" fill="#f0e0e8" opacity="0.95" transform="rotate(177 836.6 279.5)"/>
<rect x="813.7" y="543.0" width="6.9" height="4.5" fill="#2a2844" opacity="0.83" transform="rotate(126 813.7 543.0)"/>
<rect x="1368.0" y="721.2" width="10.1" height="4.6" fill="#ffffff" opacity="0.96" transform="rotate(47 1368.0 721.2)"/>
<rect x="972.0" y="199.0" width="6.8" height="3.4" fill="#e8d0d8" opacity="0.94" transform="rotate(76 972.0 199.0)"/>
<rect x="1208.3" y="134.0" width="10.8" height="4.7" fill="#3a3050" opacity="0.86" transform="rotate(87 1208.3 134.0)"/>
<rect x="877.4" y="16.1" width="11.1" height="3.3" fill="#3a3050" opacity="0.75" transform="rotate(107 877.4 16.1)"/>
<rect x="1036.9" y="151.5" width="8.9" height="3.8" fill="#a0d0c0" opacity="0.99" transform="rotate(139 1036.9 151.5)"/>
<rect x="1049.4" y="677.3" width="9.6" height="3.8" fill="#e0a0a0" opacity="0.76" transform="rotate(68 1049.4 677.3)"/>
<rect x="890.7" y="336.5" width="11.3" height="3.2" fill="#ffffff" opacity="0.98" transform="rotate(3 890.7 336.5)"/>
<rect x="1056.5" y="173.4" width="11.9" height="3.3" fill="#d8e0f0" opacity="0.69" transform="rotate(103 1056.5 173.4)"/>
<rect x="834.2" y="447.7" width="9.9" height="3.9" fill="#d8e0f0" opacity="0.90" transform="rotate(128 834.2 447.7)"/>
<rect x="1016.3" y="568.3" width="6.3" height="3.7" fill="#f0e0e8" opacity="0.69" transform="rotate(102 1016.3 568.3)"/>
<rect x="998.1" y="118.5" width="7.4" height="4.6" fill="#3a3050" opacity="0.68" transform="rotate(172 998.1 118.5)"/>
<rect x="1108.5" y="611.5" width="6.4" height="5.0" fill="#e0a0a0" opacity="0.74" transform="rotate(118 1108.5 611.5)"/>
<rect x="1076.5" y="250.2" width="7.8" height="3.4" fill="#e0a0a0" opacity="0.89" transform="rotate(48 1076.5 250.2)"/>
<rect x="850.5" y="194.9" width="8.9" height="3.9" fill="#f0e0e8" opacity="0.69" transform="rotate(5 850.5 194.9)"/>
<rect x="1114.2" y="747.1" width="8.4" height="4.1" fill="#e8d0d8" opacity="0.95" transform="rotate(9 1114.2 747.1)"/>
<rect x="1303.6" y="643.8" width="8.6" height="4.7" fill="#f0e0e8" opacity="0.61" transform="rotate(137 1303.6 643.8)"/>
<rect x="1124.4" y="213.9" width="8.9" height="4.8" fill="#2a2844" opacity="0.83" transform="rotate(18 1124.4 213.9)"/>
<rect x="1095.1" y="620.8" width="6.4" height="3.8" fill="#d8e0f0" opacity="0.64" transform="rotate(132 1095.1 620.8)"/>
<rect x="1198.5" y="620.7" width="8.3" height="4.3" fill="#3a3050" opacity="0.86" transform="rotate(7 1198.5 620.7)"/>
<rect x="1083.8" y="544.6" width="10.0" height="3.7" fill="#3a3050" opacity="0.74" transform="rotate(7 1083.8 544.6)"/>
<rect x="892.1" y="527.1" width="9.4" height="4.2" fill="#3a3050" opacity="0.93" transform="rotate(25 892.1 527.1)"/>
<rect x="939.2" y="330.0" width="10.2" height="3.7" fill="#f8f0e0" opacity="0.96" transform="rotate(90 939.2 330.0)"/>
<rect x="924.3" y="638.3" width="8.3" height="4.9" fill="#f0e0e8" opacity="0.87" transform="rotate(163 924.3 638.3)"/>
<rect x="813.5" y="280.1" width="8.1" height="4.3" fill="#e0a0a0" opacity="0.65" transform="rotate(76 813.5 280.1)"/>
<rect x="862.7" y="304.2" width="9.6" height="3.7" fill="#f0e0e8" opacity="0.96" transform="rotate(109 862.7 304.2)"/>
<rect x="1115.7" y="338.3" width="9.8" height="3.6" fill="#e0a0a0" opacity="0.89" transform="rotate(166 1115.7 338.3)"/>
<rect x="986.9" y="680.8" width="7.9" height="3.9" fill="#3a3050" opacity="0.69" transform="rotate(103 986.9 680.8)"/>
<rect x="1161.1" y="565.1" width="7.4" height="4.7" fill="#e0a0a0" opacity="0.71" transform="rotate(121 1161.1 565.1)"/>
<rect x="776.0" y="625.2" width="8.1" height="4.0" fill="#3a3050" opacity="0.67" transform="rotate(84 776.0 625.2)"/>
<rect x="1137.9" y="313.3" width="11.0" height="3.9" fill="#e8d0d8" opacity="0.77" transform="rotate(147 1137.9 313.3)"/>
<rect x="1155.1" y="398.5" width="6.7" height="4.9" fill="#e8d0d8" opacity="0.95" transform="rotate(134 1155.1 398.5)"/>
<rect x="1278.3" y="653.3" width="7.0" height="3.2" fill="#e0a0a0" opacity="0.93" transform="rotate(41 1278.3 653.3)"/>
<rect x="1073.7" y="623.2" width="8.2" height="4.4" fill="#2a2844" opacity="0.71" transform="rotate(39 1073.7 623.2)"/>
<rect x="1064.5" y="333.3" width="6.7" height="4.4" fill="#f8f0e0" opacity="0.90" transform="rotate(125 1064.5 333.3)"/>
<rect x="1036.7" y="442.9" width="10.3" height="4.1" fill="#3a3050" opacity="0.93" transform="rotate(167 1036.7 442.9)"/>
<rect x="1043.1" y="713.5" width="7.5" height="4.1" fill="#3a3050" opacity="0.90" transform="rotate(81 1043.1 713.5)"/>
<rect x="936.2" y="261.9" width="6.3" height="4.6" fill="#d8e0f0" opacity="0.89" transform="rotate(176 936.2 261.9)"/>
<rect x="874.9" y="749.0" width="6.9" height="4.0" fill="#d8e0f0" opacity="0.75" transform="rotate(88 874.9 749.0)"/>
<rect x="984.9" y="161.3" width="11.0" height="3.5" fill="#f0e0e8" opacity="0.71" transform="rotate(130 984.9 161.3)"/>
<rect x="1202.0" y="523.6" width="7.8" height="3.9" fill="#a0d0c0" opacity="0.81" transform="rotate(120 1202.0 523.6)"/>
<rect x="945.8" y="615.2" width="7.5" height="4.8" fill="#f0e0e8" opacity="0.70" transform="rotate(97 945.8 615.2)"/>
<rect x="1324.4" y="202.6" width="9.0" height="4.0" fill="#e0a0a0" opacity="0.65" transform="rotate(136 1324.4 202.6)"/>
<rect x="955.5" y="745.6" width="9.1" height="3.1" fill="#ffffff" opacity="0.65" transform="rotate(134 955.5 745.6)"/>
<rect x="1208.4" y="435.6" width="8.3" height="3.3" fill="#f4ecf0" opacity="0.73" transform="rotate(65 1208.4 435.6)"/>
<rect x="715.2" y="728.3" width="6.1" height="4.1" fill="#e0a0a0" opacity="0.81" transform="rotate(102 715.2 728.3)"/>
<rect x="1147.1" y="261.2" width="10.6" height="3.9" fill="#ffffff" opacity="1.00" transform="rotate(129 1147.1 261.2)"/>
<rect x="786.8" y="390.3" width="9.0" height="4.2" fill="#2a2844" opacity="0.97" transform="rotate(75 786.8 390.3)"/>
<rect x="816.3" y="551.5" width="11.3" height="4.5" fill="#d8e0f0" opacity="0.86" transform="rotate(42 816.3 551.5)"/>
<rect x="987.3" y="184.7" width="7.9" height="4.6" fill="#f0e0e8" opacity="0.80" transform="rotate(33 987.3 184.7)"/>
<rect x="931.7" y="53.3" width="9.8" height="3.8" fill="#ffffff" opacity="0.89" transform="rotate(137 931.7 53.3)"/>
<rect x="925.0" y="324.4" width="7.8" height="4.5" fill="#a0d0c0" opacity="0.61" transform="rotate(43 925.0 324.4)"/>
<rect x="900.0" y="556.6" width="8.3" height="4.4" fill="#ffffff" opacity="0.87" transform="rotate(136 900.0 556.6)"/>
<rect x="833.4" y="543.3" width="7.9" height="3.2" fill="#e0a0a0" opacity="0.81" transform="rotate(41 833.4 543.3)"/>
<rect x="1052.6" y="372.2" width="7.4" height="4.5" fill="#f0e0e8" opacity="0.84" transform="rotate(3 1052.6 372.2)"/>
<rect x="1159.4" y="749.7" width="8.4" height="4.0" fill="#ffffff" opacity="0.64" transform="rotate(25 1159.4 749.7)"/>
<rect x="845.2" y="710.2" width="9.2" height="3.3" fill="#d8e0f0" opacity="0.95" transform="rotate(74 845.2 710.2)"/>
<rect x="1066.5" y="414.7" width="10.3" height="3.4" fill="#e8d0d8" opacity="0.77" transform="rotate(109 1066.5 414.7)"/>
<rect x="886.1" y="499.9" width="9.3" height="4.8" fill="#ffffff" opacity="0.84" transform="rotate(10 886.1 499.9)"/>
<rect x="868.7" y="529.2" width="9.4" height="3.7" fill="#f0e0e8" opacity="0.67" transform="rotate(47 868.7 529.2)"/>
<rect x="853.7" y="663.7" width="7.4" height="3.3" fill="#f4ecf0" opacity="0.91" transform="rotate(100 853.7 663.7)"/>
<rect x="729.6" y="563.7" width="7.0" height="4.3" fill="#f4ecf0" opacity="0.71" transform="rotate(38 729.6 563.7)"/>
<rect x="904.8" y="633.5" width="6.8" height="3.8" fill="#ffffff" opacity="0.72" transform="rotate(150 904.8 633.5)"/>
<rect x="684.2" y="553.4" width="8.5" height="4.6" fill="#e0a0a0" opacity="0.62" transform="rotate(45 684.2 553.4)"/>
<rect x="984.6" y="662.9" width="6.8" height="4.1" fill="#3a3050" opacity="0.64" transform="rotate(53 984.6 662.9)"/>
<rect x="912.6" y="696.7" width="9.5" height="3.4" fill="#d8e0f0" opacity="0.83" transform="rotate(83 912.6 696.7)"/>
<rect x="938.2" y="544.8" width="8.3" height="4.7" fill="#3a3050" opacity="0.80" transform="rotate(129 938.2 544.8)"/>
<rect x="884.1" y="221.5" width="10.8" height="3.8" fill="#2a2844" opacity="0.83" transform="rotate(21 884.1 221.5)"/>
<rect x="883.5" y="679.3" width="11.7" height="3.7" fill="#a0d0c0" opacity="0.77" transform="rotate(3 883.5 679.3)"/>
<rect x="977.9" y="139.3" width="7.9" height="4.1" fill="#f0e0e8" opacity="0.95" transform="rotate(179 977.9 139.3)"/>
<rect x="1117.9" y="451.8" width="9.6" height="4.8" fill="#a0d0c0" opacity="0.62" transform="rotate(36 1117.9 451.8)"/>
<rect x="1034.3" y="598.0" width="9.5" height="4.9" fill="#2a2844" opacity="0.83" transform="rotate(64 1034.3 598.0)"/>
<rect x="798.7" y="693.1" width="7.8" height="3.4" fill="#ffffff" opacity="0.88" transform="rotate(126 798.7 693.1)"/>
<rect x="900.9" y="484.9" width="9.2" height="4.5" fill="#f8f0e0" opacity="0.90" transform="rotate(9 900.9 484.9)"/>
<rect x="1428.3" y="659.6" width="7.3" height="3.9" fill="#e0a0a0" opacity="0.72" transform="rotate(149 1428.3 659.6)"/>
<rect x="1103.8" y="694.4" width="11.7" height="4.8" fill="#ffffff" opacity="0.91" transform="rotate(49 1103.8 694.4)"/>
<rect x="1262.0" y="601.0" width="12.0" height="3.7" fill="#2a2844" opacity="0.75" transform="rotate(48 1262.0 601.0)"/>
<rect x="968.1" y="664.8" width="11.4" height="4.6" fill="#f4ecf0" opacity="0.72" transform="rotate(102 968.1 664.8)"/>
<rect x="657.1" y="341.9" width="6.1" height="4.2" fill="#3a3050" opacity="0.81" transform="rotate(158 657.1 341.9)"/>
<rect x="903.6" y="690.6" width="10.1" height="3.6" fill="#d8e0f0" opacity="0.67" transform="rotate(19 903.6 690.6)"/>
<rect x="1175.4" y="611.4" width="11.3" height="3.4" fill="#ffffff" opacity="0.68" transform="rotate(75 1175.4 611.4)"/>
<rect x="736.9" y="470.3" width="7.3" height="4.7" fill="#e0a0a0" opacity="0.93" transform="rotate(175 736.9 470.3)"/>
<rect x="686.2" y="753.1" width="6.0" height="3.8" fill="#a0d0c0" opacity="0.64" transform="rotate(157 686.2 753.1)"/>
<rect x="951.5" y="287.0" width="11.7" height="3.8" fill="#ffffff" opacity="0.73" transform="rotate(144 951.5 287.0)"/>
<rect x="687.9" y="267.3" width="6.6" height="4.1" fill="#d8e0f0" opacity="0.71" transform="rotate(30 687.9 267.3)"/>
<rect x="1028.3" y="745.2" width="6.1" height="4.0" fill="#2a2844" opacity="0.86" transform="rotate(118 1028.3 745.2)"/>
<rect x="694.2" y="266.8" width="7.3" height="3.2" fill="#f0e0e8" opacity="0.62" transform="rotate(51 694.2 266.8)"/>
<rect x="1278.0" y="220.8" width="11.7" height="3.6" fill="#d8e0f0" opacity="0.95" transform="rotate(111 1278.0 220.8)"/>
<rect x="1144.1" y="685.9" width="10.0" height="3.9" fill="#f0e0e8" opacity="0.87" transform="rotate(135 1144.1 685.9)"/>
<rect x="1139.6" y="242.2" width="7.3" height="3.0" fill="#e8d0d8" opacity="0.85" transform="rotate(48 1139.6 242.2)"/>
<rect x="1145.3" y="675.9" width="8.4" height="3.1" fill="#2a2844" opacity="0.69" transform="rotate(10 1145.3 675.9)"/>
<rect x="1100.4" y="448.0" width="9.5" height="4.2" fill="#2a2844" opacity="0.61" transform="rotate(51 1100.4 448.0)"/>
<rect x="670.5" y="515.7" width="8.0" height="4.3" fill="#a0d0c0" opacity="0.97" transform="rotate(82 670.5 515.7)"/>
<rect x="1160.3" y="494.8" width="7.4" height="4.9" fill="#f0e0e8" opacity="0.86" transform="rotate(53 1160.3 494.8)"/>
<rect x="827.3" y="131.0" width="10.7" height="4.1" fill="#ffffff" opacity="1.00" transform="rotate(15 827.3 131.0)"/>
<rect x="993.1" y="129.5" width="9.0" height="3.0" fill="#e8d0d8" opacity="0.98" transform="rotate(12 993.1 129.5)"/>
<rect x="1333.2" y="338.7" width="6.8" height="4.3" fill="#f8f0e0" opacity="0.76" transform="rotate(137 1333.2 338.7)"/>
<rect x="806.7" y="252.3" width="8.5" height="3.0" fill="#e8d0d8" opacity="0.71" transform="rotate(43 806.7 252.3)"/>
<rect x="1152.3" y="676.5" width="6.5" height="3.6" fill="#f4ecf0" opacity="0.79" transform="rotate(71 1152.3 676.5)"/>
<rect x="1010.0" y="32.6" width="8.3" height="3.4" fill="#a0d0c0" opacity="0.86" transform="rotate(40 1010.0 32.6)"/>
<rect x="721.2" y="442.2" width="7.3" height="3.1" fill="#d8e0f0" opacity="0.87" transform="rotate(155 721.2 442.2)"/>
<rect x="976.2" y="735.5" width="6.7" height="4.4" fill="#d8e0f0" opacity="0.65" transform="rotate(139 976.2 735.5)"/>
<rect x="618.4" y="690.0" width="11.5" height="4.6" fill="#e8d0d8" opacity="0.74" transform="rotate(51 618.4 690.0)"/>
<rect x="1137.7" y="242.8" width="9.8" height="4.7" fill="#ffffff" opacity="0.80" transform="rotate(89 1137.7 242.8)"/>
<rect x="996.6" y="271.4" width="7.4" height="3.5" fill="#e8d0d8" opacity="0.91" transform="rotate(157 996.6 271.4)"/>
<rect x="1214.2" y="592.0" width="8.9" height="4.7" fill="#e0a0a0" opacity="0.69" transform="rotate(145 1214.2 592.0)"/>
<rect x="921.2" y="386.5" width="9.8" height="4.1" fill="#ffffff" opacity="0.67" transform="rotate(49 921.2 386.5)"/>
<rect x="799.9" y="392.8" width="8.9" height="3.6" fill="#ffffff" opacity="0.95" transform="rotate(41 799.9 392.8)"/>
<rect x="1087.6" y="715.9" width="10.7" height="4.5" fill="#f8f0e0" opacity="0.83" transform="rotate(17 1087.6 715.9)"/>
<rect x="984.9" y="183.4" width="10.4" height="4.4" fill="#e8d0d8" opacity="0.77" transform="rotate(64 984.9 183.4)"/>
<rect x="761.4" y="605.2" width="6.7" height="3.6" fill="#a0d0c0" opacity="0.78" transform="rotate(50 761.4 605.2)"/>
<rect x="659.5" y="430.8" width="7.8" height="4.6" fill="#3a3050" opacity="0.99" transform="rotate(147 659.5 430.8)"/>
<rect x="1060.2" y="403.0" width="10.7" height="4.5" fill="#d8e0f0" opacity="0.60" transform="rotate(41 1060.2 403.0)"/>
<rect x="1119.7" y="325.1" width="6.3" height="4.0" fill="#ffffff" opacity="0.71" transform="rotate(161 1119.7 325.1)"/>
<rect x="1005.6" y="452.9" width="10.0" height="4.2" fill="#ffffff" opacity="0.81" transform="rotate(174 1005.6 452.9)"/>
<rect x="1092.8" y="315.6" width="11.0" height="4.8" fill="#3a3050" opacity="1.00" transform="rotate(117 1092.8 315.6)"/>
<rect x="1052.6" y="357.8" width="10.8" height="4.2" fill="#ffffff" opacity="0.75" transform="rotate(70 1052.6 357.8)"/>
<rect x="784.6" y="135.8" width="9.6" height="4.4" fill="#2a2844" opacity="0.76" transform="rotate(45 784.6 135.8)"/>
<rect x="1030.5" y="306.5" width="10.3" height="3.9" fill="#e8d0d8" opacity="0.69" transform="rotate(71 1030.5 306.5)"/>
<rect x="980.9" y="249.5" width="8.7" height="4.9" fill="#2a2844" opacity="0.85" transform="rotate(61 980.9 249.5)"/>
<rect x="902.3" y="511.1" width="8.2" height="4.4" fill="#2a2844" opacity="0.77" transform="rotate(87 902.3 511.1)"/>
<rect x="947.6" y="301.0" width="6.5" height="4.3" fill="#e0a0a0" opacity="1.00" transform="rotate(92 947.6 301.0)"/>
<rect x="998.0" y="509.0" width="11.9" height="3.4" fill="#a0d0c0" opacity="0.83" transform="rotate(1 998.0 509.0)"/>
<rect x="798.4" y="260.6" width="10.8" height="4.7" fill="#e0a0a0" opacity="0.83" transform="rotate(50 798.4 260.6)"/>
<rect x="842.0" y="243.6" width="11.6" height="3.7" fill="#3a3050" opacity="0.63" transform="rotate(58 842.0 243.6)"/>
<rect x="840.1" y="420.3" width="7.8" height="4.0" fill="#ffffff" opacity="0.72" transform="rotate(17 840.1 420.3)"/>
<rect x="775.0" y="237.9" width="7.8" height="3.5" fill="#f0e0e8" opacity="0.95" transform="rotate(34 775.0 237.9)"/>
<rect x="1169.0" y="480.8" width="11.5" height="4.2" fill="#2a2844" opacity="0.81" transform="rotate(172 1169.0 480.8)"/>
<rect x="1104.0" y="631.0" width="6.2" height="3.8" fill="#f4ecf0" opacity="0.82" transform="rotate(125 1104.0 631.0)"/>
<rect x="895.0" y="483.7" width="7.3" height="3.5" fill="#f4ecf0" opacity="0.81" transform="rotate(138 895.0 483.7)"/>
<rect x="1019.9" y="547.1" width="11.7" height="3.3" fill="#3a3050" opacity="0.84" transform="rotate(52 1019.9 547.1)"/>
<rect x="1074.8" y="506.2" width="6.4" height="3.7" fill="#f4ecf0" opacity="0.66" transform="rotate(114 1074.8 506.2)"/>
<rect x="755.4" y="380.4" width="7.7" height="3.3" fill="#2a2844" opacity="0.94" transform="rotate(44 755.4 380.4)"/>
<rect x="811.3" y="252.7" width="6.7" height="4.2" fill="#ffffff" opacity="0.97" transform="rotate(0 811.3 252.7)"/>
<rect x="839.4" y="393.1" width="11.5" height="3.5" fill="#f8f0e0" opacity="0.83" transform="rotate(22 839.4 393.1)"/>
<rect x="1113.9" y="346.0" width="8.1" height="3.6" fill="#f4ecf0" opacity="0.99" transform="rotate(91 1113.9 346.0)"/>
<rect x="959.5" y="541.5" width="11.9" height="3.5" fill="#f8f0e0" opacity="0.94" transform="rotate(117 959.5 541.5)"/>
<rect x="1071.7" y="302.1" width="6.2" height="4.9" fill="#f0e0e8" opacity="0.98" transform="rotate(37 1071.7 302.1)"/>
<rect x="928.2" y="461.6" width="7.0" height="4.8" fill="#2a2844" opacity="0.73" transform="rotate(176 928.2 461.6)"/>
<rect x="929.6" y="311.0" width="6.2" height="4.5" fill="#d8e0f0" opacity="0.83" transform="rotate(18 929.6 311.0)"/>
<rect x="866.5" y="265.0" width="6.7" height="4.8" fill="#d8e0f0" opacity="0.89" transform="rotate(125 866.5 265.0)"/>
<rect x="1047.9" y="287.7" width="9.6" height="3.8" fill="#d8e0f0" opacity="0.69" transform="rotate(165 1047.9 287.7)"/>
<rect x="581.0" y="356.1" width="7.5" height="3.7" fill="#ffffff" opacity="0.66" transform="rotate(15 581.0 356.1)"/>
<rect x="1130.8" y="695.0" width="7.8" height="4.6" fill="#f0e0e8" opacity="0.70" transform="rotate(104 1130.8 695.0)"/>
<rect x="1007.5" y="178.8" width="9.7" height="4.2" fill="#ffffff" opacity="0.67" transform="rotate(38 1007.5 178.8)"/>
<rect x="1124.6" y="72.2" width="8.9" height="5.0" fill="#3a3050" opacity="0.60" transform="rotate(178 1124.6 72.2)"/>
<rect x="1115.4" y="437.3" width="6.1" height="3.7" fill="#f8f0e0" opacity="0.86" transform="rotate(158 1115.4 437.3)"/>
<rect x="826.8" y="371.1" width="9.3" height="5.0" fill="#e8d0d8" opacity="0.96" transform="rotate(96 826.8 371.1)"/>
<rect x="1057.2" y="564.5" width="9.8" height="4.7" fill="#ffffff" opacity="0.92" transform="rotate(97 1057.2 564.5)"/>
<rect x="881.2" y="372.0" width="10.6" height="3.8" fill="#e8d0d8" opacity="0.75" transform="rotate(42 881.2 372.0)"/>
<rect x="1003.5" y="673.5" width="7.5" height="4.5" fill="#ffffff" opacity="0.85" transform="rotate(179 1003.5 673.5)"/>
<rect x="1080.8" y="470.4" width="11.2" height="3.9" fill="#a0d0c0" opacity="0.64" transform="rotate(31 1080.8 470.4)"/>
<rect x="905.0" y="438.3" width="6.0" height="3.8" fill="#2a2844" opacity="0.88" transform="rotate(68 905.0 438.3)"/>
<rect x="1196.5" y="479.8" width="6.9" height="3.0" fill="#d8e0f0" opacity="0.67" transform="rotate(95 1196.5 479.8)"/>
<rect x="987.7" y="80.3" width="10.5" height="3.2" fill="#ffffff" opacity="0.96" transform="rotate(119 987.7 80.3)"/>
<rect x="756.9" y="247.3" width="8.7" height="4.8" fill="#e8d0d8" opacity="0.85" transform="rotate(99 756.9 247.3)"/>
<rect x="1378.0" y="613.4" width="7.6" height="4.4" fill="#ffffff" opacity="0.94" transform="rotate(104 1378.0 613.4)"/>
<rect x="869.9" y="705.7" width="9.2" height="4.1" fill="#3a3050" opacity="0.90" transform="rotate(91 869.9 705.7)"/>
<rect x="969.3" y="23.3" width="7.9" height="4.9" fill="#3a3050" opacity="0.61" transform="rotate(170 969.3 23.3)"/>
<rect x="1335.5" y="709.1" width="11.8" height="3.5" fill="#f8f0e0" opacity="0.71" transform="rotate(67 1335.5 709.1)"/>
<rect x="1036.1" y="566.5" width="11.3" height="3.8" fill="#e8d0d8" opacity="0.77" transform="rotate(34 1036.1 566.5)"/>
<rect x="1147.8" y="314.1" width="9.3" height="3.2" fill="#2a2844" opacity="0.96" transform="rotate(81 1147.8 314.1)"/>
<rect x="951.1" y="690.2" width="10.4" height="4.1" fill="#2a2844" opacity="0.89" transform="rotate(92 951.1 690.2)"/>
<rect x="1234.6" y="551.5" width="11.2" height="3.4" fill="#a0d0c0" opacity="0.79" transform="rotate(136 1234.6 551.5)"/>
<rect x="1007.8" y="499.6" width="7.8" height="4.3" fill="#f4ecf0" opacity="0.95" transform="rotate(159 1007.8 499.6)"/>
<rect x="932.0" y="719.0" width="7.8" height="3.5" fill="#f0e0e8" opacity="0.67" transform="rotate(151 932.0 719.0)"/>
<rect x="1060.6" y="739.1" width="9.5" height="3.5" fill="#3a3050" opacity="0.63" transform="rotate(136 1060.6 739.1)"/>
<rect x="1270.9" y="587.8" width="9.4" height="3.6" fill="#a0d0c0" opacity="0.86" transform="rotate(156 1270.9 587.8)"/>
<rect x="848.8" y="565.2" width="7.2" height="4.8" fill="#f8f0e0" opacity="0.74" transform="rotate(119 848.8 565.2)"/>
<rect x="1187.8" y="656.4" width="11.8" height="3.3" fill="#d8e0f0" opacity="0.67" transform="rotate(100 1187.8 656.4)"/>
<rect x="953.4" y="459.7" width="11.0" height="4.8" fill="#f8f0e0" opacity="0.67" transform="rotate(95 953.4 459.7)"/>
<rect x="1063.5" y="550.2" width="8.0" height="3.9" fill="#f0e0e8" opacity="0.76" transform="rotate(74 1063.5 550.2)"/>
<rect x="1137.1" y="487.0" width="11.9" height="4.4" fill="#2a2844" opacity="0.96" transform="rotate(33 1137.1 487.0)"/>
<rect x="1083.4" y="701.1" width="6.8" height="4.7" fill="#f4ecf0" opacity="0.92" transform="rotate(97 1083.4 701.1)"/>
<rect x="1096.4" y="738.5" width="8.2" height="4.6" fill="#ffffff" opacity="0.98" transform="rotate(59 1096.4 738.5)"/>
<rect x="443.4" y="569.8" width="6.1" height="3.3" fill="#f8f0e0" opacity="0.84" transform="rotate(140 443.4 569.8)"/>
<rect x="1049.8" y="131.6" width="10.6" height="4.3" fill="#ffffff" opacity="0.92" transform="rotate(129 1049.8 131.6)"/>
<rect x="863.9" y="688.5" width="10.4" height="4.1" fill="#ffffff" opacity="0.87" transform="rotate(164 863.9 688.5)"/>
<rect x="1048.3" y="519.8" width="10.0" height="3.8" fill="#3a3050" opacity="0.64" transform="rotate(8 1048.3 519.8)"/>
<rect x="1247.5" y="89.3" width="10.5" height="3.1" fill="#2a2844" opacity="0.71" transform="rotate(177 1247.5 89.3)"/>
<rect x="811.3" y="65.2" width="8.4" height="3.6" fill="#d8e0f0" opacity="0.93" transform="rotate(101 811.3 65.2)"/>
<rect x="911.2" y="495.1" width="9.5" height="3.7" fill="#f4ecf0" opacity="0.85" transform="rotate(135 911.2 495.1)"/>
<rect x="822.7" y="532.5" width="8.0" height="3.3" fill="#f4ecf0" opacity="0.88" transform="rotate(20 822.7 532.5)"/>
<rect x="947.7" y="247.8" width="9.9" height="4.4" fill="#a0d0c0" opacity="0.99" transform="rotate(32 947.7 247.8)"/>
<rect x="1054.5" y="408.9" width="9.4" height="3.7" fill="#d8e0f0" opacity="0.91" transform="rotate(167 1054.5 408.9)"/>
<rect x="896.5" y="342.3" width="9.7" height="4.1" fill="#ffffff" opacity="0.96" transform="rotate(92 896.5 342.3)"/>
<rect x="1258.6" y="347.9" width="11.6" height="4.4" fill="#d8e0f0" opacity="0.76" transform="rotate(125 1258.6 347.9)"/>
<rect x="1066.5" y="396.2" width="11.3" height="3.8" fill="#f4ecf0" opacity="0.90" transform="rotate(73 1066.5 396.2)"/>
<rect x="722.2" y="365.8" width="11.0" height="3.8" fill="#d8e0f0" opacity="0.79" transform="rotate(36 722.2 365.8)"/>
<rect x="1138.9" y="452.2" width="10.4" height="3.2" fill="#f8f0e0" opacity="0.67" transform="rotate(172 1138.9 452.2)"/>
<rect x="920.7" y="535.7" width="7.0" height="4.0" fill="#2a2844" opacity="0.91" transform="rotate(149 920.7 535.7)"/>
<rect x="806.9" y="342.1" width="11.3" height="3.5" fill="#d8e0f0" opacity="0.94" transform="rotate(29 806.9 342.1)"/>
<rect x="1165.0" y="189.2" width="8.0" height="3.2" fill="#e0a0a0" opacity="0.83" transform="rotate(173 1165.0 189.2)"/>
<rect x="900.1" y="138.7" width="7.8" height="3.4" fill="#d8e0f0" opacity="0.89" transform="rotate(167 900.1 138.7)"/>
<rect x="1186.5" y="216.0" width="10.3" height="3.5" fill="#f0e0e8" opacity="0.81" transform="rotate(23 1186.5 216.0)"/>
<rect x="1218.7" y="719.5" width="11.0" height="4.3" fill="#f8f0e0" opacity="0.64" transform="rotate(101 1218.7 719.5)"/>
<rect x="774.2" y="694.7" width="8.7" height="3.5" fill="#f0e0e8" opacity="0.99" transform="rotate(67 774.2 694.7)"/>
<rect x="968.6" y="541.6" width="6.1" height="3.9" fill="#f0e0e8" opacity="0.90" transform="rotate(5 968.6 541.6)"/>
<rect x="991.1" y="309.6" width="6.9" height="4.7" fill="#f0e0e8" opacity="0.92" transform="rotate(78 991.1 309.6)"/>
<rect x="953.5" y="555.9" width="11.6" height="3.2" fill="#3a3050" opacity="0.70" transform="rotate(71 953.5 555.9)"/>
<rect x="854.3" y="736.4" width="7.8" height="4.8" fill="#f0e0e8" opacity="0.96" transform="rotate(150 854.3 736.4)"/>
<rect x="991.4" y="637.7" width="7.5" height="3.5" fill="#e0a0a0" opacity="0.82" transform="rotate(74 991.4 637.7)"/>
<rect x="932.6" y="335.5" width="8.6" height="4.9" fill="#2a2844" opacity="0.79" transform="rotate(167 932.6 335.5)"/>
<rect x="1099.4" y="16.1" width="9.5" height="4.7" fill="#3a3050" opacity="0.65" transform="rotate(59 1099.4 16.1)"/>
<rect x="916.8" y="436.0" width="11.4" height="3.2" fill="#f0e0e8" opacity="0.73" transform="rotate(149 916.8 436.0)"/>
<rect x="1126.1" y="206.7" width="10.6" height="3.2" fill="#2a2844" opacity="0.81" transform="rotate(25 1126.1 206.7)"/>
<rect x="1120.6" y="685.4" width="11.9" height="4.1" fill="#f0e0e8" opacity="0.88" transform="rotate(171 1120.6 685.4)"/>
<rect x="985.6" y="603.2" width="11.4" height="4.1" fill="#f0e0e8" opacity="0.68" transform="rotate(143 985.6 603.2)"/>
<rect x="541.1" y="405.9" width="7.1" height="4.4" fill="#ffffff" opacity="0.68" transform="rotate(167 541.1 405.9)"/>
<rect x="1145.2" y="327.4" width="8.1" height="3.6" fill="#d8e0f0" opacity="0.68" transform="rotate(85 1145.2 327.4)"/>
<rect x="1249.7" y="232.7" width="8.6" height="3.6" fill="#e8d0d8" opacity="0.66" transform="rotate(9 1249.7 232.7)"/>
<rect x="763.5" y="397.0" width="8.3" height="5.0" fill="#e0a0a0" opacity="0.64" transform="rotate(29 763.5 397.0)"/>
<rect x="882.6" y="563.2" width="8.7" height="3.4" fill="#ffffff" opacity="0.88" transform="rotate(7 882.6 563.2)"/>
<rect x="710.3" y="539.4" width="7.2" height="4.2" fill="#f4ecf0" opacity="0.69" transform="rotate(45 710.3 539.4)"/>
<rect x="876.2" y="655.9" width="10.2" height="3.4" fill="#a0d0c0" opacity="0.61" transform="rotate(8 876.2 655.9)"/>
<rect x="485.5" y="727.8" width="11.8" height="3.5" fill="#ffffff" opacity="0.71" transform="rotate(32 485.5 727.8)"/>
<rect x="847.3" y="629.6" width="7.1" height="4.0" fill="#a0d0c0" opacity="0.90" transform="rotate(97 847.3 629.6)"/>
<rect x="835.1" y="349.0" width="10.4" height="3.4" fill="#ffffff" opacity="0.74" transform="rotate(40 835.1 349.0)"/>
<rect x="941.5" y="613.8" width="10.1" height="4.4" fill="#f0e0e8" opacity="0.81" transform="rotate(79 941.5 613.8)"/>
<rect x="1223.4" y="513.9" width="11.1" height="3.5" fill="#d8e0f0" opacity="0.70" transform="rotate(84 1223.4 513.9)"/>
<rect x="965.0" y="539.8" width="6.7" height="3.3" fill="#ffffff" opacity="0.91" transform="rotate(106 965.0 539.8)"/>
<rect x="1032.2" y="306.5" width="8.7" height="4.8" fill="#3a3050" opacity="0.89" transform="rotate(54 1032.2 306.5)"/>
<rect x="813.1" y="212.5" width="11.2" height="4.8" fill="#f8f0e0" opacity="0.70" transform="rotate(27 813.1 212.5)"/>
<rect x="930.2" y="110.3" width="11.7" height="4.9" fill="#f0e0e8" opacity="0.83" transform="rotate(87 930.2 110.3)"/>
<rect x="763.3" y="759.9" width="11.7" height="3.2" fill="#d8e0f0" opacity="0.70" transform="rotate(60 763.3 759.9)"/>
<rect x="1047.6" y="596.6" width="8.5" height="4.3" fill="#3a3050" opacity="0.72" transform="rotate(121 1047.6 596.6)"/>
<rect x="1004.5" y="305.3" width="10.5" height="4.1" fill="#e8d0d8" opacity="0.81" transform="rotate(97 1004.5 305.3)"/>
<rect x="1108.4" y="190.2" width="7.3" height="3.2" fill="#d8e0f0" opacity="0.98" transform="rotate(61 1108.4 190.2)"/>
<rect x="773.9" y="580.7" width="11.7" height="4.8" fill="#2a2844" opacity="0.83" transform="rotate(161 773.9 580.7)"/>
<rect x="954.8" y="282.9" width="6.3" height="3.9" fill="#a0d0c0" opacity="0.99" transform="rotate(171 954.8 282.9)"/>
<rect x="1205.7" y="633.8" width="6.4" height="3.4" fill="#a0d0c0" opacity="0.90" transform="rotate(15 1205.7 633.8)"/>
<rect x="1140.7" y="751.2" width="10.2" height="4.6" fill="#e8d0d8" opacity="0.63" transform="rotate(32 1140.7 751.2)"/>
<rect x="1049.4" y="368.1" width="11.1" height="3.0" fill="#a0d0c0" opacity="0.63" transform="rotate(63 1049.4 368.1)"/>
<rect x="1171.2" y="421.5" width="8.0" height="5.0" fill="#ffffff" opacity="0.64" transform="rotate(132 1171.2 421.5)"/>
<rect x="1211.5" y="451.4" width="6.6" height="4.7" fill="#3a3050" opacity="0.61" transform="rotate(57 1211.5 451.4)"/>
<rect x="1036.8" y="19.5" width="7.2" height="3.3" fill="#e0a0a0" opacity="0.98" transform="rotate(105 1036.8 19.5)"/>
<rect x="1124.8" y="688.8" width="9.0" height="4.7" fill="#a0d0c0" opacity="0.94" transform="rotate(131 1124.8 688.8)"/>
<rect x="1015.6" y="100.3" width="8.2" height="3.8" fill="#f0e0e8" opacity="0.98" transform="rotate(118 1015.6 100.3)"/>
<rect x="863.3" y="110.6" width="11.1" height="4.6" fill="#d8e0f0" opacity="0.75" transform="rotate(44 863.3 110.6)"/>
<rect x="1100.2" y="335.2" width="7.1" height="3.5" fill="#f0e0e8" opacity="0.84" transform="rotate(179 1100.2 335.2)"/>
<rect x="622.3" y="290.1" width="8.4" height="4.8" fill="#f0e0e8" opacity="0.83" transform="rotate(7 622.3 290.1)"/>
<rect x="1262.1" y="349.6" width="6.9" height="4.0" fill="#f4ecf0" opacity="0.72" transform="rotate(85 1262.1 349.6)"/>
<rect x="1006.1" y="626.5" width="11.3" height="3.3" fill="#d8e0f0" opacity="0.68" transform="rotate(22 1006.1 626.5)"/>
<rect x="974.4" y="378.3" width="11.4" height="4.4" fill="#ffffff" opacity="0.87" transform="rotate(150 974.4 378.3)"/>
<rect x="943.9" y="470.6" width="7.5" height="4.6" fill="#ffffff" opacity="0.92" transform="rotate(145 943.9 470.6)"/>
<rect x="789.7" y="605.7" width="9.0" height="3.0" fill="#ffffff" opacity="0.98" transform="rotate(6 789.7 605.7)"/>
<rect x="1229.1" y="342.5" width="11.3" height="4.8" fill="#e0a0a0" opacity="0.71" transform="rotate(141 1229.1 342.5)"/>
<rect x="801.7" y="448.1" width="9.4" height="4.2" fill="#f4ecf0" opacity="0.98" transform="rotate(55 801.7 448.1)"/>
<rect x="1028.1" y="466.3" width="8.8" height="3.1" fill="#2a2844" opacity="0.73" transform="rotate(178 1028.1 466.3)"/>
<rect x="1072.4" y="668.4" width="7.9" height="4.8" fill="#e8d0d8" opacity="0.87" transform="rotate(56 1072.4 668.4)"/>
<rect x="1069.3" y="716.0" width="12.0" height="4.0" fill="#3a3050" opacity="0.70" transform="rotate(107 1069.3 716.0)"/>
<rect x="633.9" y="552.2" width="8.2" height="3.0" fill="#e8d0d8" opacity="0.77" transform="rotate(151 633.9 552.2)"/>
<rect x="860.4" y="710.1" width="9.7" height="3.5" fill="#f4ecf0" opacity="0.73" transform="rotate(27 860.4 710.1)"/>
<rect x="950.3" y="67.9" width="10.1" height="4.9" fill="#a0d0c0" opacity="0.63" transform="rotate(60 950.3 67.9)"/>
<rect x="775.1" y="192.9" width="8.0" height="5.0" fill="#ffffff" opacity="0.78" transform="rotate(71 775.1 192.9)"/>
<rect x="585.7" y="508.1" width="8.8" height="4.5" fill="#d8e0f0" opacity="0.91" transform="rotate(71 585.7 508.1)"/>
<rect x="1313.2" y="440.6" width="10.7" height="4.3" fill="#e8d0d8" opacity="0.69" transform="rotate(40 1313.2 440.6)"/>
<rect x="1058.5" y="456.1" width="8.0" height="4.1" fill="#d8e0f0" opacity="0.91" transform="rotate(160 1058.5 456.1)"/>
<rect x="1013.2" y="674.6" width="11.7" height="3.3" fill="#a0d0c0" opacity="0.66" transform="rotate(153 1013.2 674.6)"/>
<rect x="792.5" y="424.2" width="11.4" height="3.3" fill="#f0e0e8" opacity="0.78" transform="rotate(83 792.5 424.2)"/>
<rect x="1035.1" y="426.6" width="12.0" height="4.4" fill="#2a2844" opacity="0.69" transform="rotate(20 1035.1 426.6)"/>
<rect x="1140.3" y="740.9" width="9.6" height="4.6" fill="#e0a0a0" opacity="0.96" transform="rotate(116 1140.3 740.9)"/>
<rect x="789.1" y="545.5" width="9.2" height="3.5" fill="#f4ecf0" opacity="0.79" transform="rotate(113 789.1 545.5)"/>
<rect x="1061.5" y="505.4" width="9.5" height="3.5" fill="#f8f0e0" opacity="0.64" transform="rotate(93 1061.5 505.4)"/>
<rect x="944.4" y="318.3" width="6.7" height="4.2" fill="#e8d0d8" opacity="0.91" transform="rotate(127 944.4 318.3)"/>
<rect x="1188.4" y="327.1" width="11.6" height="3.6" fill="#e0a0a0" opacity="0.60" transform="rotate(72 1188.4 327.1)"/>
<rect x="784.9" y="690.6" width="10.0" height="4.1" fill="#d8e0f0" opacity="0.84" transform="rotate(160 784.9 690.6)"/>
<rect x="707.1" y="629.6" width="11.7" height="3.6" fill="#d8e0f0" opacity="0.75" transform="rotate(121 707.1 629.6)"/>
<rect x="1125.6" y="755.2" width="6.6" height="3.6" fill="#a0d0c0" opacity="0.80" transform="rotate(20 1125.6 755.2)"/>
<rect x="957.9" y="662.8" width="11.4" height="4.5" fill="#a0d0c0" opacity="0.98" transform="rotate(46 957.9 662.8)"/>
<rect x="1110.5" y="178.8" width="11.7" height="4.1" fill="#f8f0e0" opacity="1.00" transform="rotate(151 1110.5 178.8)"/>
<rect x="1013.9" y="286.3" width="9.0" height="4.9" fill="#d8e0f0" opacity="0.75" transform="rotate(141 1013.9 286.3)"/>
<rect x="1347.9" y="337.3" width="10.6" height="3.6" fill="#a0d0c0" opacity="0.85" transform="rotate(3 1347.9 337.3)"/>
<rect x="1355.5" y="526.1" width="6.8" height="3.2" fill="#e0a0a0" opacity="0.97" transform="rotate(62 1355.5 526.1)"/>
<rect x="1389.2" y="295.9" width="11.5" height="4.3" fill="#2a2844" opacity="0.86" transform="rotate(179 1389.2 295.9)"/>
<rect x="810.2" y="565.8" width="10.8" height="4.2" fill="#ffffff" opacity="0.85" transform="rotate(134 810.2 565.8)"/>
<rect x="1083.8" y="202.9" width="10.3" height="3.0" fill="#f8f0e0" opacity="0.63" transform="rotate(153 1083.8 202.9)"/>
<rect x="1068.2" y="645.7" width="11.1" height="3.5" fill="#ffffff" opacity="0.81" transform="rotate(53 1068.2 645.7)"/>
<rect x="835.1" y="398.3" width="10.6" height="5.0" fill="#f8f0e0" opacity="0.84" transform="rotate(75 835.1 398.3)"/>
<rect x="1049.1" y="431.0" width="8.9" height="3.9" fill="#e0a0a0" opacity="0.73" transform="rotate(5 1049.1 431.0)"/>
<rect x="669.5" y="210.0" width="9.6" height="3.5" fill="#e0a0a0" opacity="0.69" transform="rotate(90 669.5 210.0)"/>
<rect x="798.5" y="561.0" width="10.5" height="3.3" fill="#2a2844" opacity="0.72" transform="rotate(165 798.5 561.0)"/>
<rect x="1194.6" y="322.4" width="11.2" height="3.8" fill="#ffffff" opacity="0.65" transform="rotate(140 1194.6 322.4)"/>
<rect x="1040.3" y="451.5" width="7.7" height="4.9" fill="#f8f0e0" opacity="0.95" transform="rotate(39 1040.3 451.5)"/>
<rect x="1044.1" y="493.7" width="9.8" height="4.3" fill="#ffffff" opacity="0.60" transform="rotate(72 1044.1 493.7)"/>
<rect x="1279.5" y="381.7" width="6.1" height="4.0" fill="#f8f0e0" opacity="0.80" transform="rotate(46 1279.5 381.7)"/>
<rect x="1051.3" y="572.2" width="8.0" height="3.5" fill="#e8d0d8" opacity="0.79" transform="rotate(161 1051.3 572.2)"/>
<rect x="921.4" y="171.4" width="6.8" height="5.0" fill="#f8f0e0" opacity="0.74" transform="rotate(132 921.4 171.4)"/>
<rect x="1214.5" y="387.5" width="7.7" height="3.7" fill="#d8e0f0" opacity="0.67" transform="rotate(128 1214.5 387.5)"/>
<rect x="1082.7" y="181.4" width="7.3" height="4.8" fill="#2a2844" opacity="0.92" transform="rotate(60 1082.7 181.4)"/>
<rect x="1107.1" y="507.9" width="6.1" height="3.1" fill="#ffffff" opacity="0.89" transform="rotate(149 1107.1 507.9)"/>
<rect x="1167.0" y="381.6" width="6.9" height="4.4" fill="#e8d0d8" opacity="0.90" transform="rotate(37 1167.0 381.6)"/>
<rect x="1045.6" y="481.2" width="11.6" height="4.1" fill="#ffffff" opacity="0.82" transform="rotate(127 1045.6 481.2)"/>
<rect x="828.9" y="534.5" width="6.7" height="3.9" fill="#e0a0a0" opacity="0.89" transform="rotate(21 828.9 534.5)"/>
<rect x="1126.7" y="303.1" width="8.8" height="3.4" fill="#d8e0f0" opacity="0.74" transform="rotate(56 1126.7 303.1)"/>
<rect x="965.6" y="151.5" width="6.6" height="5.0" fill="#3a3050" opacity="0.97" transform="rotate(105 965.6 151.5)"/>
<rect x="946.5" y="146.1" width="11.1" height="5.0" fill="#ffffff" opacity="0.93" transform="rotate(2 946.5 146.1)"/>
<rect x="1123.5" y="502.0" width="10.1" height="4.6" fill="#f4ecf0" opacity="0.73" transform="rotate(120 1123.5 502.0)"/>
<rect x="976.3" y="422.6" width="11.7" height="3.2" fill="#d8e0f0" opacity="0.69" transform="rotate(113 976.3 422.6)"/>
<rect x="1119.7" y="734.7" width="9.2" height="4.8" fill="#f0e0e8" opacity="0.63" transform="rotate(96 1119.7 734.7)"/>
<rect x="1179.7" y="732.2" width="10.8" height="4.5" fill="#f0e0e8" opacity="0.96" transform="rotate(162 1179.7 732.2)"/>
<rect x="1143.4" y="379.9" width="10.4" height="4.8" fill="#f4ecf0" opacity="0.72" transform="rotate(140 1143.4 379.9)"/>
<rect x="1064.9" y="376.3" width="10.6" height="3.9" fill="#2a2844" opacity="0.82" transform="rotate(152 1064.9 376.3)"/>
<rect x="951.5" y="434.1" width="6.9" height="4.5" fill="#e8d0d8" opacity="0.73" transform="rotate(99 951.5 434.1)"/>
<rect x="974.0" y="625.8" width="6.9" height="3.4" fill="#f4ecf0" opacity="0.73" transform="rotate(124 974.0 625.8)"/>
<rect x="582.1" y="255.1" width="7.6" height="4.9" fill="#e0a0a0" opacity="0.98" transform="rotate(151 582.1 255.1)"/>
<rect x="840.4" y="580.3" width="8.0" height="3.9" fill="#3a3050" opacity="0.98" transform="rotate(3 840.4 580.3)"/>
<rect x="490.5" y="738.6" width="10.2" height="4.3" fill="#f0e0e8" opacity="0.78" transform="rotate(37 490.5 738.6)"/>
<rect x="759.3" y="264.9" width="7.9" height="3.6" fill="#e8d0d8" opacity="1.00" transform="rotate(152 759.3 264.9)"/>
<rect x="942.7" y="287.2" width="10.2" height="3.0" fill="#f0e0e8" opacity="0.63" transform="rotate(156 942.7 287.2)"/>
<rect x="843.4" y="664.9" width="10.3" height="3.9" fill="#f4ecf0" opacity="0.78" transform="rotate(30 843.4 664.9)"/>
<rect x="1009.8" y="479.2" width="10.4" height="4.1" fill="#e8d0d8" opacity="0.79" transform="rotate(26 1009.8 479.2)"/>
<rect x="1071.0" y="698.0" width="11.6" height="3.1" fill="#2a2844" opacity="0.81" transform="rotate(118 1071.0 698.0)"/>
<rect x="866.8" y="561.8" width="9.0" height="4.6" fill="#f4ecf0" opacity="0.78" transform="rotate(48 866.8 561.8)"/>
<rect x="1384.1" y="358.1" width="11.3" height="4.1" fill="#f8f0e0" opacity="0.95" transform="rotate(178 1384.1 358.1)"/>
<rect x="978.0" y="548.7" width="11.0" height="4.4" fill="#f8f0e0" opacity="0.63" transform="rotate(17 978.0 548.7)"/>
<rect x="841.6" y="542.8" width="8.3" height="3.5" fill="#e8d0d8" opacity="0.79" transform="rotate(164 841.6 542.8)"/>
<rect x="1163.1" y="335.2" width="10.4" height="4.7" fill="#2a2844" opacity="0.73" transform="rotate(133 1163.1 335.2)"/>
<rect x="826.6" y="618.2" width="11.7" height="3.7" fill="#ffffff" opacity="0.95" transform="rotate(155 826.6 618.2)"/>
<rect x="1189.4" y="661.0" width="11.8" height="4.0" fill="#ffffff" opacity="0.89" transform="rotate(2 1189.4 661.0)"/>
<rect x="1019.1" y="245.8" width="9.6" height="3.0" fill="#3a3050" opacity="0.95" transform="rotate(91 1019.1 245.8)"/>
<rect x="923.6" y="422.1" width="8.8" height="4.7" fill="#f0e0e8" opacity="0.71" transform="rotate(87 923.6 422.1)"/>
<rect x="1328.1" y="250.1" width="9.9" height="4.3" fill="#f8f0e0" opacity="0.88" transform="rotate(38 1328.1 250.1)"/>
<rect x="1022.1" y="258.4" width="9.3" height="4.5" fill="#2a2844" opacity="0.98" transform="rotate(116 1022.1 258.4)"/>
<rect x="1047.1" y="238.4" width="8.1" height="3.5" fill="#3a3050" opacity="0.83" transform="rotate(14 1047.1 238.4)"/>
<rect x="909.6" y="406.1" width="9.2" height="4.6" fill="#e8d0d8" opacity="0.79" transform="rotate(121 909.6 406.1)"/>
<rect x="914.3" y="304.9" width="9.5" height="3.5" fill="#f4ecf0" opacity="0.79" transform="rotate(62 914.3 304.9)"/>
<rect x="790.2" y="209.0" width="9.9" height="4.0" fill="#a0d0c0" opacity="0.90" transform="rotate(77 790.2 209.0)"/>
<rect x="1236.6" y="696.9" width="7.8" height="3.9" fill="#2a2844" opacity="0.97" transform="rotate(67 1236.6 696.9)"/>
<rect x="842.3" y="207.6" width="9.3" height="3.0" fill="#2a2844" opacity="0.68" transform="rotate(20 842.3 207.6)"/>
<rect x="1461.2" y="596.8" width="7.0" height="5.0" fill="#2a2844" opacity="0.92" transform="rotate(29 1461.2 596.8)"/>
<rect x="880.9" y="552.3" width="9.1" height="4.6" fill="#e0a0a0" opacity="0.84" transform="rotate(127 880.9 552.3)"/>
<rect x="991.8" y="580.8" width="7.9" height="3.1" fill="#a0d0c0" opacity="0.95" transform="rotate(41 991.8 580.8)"/>
<rect x="1156.4" y="546.6" width="7.0" height="3.6" fill="#e8d0d8" opacity="0.85" transform="rotate(174 1156.4 546.6)"/>
<rect x="938.0" y="693.7" width="11.2" height="3.1" fill="#f8f0e0" opacity="0.87" transform="rotate(94 938.0 693.7)"/>
<rect x="829.0" y="553.3" width="9.9" height="4.3" fill="#3a3050" opacity="0.83" transform="rotate(107 829.0 553.3)"/>
<rect x="1018.7" y="114.2" width="8.4" height="3.6" fill="#f8f0e0" opacity="0.93" transform="rotate(34 1018.7 114.2)"/>
<rect x="962.8" y="31.0" width="10.3" height="3.1" fill="#a0d0c0" opacity="0.89" transform="rotate(137 962.8 31.0)"/>
<rect x="1257.3" y="417.4" width="10.0" height="4.4" fill="#f8f0e0" opacity="0.75" transform="rotate(105 1257.3 417.4)"/>
<rect x="842.9" y="254.6" width="10.2" height="3.0" fill="#e8d0d8" opacity="0.80" transform="rotate(104 842.9 254.6)"/>
<rect x="853.2" y="116.0" width="11.5" height="3.3" fill="#2a2844" opacity="0.98" transform="rotate(101 853.2 116.0)"/>
<rect x="1023.8" y="552.9" width="6.4" height="4.5" fill="#a0d0c0" opacity="0.67" transform="rotate(92 1023.8 552.9)"/>
<rect x="557.0" y="449.2" width="10.4" height="3.3" fill="#2a2844" opacity="0.60" transform="rotate(19 557.0 449.2)"/>
<rect x="1555.7" y="679.8" width="10.2" height="4.7" fill="#ffffff" opacity="0.80" transform="rotate(103 1555.7 679.8)"/>
<rect x="845.0" y="565.4" width="8.9" height="3.1" fill="#f0e0e8" opacity="0.68" transform="rotate(35 845.0 565.4)"/>
<rect x="996.7" y="504.3" width="8.5" height="4.3" fill="#2a2844" opacity="0.69" transform="rotate(54 996.7 504.3)"/>
<rect x="911.4" y="518.6" width="9.9" height="3.8" fill="#f0e0e8" opacity="0.62" transform="rotate(106 911.4 518.6)"/>
<rect x="864.0" y="328.8" width="11.3" height="3.5" fill="#d8e0f0" opacity="0.89" transform="rotate(86 864.0 328.8)"/>
<rect x="1198.3" y="646.6" width="10.0" height="3.6" fill="#ffffff" opacity="0.92" transform="rotate(63 1198.3 646.6)"/>
<rect x="946.1" y="100.1" width="8.8" height="4.7" fill="#3a3050" opacity="0.70" transform="rotate(80 946.1 100.1)"/>
<rect x="1227.9" y="232.6" width="11.5" height="4.6" fill="#f4ecf0" opacity="0.89" transform="rotate(94 1227.9 232.6)"/>
<rect x="939.3" y="508.3" width="9.9" height="4.7" fill="#3a3050" opacity="0.77" transform="rotate(85 939.3 508.3)"/>
<rect x="656.4" y="747.9" width="8.6" height="4.6" fill="#d8e0f0" opacity="0.88" transform="rotate(42 656.4 747.9)"/>
<rect x="910.4" y="122.6" width="10.2" height="3.3" fill="#f8f0e0" opacity="0.85" transform="rotate(67 910.4 122.6)"/>
<rect x="972.3" y="460.6" width="9.6" height="3.8" fill="#f4ecf0" opacity="0.87" transform="rotate(42 972.3 460.6)"/>
<rect x="833.8" y="727.9" width="9.4" height="4.7" fill="#a0d0c0" opacity="0.60" transform="rotate(117 833.8 727.9)"/>
<rect x="996.5" y="193.4" width="11.0" height="4.9" fill="#ffffff" opacity="0.75" transform="rotate(1 996.5 193.4)"/>
<rect x="930.0" y="535.8" width="9.7" height="3.6" fill="#f4ecf0" opacity="0.79" transform="rotate(9 930.0 535.8)"/>
<rect x="835.4" y="386.4" width="11.6" height="4.2" fill="#f8f0e0" opacity="0.84" transform="rotate(150 835.4 386.4)"/>
<rect x="1006.8" y="613.1" width="9.2" height="3.5" fill="#e0a0a0" opacity="0.65" transform="rotate(116 1006.8 613.1)"/>
<rect x="826.4" y="591.0" width="7.9" height="3.1" fill="#e8d0d8" opacity="0.72" transform="rotate(156 826.4 591.0)"/>
<rect x="973.2" y="651.5" width="7.1" height="3.7" fill="#ffffff" opacity="0.87" transform="rotate(143 973.2 651.5)"/>
<rect x="1489.4" y="228.4" width="9.8" height="3.4" fill="#3a3050" opacity="0.97" transform="rotate(160 1489.4 228.4)"/>
<rect x="805.8" y="590.5" width="11.0" height="3.8" fill="#e8d0d8" opacity="0.61" transform="rotate(129 805.8 590.5)"/>
<rect x="808.1" y="195.7" width="11.5" height="4.3" fill="#e8d0d8" opacity="0.85" transform="rotate(136 808.1 195.7)"/>
<rect x="992.3" y="219.9" width="9.9" height="4.3" fill="#a0d0c0" opacity="0.95" transform="rotate(72 992.3 219.9)"/>
<rect x="972.0" y="524.8" width="10.9" height="4.3" fill="#3a3050" opacity="0.86" transform="rotate(79 972.0 524.8)"/>
<rect x="1040.5" y="367.5" width="9.2" height="4.7" fill="#ffffff" opacity="0.83" transform="rotate(82 1040.5 367.5)"/>
<rect x="886.6" y="398.7" width="7.8" height="4.5" fill="#2a2844" opacity="0.63" transform="rotate(132 886.6 398.7)"/>
<rect x="844.3" y="743.9" width="10.9" height="3.6" fill="#3a3050" opacity="0.95" transform="rotate(57 844.3 743.9)"/>
<rect x="1111.9" y="231.1" width="11.7" height="4.8" fill="#e0a0a0" opacity="0.94" transform="rotate(152 1111.9 231.1)"/>
<rect x="1128.2" y="708.7" width="11.7" height="3.1" fill="#f4ecf0" opacity="0.67" transform="rotate(81 1128.2 708.7)"/>
<rect x="1058.9" y="290.5" width="6.1" height="4.3" fill="#ffffff" opacity="0.88" transform="rotate(106 1058.9 290.5)"/>
<rect x="999.6" y="535.9" width="7.1" height="3.1" fill="#ffffff" opacity="0.72" transform="rotate(103 999.6 535.9)"/>
<rect x="1045.6" y="177.8" width="10.1" height="4.2" fill="#f8f0e0" opacity="0.81" transform="rotate(154 1045.6 177.8)"/>
<rect x="1257.1" y="493.9" width="7.8" height="3.6" fill="#f8f0e0" opacity="0.80" transform="rotate(77 1257.1 493.9)"/>
<rect x="903.3" y="747.2" width="8.4" height="3.5" fill="#3a3050" opacity="0.77" transform="rotate(10 903.3 747.2)"/>
<rect x="1132.7" y="285.4" width="10.5" height="4.7" fill="#a0d0c0" opacity="0.77" transform="rotate(14 1132.7 285.4)"/>
<rect x="607.4" y="405.8" width="6.1" height="3.2" fill="#e0a0a0" opacity="0.79" transform="rotate(143 607.4 405.8)"/>
<rect x="833.7" y="226.1" width="8.2" height="4.6" fill="#a0d0c0" opacity="0.71" transform="rotate(107 833.7 226.1)"/>
<rect x="710.8" y="142.8" width="10.7" height="4.2" fill="#3a3050" opacity="0.88" transform="rotate(122 710.8 142.8)"/>
<rect x="778.8" y="280.0" width="10.5" height="3.3" fill="#e0a0a0" opacity="0.86" transform="rotate(35 778.8 280.0)"/>
<rect x="1109.4" y="348.8" width="9.2" height="3.6" fill="#f4ecf0" opacity="0.64" transform="rotate(129 1109.4 348.8)"/>
<rect x="1022.6" y="690.1" width="7.1" height="4.5" fill="#e0a0a0" opacity="0.98" transform="rotate(95 1022.6 690.1)"/>
<rect x="867.1" y="235.0" width="6.1" height="4.6" fill="#ffffff" opacity="0.72" transform="rotate(67 867.1 235.0)"/>
<rect x="948.9" y="350.1" width="7.9" height="3.0" fill="#ffffff" opacity="0.89" transform="rotate(96 948.9 350.1)"/>
<rect x="1200.2" y="313.8" width="6.3" height="3.6" fill="#d8e0f0" opacity="0.88" transform="rotate(79 1200.2 313.8)"/>
<rect x="1002.9" y="47.3" width="7.9" height="3.7" fill="#e0a0a0" opacity="0.84" transform="rotate(154 1002.9 47.3)"/>
<rect x="1203.8" y="646.6" width="8.9" height="3.1" fill="#ffffff" opacity="0.70" transform="rotate(43 1203.8 646.6)"/>
<rect x="1287.2" y="631.9" width="11.4" height="3.4" fill="#e0a0a0" opacity="0.99" transform="rotate(126 1287.2 631.9)"/>
<rect x="818.9" y="391.7" width="10.8" height="4.0" fill="#e0a0a0" opacity="0.88" transform="rotate(88 818.9 391.7)"/>
<rect x="1122.8" y="610.1" width="12.0" height="3.3" fill="#f8f0e0" opacity="0.87" transform="rotate(120 1122.8 610.1)"/>
<rect x="1149.5" y="443.3" width="11.9" height="4.8" fill="#e8d0d8" opacity="0.92" transform="rotate(12 1149.5 443.3)"/>
<rect x="1219.3" y="478.1" width="10.8" height="4.4" fill="#2a2844" opacity="0.73" transform="rotate(147 1219.3 478.1)"/>
<rect x="914.1" y="694.7" width="10.7" height="4.4" fill="#e0a0a0" opacity="0.91" transform="rotate(76 914.1 694.7)"/>
<rect x="1073.5" y="241.7" width="6.2" height="4.3" fill="#d8e0f0" opacity="0.68" transform="rotate(21 1073.5 241.7)"/>
<rect x="1100.3" y="647.4" width="11.1" height="4.5" fill="#e8d0d8" opacity="0.64" transform="rotate(71 1100.3 647.4)"/>
<rect x="511.4" y="543.8" width="8.2" height="3.4" fill="#e0a0a0" opacity="0.71" transform="rotate(81 511.4 543.8)"/>
<rect x="685.1" y="680.9" width="12.0" height="4.9" fill="#f4ecf0" opacity="0.95" transform="rotate(69 685.1 680.9)"/>
<rect x="962.0" y="478.4" width="8.0" height="4.0" fill="#f8f0e0" opacity="0.66" transform="rotate(16 962.0 478.4)"/>
<rect x="629.3" y="216.9" width="10.0" height="3.5" fill="#e0a0a0" opacity="0.79" transform="rotate(36 629.3 216.9)"/>
<rect x="1154.1" y="293.6" width="9.5" height="3.1" fill="#d8e0f0" opacity="0.97" transform="rotate(70 1154.1 293.6)"/>
<rect x="892.8" y="365.9" width="6.2" height="4.1" fill="#f4ecf0" opacity="0.67" transform="rotate(87 892.8 365.9)"/>
<rect x="1094.4" y="279.2" width="7.7" height="3.6" fill="#f4ecf0" opacity="0.92" transform="rotate(135 1094.4 279.2)"/>
<rect x="988.1" y="451.7" width="9.1" height="4.5" fill="#a0d0c0" opacity="0.77" transform="rotate(25 988.1 451.7)"/>
<rect x="1052.7" y="715.0" width="8.6" height="3.8" fill="#2a2844" opacity="0.80" transform="rotate(166 1052.7 715.0)"/>
<rect x="778.9" y="312.5" width="7.5" height="4.3" fill="#d8e0f0" opacity="0.98" transform="rotate(3 778.9 312.5)"/>
<rect x="856.2" y="478.7" width="10.7" height="3.7" fill="#a0d0c0" opacity="0.66" transform="rotate(145 856.2 478.7)"/>
<rect x="1327.5" y="722.0" width="6.3" height="3.7" fill="#f4ecf0" opacity="0.77" transform="rotate(153 1327.5 722.0)"/>
<rect x="943.2" y="119.4" width="6.3" height="3.2" fill="#3a3050" opacity="0.98" transform="rotate(49 943.2 119.4)"/>
<rect x="1022.3" y="526.6" width="10.1" height="3.4" fill="#e0a0a0" opacity="0.94" transform="rotate(151 1022.3 526.6)"/>
<rect x="833.4" y="36.0" width="8.4" height="4.4" fill="#ffffff" opacity="0.68" transform="rotate(136 833.4 36.0)"/>
<rect x="929.1" y="348.1" width="6.6" height="4.3" fill="#2a2844" opacity="0.68" transform="rotate(76 929.1 348.1)"/>
<rect x="859.2" y="220.8" width="8.9" height="3.4" fill="#ffffff" opacity="0.90" transform="rotate(178 859.2 220.8)"/>
<rect x="1079.0" y="533.1" width="8.8" height="3.7" fill="#e0a0a0" opacity="0.62" transform="rotate(131 1079.0 533.1)"/>
<rect x="1039.3" y="728.2" width="8.4" height="4.5" fill="#3a3050" opacity="0.94" transform="rotate(54 1039.3 728.2)"/>
<rect x="873.0" y="615.8" width="8.3" height="4.3" fill="#f4ecf0" opacity="0.74" transform="rotate(20 873.0 615.8)"/>
<rect x="1120.4" y="307.7" width="9.6" height="3.5" fill="#d8e0f0" opacity="0.78" transform="rotate(158 1120.4 307.7)"/>
<rect x="653.2" y="586.7" width="6.3" height="4.6" fill="#ffffff" opacity="0.90" transform="rotate(124 653.2 586.7)"/>
<rect x="953.5" y="47.7" width="7.4" height="3.8" fill="#ffffff" opacity="0.86" transform="rotate(108 953.5 47.7)"/>
<rect x="1145.7" y="507.4" width="6.4" height="4.8" fill="#ffffff" opacity="0.96" transform="rotate(12 1145.7 507.4)"/>
<rect x="1258.6" y="625.1" width="8.3" height="4.5" fill="#d8e0f0" opacity="0.61" transform="rotate(73 1258.6 625.1)"/>
<rect x="930.4" y="214.2" width="10.2" height="3.5" fill="#d8e0f0" opacity="0.76" transform="rotate(170 930.4 214.2)"/>
<rect x="709.2" y="326.3" width="11.8" height="3.2" fill="#f4ecf0" opacity="0.89" transform="rotate(93 709.2 326.3)"/>
<rect x="1142.1" y="474.7" width="8.5" height="3.8" fill="#a0d0c0" opacity="0.68" transform="rotate(65 1142.1 474.7)"/>
<rect x="822.6" y="464.4" width="9.6" height="3.4" fill="#f0e0e8" opacity="0.72" transform="rotate(71 822.6 464.4)"/>
<rect x="769.8" y="441.8" width="9.0" height="3.2" fill="#ffffff" opacity="0.77" transform="rotate(176 769.8 441.8)"/>
<rect x="1027.7" y="666.7" width="8.4" height="3.7" fill="#f8f0e0" opacity="0.70" transform="rotate(126 1027.7 666.7)"/>
<rect x="1066.9" y="752.3" width="8.8" height="4.6" fill="#e8d0d8" opacity="0.72" transform="rotate(120 1066.9 752.3)"/>
<rect x="1082.8" y="607.0" width="9.2" height="5.0" fill="#ffffff" opacity="0.62" transform="rotate(61 1082.8 607.0)"/>
<rect x="1015.5" y="397.1" width="7.0" height="3.8" fill="#ffffff" opacity="0.62" transform="rotate(2 1015.5 397.1)"/>
<rect x="1021.4" y="179.4" width="10.2" height="4.4" fill="#f0e0e8" opacity="0.97" transform="rotate(24 1021.4 179.4)"/>
<rect x="872.7" y="269.4" width="7.9" height="3.2" fill="#f4ecf0" opacity="0.91" transform="rotate(145 872.7 269.4)"/>
<rect x="1003.2" y="106.5" width="6.2" height="3.5" fill="#f4ecf0" opacity="0.80" transform="rotate(37 1003.2 106.5)"/>
<rect x="859.1" y="679.6" width="11.3" height="3.5" fill="#e8d0d8" opacity="0.62" transform="rotate(167 859.1 679.6)"/>
<rect x="1156.3" y="703.9" width="11.4" height="3.2" fill="#e0a0a0" opacity="0.72" transform="rotate(20 1156.3 703.9)"/>
<rect x="916.9" y="434.9" width="11.4" height="3.3" fill="#e8d0d8" opacity="0.75" transform="rotate(126 916.9 434.9)"/>
<rect x="1022.4" y="339.6" width="10.9" height="4.3" fill="#ffffff" opacity="0.98" transform="rotate(179 1022.4 339.6)"/>
<rect x="1119.5" y="383.9" width="6.5" height="3.9" fill="#e0a0a0" opacity="0.76" transform="rotate(112 1119.5 383.9)"/>
<rect x="732.2" y="586.8" width="9.4" height="4.6" fill="#f0e0e8" opacity="0.78" transform="rotate(85 732.2 586.8)"/>
<rect x="902.3" y="391.0" width="10.1" height="3.1" fill="#f0e0e8" opacity="0.71" transform="rotate(130 902.3 391.0)"/>
<rect x="905.6" y="441.5" width="6.2" height="4.7" fill="#ffffff" opacity="0.84" transform="rotate(150 905.6 441.5)"/>
<rect x="1043.8" y="0.0" width="6.3" height="4.5" fill="#ffffff" opacity="0.61" transform="rotate(178 1043.8 0.0)"/>
<rect x="753.4" y="549.7" width="6.7" height="4.7" fill="#ffffff" opacity="0.81" transform="rotate(132 753.4 549.7)"/>
<rect x="1057.4" y="729.7" width="7.7" height="4.3" fill="#2a2844" opacity="0.96" transform="rotate(94 1057.4 729.7)"/>
<rect x="1217.7" y="725.1" width="6.0" height="3.6" fill="#a0d0c0" opacity="0.91" transform="rotate(26 1217.7 725.1)"/>
<rect x="826.6" y="700.0" width="7.7" height="3.5" fill="#3a3050" opacity="0.76" transform="rotate(51 826.6 700.0)"/>
<rect x="1035.0" y="50.1" width="11.1" height="3.7" fill="#ffffff" opacity="0.84" transform="rotate(160 1035.0 50.1)"/>
<rect x="600.9" y="630.2" width="8.3" height="4.6" fill="#d8e0f0" opacity="1.00" transform="rotate(115 600.9 630.2)"/>
<rect x="1090.7" y="666.7" width="10.0" height="4.4" fill="#e8d0d8" opacity="0.75" transform="rotate(10 1090.7 666.7)"/>
<rect x="1182.4" y="352.4" width="9.1" height="4.7" fill="#a0d0c0" opacity="0.75" transform="rotate(124 1182.4 352.4)"/>
<rect x="1107.1" y="511.3" width="11.6" height="5.0" fill="#d8e0f0" opacity="0.68" transform="rotate(89 1107.1 511.3)"/>
<rect x="1124.4" y="186.4" width="11.4" height="4.9" fill="#f4ecf0" opacity="0.98" transform="rotate(40 1124.4 186.4)"/>
<rect x="866.6" y="686.6" width="10.0" height="4.0" fill="#a0d0c0" opacity="0.83" transform="rotate(74 866.6 686.6)"/>
<rect x="1132.7" y="658.7" width="8.1" height="4.2" fill="#ffffff" opacity="0.69" transform="rotate(54 1132.7 658.7)"/>
<rect x="1256.0" y="308.4" width="11.2" height="4.5" fill="#d8e0f0" opacity="0.61" transform="rotate(139 1256.0 308.4)"/>
<rect x="1212.6" y="602.4" width="7.4" height="4.5" fill="#2a2844" opacity="0.82" transform="rotate(156 1212.6 602.4)"/>
<rect x="1150.2" y="623.4" width="7.3" height="4.1" fill="#f0e0e8" opacity="0.90" transform="rotate(78 1150.2 623.4)"/>
<rect x="1086.6" y="427.2" width="6.2" height="5.0" fill="#f8f0e0" opacity="0.88" transform="rotate(107 1086.6 427.2)"/>
<rect x="823.8" y="261.3" width="6.5" height="3.6" fill="#a0d0c0" opacity="0.73" transform="rotate(63 823.8 261.3)"/>
<rect x="984.3" y="184.8" width="7.3" height="4.3" fill="#3a3050" opacity="0.77" transform="rotate(81 984.3 184.8)"/>
<rect x="1196.9" y="130.1" width="8.4" height="4.5" fill="#f8f0e0" opacity="0.78" transform="rotate(15 1196.9 130.1)"/>
<rect x="875.4" y="313.8" width="8.0" height="3.7" fill="#ffffff" opacity="0.61" transform="rotate(8 875.4 313.8)"/>
<rect x="460.5" y="369.1" width="6.9" height="4.4" fill="#ffffff" opacity="0.90" transform="rotate(176 460.5 369.1)"/>
<rect x="1131.3" y="368.1" width="10.3" height="3.6" fill="#f0e0e8" opacity="1.00" transform="rotate(82 1131.3 368.1)"/>
<rect x="520.0" y="522.4" width="6.7" height="3.0" fill="#a0d0c0" opacity="0.92" transform="rotate(59 520.0 522.4)"/>
<rect x="634.8" y="231.0" width="10.7" height="4.5" fill="#3a3050" opacity="0.82" transform="rotate(128 634.8 231.0)"/>
<rect x="914.6" y="644.7" width="11.3" height="3.8" fill="#ffffff" opacity="0.85" transform="rotate(68 914.6 644.7)"/>
<rect x="957.4" y="216.7" width="9.6" height="4.9" fill="#d8e0f0" opacity="0.80" transform="rotate(156 957.4 216.7)"/>
<rect x="953.2" y="361.8" width="10.5" height="3.5" fill="#e0a0a0" opacity="0.75" transform="rotate(147 953.2 361.8)"/>
<rect x="1087.5" y="368.3" width="6.2" height="3.8" fill="#e8d0d8" opacity="0.77" transform="rotate(127 1087.5 368.3)"/>
<rect x="1067.0" y="188.9" width="9.0" height="5.0" fill="#e0a0a0" opacity="0.91" transform="rotate(35 1067.0 188.9)"/>
<rect x="790.6" y="698.5" width="10.7" height="3.9" fill="#d8e0f0" opacity="0.70" transform="rotate(95 790.6 698.5)"/>
<rect x="1123.0" y="164.3" width="10.4" height="3.1" fill="#ffffff" opacity="0.97" transform="rotate(86 1123.0 164.3)"/>
<rect x="970.7" y="378.2" width="10.3" height="4.0" fill="#ffffff" opacity="0.72" transform="rotate(176 970.7 378.2)"/>
<rect x="1043.5" y="661.8" width="9.1" height="4.2" fill="#3a3050" opacity="0.89" transform="rotate(60 1043.5 661.8)"/>
<rect x="635.8" y="529.0" width="9.6" height="4.0" fill="#e8d0d8" opacity="0.80" transform="rotate(53 635.8 529.0)"/>
<rect x="1173.1" y="744.1" width="7.8" height="3.7" fill="#d8e0f0" opacity="0.74" transform="rotate(82 1173.1 744.1)"/>
<rect x="971.2" y="569.5" width="8.2" height="3.7" fill="#d8e0f0" opacity="0.86" transform="rotate(60 971.2 569.5)"/>
<rect x="789.7" y="449.2" width="7.6" height="3.2" fill="#e8d0d8" opacity="0.69" transform="rotate(42 789.7 449.2)"/>
<rect x="1012.5" y="589.5" width="9.3" height="3.1" fill="#e0a0a0" opacity="0.66" transform="rotate(43 1012.5 589.5)"/>
<rect x="911.5" y="288.2" width="8.5" height="3.6" fill="#e8d0d8" opacity="0.93" transform="rotate(65 911.5 288.2)"/>
<rect x="1167.6" y="212.0" width="11.7" height="3.9" fill="#f0e0e8" opacity="0.61" transform="rotate(65 1167.6 212.0)"/>
<rect x="854.7" y="314.5" width="9.9" height="3.7" fill="#e0a0a0" opacity="0.94" transform="rotate(155 854.7 314.5)"/>
<rect x="1178.1" y="508.3" width="9.1" height="3.5" fill="#f8f0e0" opacity="0.75" transform="rotate(73 1178.1 508.3)"/>
<rect x="809.8" y="191.0" width="9.6" height="4.4" fill="#2a2844" opacity="0.89" transform="rotate(77 809.8 191.0)"/>
<rect x="1151.7" y="407.5" width="9.7" height="4.1" fill="#e8d0d8" opacity="0.93" transform="rotate(3 1151.7 407.5)"/>
<rect x="1031.4" y="391.6" width="11.8" height="3.1" fill="#a0d0c0" opacity="0.65" transform="rotate(78 1031.4 391.6)"/>
<rect x="958.1" y="647.8" width="11.8" height="4.2" fill="#a0d0c0" opacity="0.65" transform="rotate(46 958.1 647.8)"/>
<rect x="1129.8" y="192.1" width="9.2" height="4.4" fill="#a0d0c0" opacity="0.62" transform="rotate(103 1129.8 192.1)"/>
<rect x="884.6" y="701.0" width="10.6" height="3.2" fill="#3a3050" opacity="0.90" transform="rotate(55 884.6 701.0)"/>
<rect x="787.4" y="721.6" width="6.6" height="4.0" fill="#d8e0f0" opacity="0.86" transform="rotate(125 787.4 721.6)"/>
<rect x="1035.1" y="415.0" width="10.3" height="4.6" fill="#f4ecf0" opacity="0.61" transform="rotate(162 1035.1 415.0)"/>
<rect x="1091.4" y="660.8" width="8.8" height="3.6" fill="#d8e0f0" opacity="0.83" transform="rotate(59 1091.4 660.8)"/>
<rect x="734.0" y="752.0" width="10.8" height="4.0" fill="#f4ecf0" opacity="0.94" transform="rotate(62 734.0 752.0)"/>
<rect x="992.5" y="307.0" width="6.9" height="3.9" fill="#d8e0f0" opacity="0.95" transform="rotate(36 992.5 307.0)"/>
<rect x="965.4" y="592.3" width="10.6" height="4.7" fill="#d8e0f0" opacity="0.89" transform="rotate(29 965.4 592.3)"/>
<rect x="1145.4" y="248.7" width="9.4" height="3.8" fill="#ffffff" opacity="0.60" transform="rotate(61 1145.4 248.7)"/>
<rect x="1070.7" y="483.2" width="7.3" height="3.9" fill="#f0e0e8" opacity="0.61" transform="rotate(127 1070.7 483.2)"/>
<ellipse cx="975" cy="610" rx="560" ry="140" fill="url(#gblue)" opacity="0.6" transform="rotate(0 975 610)"/>
<g filter="url(#b2)">
<path d="M600 585 Q628 560 660 585 L672 720 L592 720 Z" fill="#15152e"/>
<ellipse cx="628" cy="551" rx="13" ry="16" fill="#9a8c98"/>
<path d="M612 545 Q626 518 646 540 Z" fill="#6c6a70"/>
<path d="M600 650 Q625 640 650 660 L640 690 Q610 690 598 670Z" fill="#4a2a30"/>
<path d="M640 650 L722 612" stroke="#d8c8b0" stroke-width="5" opacity="0.85"/>
<path d="M955 560 Q980 535 1010 560 L1030 720 L945 720 Z" fill="#8878a8" opacity="0.85"/>
<ellipse cx="982" cy="560" rx="21" ry="25" fill="#c8b8b0" opacity="0.75"/>
<path d="M998 550 L1030 478" stroke="#e0c8c8" stroke-width="9" opacity="0.85"/>
<path d="M960 640 L1005 640 L1012 700 L955 700Z" fill="#b06070" opacity="0.55"/>
<path d="M1125 590 Q1160 565 1195 590 L1205 720 L1115 720 Z" fill="#3a3a60"/>
<ellipse cx="1160" cy="553" rx="14" ry="17" fill="#c0acb0"/>
<path d="M1144 545 Q1160 525 1178 542 Z" fill="#a09080"/>
<path d="M1170 650 L1282 590" stroke="#d8b080" stroke-width="5" opacity="0.85"/>
</g>
<path d="M1400 640 Q1440 610 1480 640 L1490 740 L1390 740 Z" fill="#2a2a48" opacity="0.6"/>
<ellipse cx="1440" cy="612" rx="16" ry="20" fill="#3a3650" opacity="0.6"/>
<rect x="0" y="600" width="1994" height="531" fill="url(#crowdg)"/>
<g filter="url(#b2)">
<ellipse cx="-4" cy="836" rx="73" ry="55" fill="#0b1022"/>
<rect x="-77" y="836" width="146" height="1131" fill="#0b1022"/>
<ellipse cx="-4" cy="759" rx="37" ry="41" fill="#0b1022"/>
<path d="M-39 766 A37 41 0 0 1 -6 718" stroke="#2246b0" stroke-width="2.5" fill="none" opacity="0.24" filter="url(#b3)"/>
<ellipse cx="55" cy="834" rx="82" ry="62" fill="#0b1022"/>
<rect x="-27" y="834" width="164" height="1131" fill="#0b1022"/>
<ellipse cx="55" cy="747" rx="41" ry="46" fill="#0b1022"/>
<path d="M94 755 A41 46 0 0 0 57 701" stroke="#2246b0" stroke-width="2.5" fill="none" opacity="0.23" filter="url(#b3)"/>
<ellipse cx="116" cy="839" rx="78" ry="58" fill="#0b1022"/>
<rect x="38" y="839" width="156" height="1131" fill="#0b1022"/>
<ellipse cx="116" cy="758" rx="39" ry="44" fill="#0b1022"/>
<ellipse cx="173" cy="825" rx="81" ry="61" fill="#0b1022"/>
<rect x="92" y="825" width="161" height="1131" fill="#0b1022"/>
<ellipse cx="173" cy="740" rx="40" ry="45" fill="#0b1022"/>
<ellipse cx="239" cy="820" rx="62" ry="46" fill="#0b1022"/>
<rect x="177" y="820" width="124" height="1131" fill="#0b1022"/>
<ellipse cx="239" cy="755" rx="31" ry="35" fill="#0b1022"/>
<path d="M210 761 A31 35 0 0 1 238 721" stroke="#2246b0" stroke-width="2.5" fill="none" opacity="0.32" filter="url(#b3)"/>
<ellipse cx="303" cy="815" rx="77" ry="57" fill="#0b1022"/>
<rect x="227" y="815" width="153" height="1131" fill="#0b1022"/>
<ellipse cx="303" cy="735" rx="38" ry="43" fill="#0b1022"/>
<path d="M267 743 A38 43 0 0 1 301 692" stroke="#2246b0" stroke-width="2.5" fill="none" opacity="0.33" filter="url(#b3)"/>
<ellipse cx="357" cy="825" rx="73" ry="55" fill="#0b1022"/>
<rect x="284" y="825" width="146" height="1131" fill="#0b1022"/>
<ellipse cx="357" cy="748" rx="36" ry="41" fill="#0b1022"/>
<path d="M322 756 A36 41 0 0 1 355 708" stroke="#2246b0" stroke-width="2.5" fill="none" opacity="0.34" filter="url(#b3)"/>
<ellipse cx="413" cy="803" rx="68" ry="51" fill="#0b1022"/>
<rect x="345" y="803" width="136" height="1131" fill="#0b1022"/>
<ellipse cx="413" cy="731" rx="34" ry="38" fill="#0b1022"/>
<path d="M381 738 A34 38 0 0 1 411 693" stroke="#2246b0" stroke-width="2.5" fill="none" opacity="0.28" filter="url(#b3)"/>
<ellipse cx="486" cy="829" rx="87" ry="65" fill="#0b1022"/>
<rect x="399" y="829" width="174" height="1131" fill="#0b1022"/>
<ellipse cx="486" cy="737" rx="43" ry="49" fill="#0b1022"/>
<ellipse cx="526" cy="820" rx="85" ry="64" fill="#0b1022"/>
<rect x="441" y="820" width="171" height="1131" fill="#0b1022"/>
<ellipse cx="526" cy="730" rx="43" ry="48" fill="#0b1022"/>
<path d="M567 739 A43 48 0 0 0 528 683" stroke="#2246b0" stroke-width="2.6" fill="none" opacity="0.28" filter="url(#b3)"/>
<ellipse cx="600" cy="813" rx="79" ry="59" fill="#0b1022"/>
<rect x="521" y="813" width="158" height="1131" fill="#0b1022"/>
<ellipse cx="600" cy="730" rx="39" ry="44" fill="#0b1022"/>
<path d="M638 738 A39 44 0 0 0 602 686" stroke="#2246b0" stroke-width="2.5" fill="none" opacity="0.27" filter="url(#b3)"/>
<ellipse cx="670" cy="819" rx="63" ry="47" fill="#0b1022"/>
<rect x="607" y="819" width="127" height="1131" fill="#0b1022"/>
<ellipse cx="670" cy="752" rx="32" ry="35" fill="#0b1022"/>
<path d="M640 759 A32 35 0 0 1 669 717" stroke="#2246b0" stroke-width="2.5" fill="none" opacity="0.20" filter="url(#b3)"/>
<ellipse cx="719" cy="825" rx="79" ry="59" fill="#0b1022"/>
<rect x="640" y="825" width="158" height="1131" fill="#0b1022"/>
<ellipse cx="719" cy="741" rx="40" ry="44" fill="#0b1022"/>
<path d="M681 749 A40 44 0 0 1 717 697" stroke="#2246b0" stroke-width="2.5" fill="none" opacity="0.40" filter="url(#b3)"/>
<ellipse cx="786" cy="813" rx="71" ry="53" fill="#0b1022"/>
<rect x="716" y="813" width="141" height="1131" fill="#0b1022"/>
<ellipse cx="786" cy="739" rx="35" ry="40" fill="#0b1022"/>
<path d="M753 746 A35 40 0 0 1 785 699" stroke="#2246b0" stroke-width="2.5" fill="none" opacity="0.20" filter="url(#b3)"/>
<ellipse cx="849" cy="841" rx="77" ry="57" fill="#0b1022"/>
<rect x="773" y="841" width="153" height="1131" fill="#0b1022"/>
<ellipse cx="849" cy="761" rx="38" ry="43" fill="#0b1022"/>
<ellipse cx="889" cy="822" rx="88" ry="66" fill="#0b1022"/>
<rect x="801" y="822" width="176" height="1131" fill="#0b1022"/>
<ellipse cx="889" cy="729" rx="44" ry="49" fill="#0b1022"/>
<ellipse cx="963" cy="791" rx="64" ry="48" fill="#0b1022"/>
<rect x="899" y="791" width="128" height="1131" fill="#0b1022"/>
<ellipse cx="963" cy="724" rx="32" ry="36" fill="#0b1022"/>
<path d="M933 730 A32 36 0 0 1 961 688" stroke="#2246b0" stroke-width="2.5" fill="none" opacity="0.35" filter="url(#b3)"/>
<ellipse cx="1017" cy="799" rx="62" ry="47" fill="#0b1022"/>
<rect x="955" y="799" width="124" height="1131" fill="#0b1022"/>
<ellipse cx="1017" cy="734" rx="31" ry="35" fill="#0b1022"/>
<path d="M988 740 A31 35 0 0 1 1016 699" stroke="#2246b0" stroke-width="2.5" fill="none" opacity="0.20" filter="url(#b3)"/>
<ellipse cx="1079" cy="814" rx="64" ry="48" fill="#0b1022"/>
<rect x="1015" y="814" width="127" height="1131" fill="#0b1022"/>
<ellipse cx="1079" cy="747" rx="32" ry="36" fill="#0b1022"/>
<ellipse cx="1150" cy="802" rx="71" ry="53" fill="#0b1022"/>
<rect x="1080" y="802" width="142" height="1131" fill="#0b1022"/>
<ellipse cx="1150" cy="727" rx="35" ry="40" fill="#0b1022"/>
<ellipse cx="1198" cy="812" rx="77" ry="58" fill="#0b1022"/>
<rect x="1121" y="812" width="154" height="1131" fill="#0b1022"/>
<ellipse cx="1198" cy="731" rx="39" ry="43" fill="#0b1022"/>
<ellipse cx="1255" cy="826" rx="76" ry="57" fill="#0b1022"/>
<rect x="1180" y="826" width="151" height="1131" fill="#0b1022"/>
<ellipse cx="1255" cy="747" rx="38" ry="42" fill="#0b1022"/>
<ellipse cx="1321" cy="807" rx="62" ry="47" fill="#0b1022"/>
<rect x="1259" y="807" width="124" height="1131" fill="#0b1022"/>
<ellipse cx="1321" cy="741" rx="31" ry="35" fill="#0b1022"/>
<path d="M1291 748 A31 35 0 0 1 1319 706" stroke="#2246b0" stroke-width="2.5" fill="none" opacity="0.21" filter="url(#b3)"/>
<ellipse cx="1395" cy="815" rx="80" ry="60" fill="#0b1022"/>
<rect x="1316" y="815" width="159" height="1131" fill="#0b1022"/>
<ellipse cx="1395" cy="732" rx="40" ry="45" fill="#0b1022"/>
<path d="M1433 740 A40 45 0 0 0 1397 687" stroke="#2246b0" stroke-width="2.5" fill="none" opacity="0.26" filter="url(#b3)"/>
<ellipse cx="1437" cy="816" rx="62" ry="46" fill="#0b1022"/>
<rect x="1375" y="816" width="124" height="1131" fill="#0b1022"/>
<ellipse cx="1437" cy="751" rx="31" ry="35" fill="#0b1022"/>
<path d="M1407 757 A31 35 0 0 1 1435 716" stroke="#2246b0" stroke-width="2.5" fill="none" opacity="0.26" filter="url(#b3)"/>
<ellipse cx="1515" cy="794" rx="60" ry="45" fill="#0b1022"/>
<rect x="1455" y="794" width="121" height="1131" fill="#0b1022"/>
<ellipse cx="1515" cy="730" rx="30" ry="34" fill="#0b1022"/>
<path d="M1544 736 A30 34 0 0 0 1517 696" stroke="#2246b0" stroke-width="2.5" fill="none" opacity="0.25" filter="url(#b3)"/>
<ellipse cx="1554" cy="812" rx="75" ry="56" fill="#0b1022"/>
<rect x="1480" y="812" width="150" height="1131" fill="#0b1022"/>
<ellipse cx="1554" cy="733" rx="37" ry="42" fill="#0b1022"/>
<ellipse cx="1616" cy="804" rx="73" ry="54" fill="#0b1022"/>
<rect x="1543" y="804" width="145" height="1131" fill="#0b1022"/>
<ellipse cx="1616" cy="728" rx="36" ry="41" fill="#0b1022"/>
<path d="M1581 735 A36 41 0 0 1 1614 687" stroke="#2246b0" stroke-width="2.5" fill="none" opacity="0.32" filter="url(#b3)"/>
<ellipse cx="1697" cy="815" rx="70" ry="53" fill="#0b1022"/>
<rect x="1626" y="815" width="140" height="1131" fill="#0b1022"/>
<ellipse cx="1697" cy="741" rx="35" ry="39" fill="#0b1022"/>
<path d="M1663 748 A35 39 0 0 1 1695 702" stroke="#2246b0" stroke-width="2.5" fill="none" opacity="0.20" filter="url(#b3)"/>
<ellipse cx="1750" cy="826" rx="80" ry="60" fill="#0b1022"/>
<rect x="1670" y="826" width="161" height="1131" fill="#0b1022"/>
<ellipse cx="1750" cy="741" rx="40" ry="45" fill="#0b1022"/>
<path d="M1712 749 A40 45 0 0 1 1748 696" stroke="#2246b0" stroke-width="2.5" fill="none" opacity="0.22" filter="url(#b3)"/>
<ellipse cx="1808" cy="841" rx="85" ry="64" fill="#0b1022"/>
<rect x="1723" y="841" width="170" height="1131" fill="#0b1022"/>
<ellipse cx="1808" cy="751" rx="43" ry="48" fill="#0b1022"/>
<ellipse cx="1872" cy="844" rx="86" ry="64" fill="#0b1022"/>
<rect x="1787" y="844" width="171" height="1131" fill="#0b1022"/>
<ellipse cx="1872" cy="754" rx="43" ry="48" fill="#0b1022"/>
<path d="M1913 762 A43 48 0 0 0 1875 706" stroke="#2246b0" stroke-width="2.6" fill="none" opacity="0.38" filter="url(#b3)"/>
<ellipse cx="1937" cy="825" rx="82" ry="62" fill="#0b1022"/>
<rect x="1855" y="825" width="164" height="1131" fill="#0b1022"/>
<ellipse cx="1937" cy="739" rx="41" ry="46" fill="#0b1022"/>
<ellipse cx="1990" cy="821" rx="71" ry="53" fill="#0b1022"/>
<rect x="1919" y="821" width="141" height="1131" fill="#0b1022"/>
<ellipse cx="1990" cy="747" rx="35" ry="40" fill="#0b1022"/>
<ellipse cx="-10" cy="964" rx="124" ry="93" fill="#0a0e1e"/>
<rect x="-134" y="964" width="248" height="1131" fill="#0a0e1e"/>
<ellipse cx="-10" cy="834" rx="62" ry="69" fill="#0a0e1e"/>
<ellipse cx="99" cy="944" rx="114" ry="86" fill="#0a0e1e"/>
<rect x="-16" y="944" width="229" height="1131" fill="#0a0e1e"/>
<ellipse cx="99" cy="824" rx="57" ry="64" fill="#0a0e1e"/>
<ellipse cx="175" cy="937" rx="91" ry="68" fill="#0a0e1e"/>
<rect x="84" y="937" width="182" height="1131" fill="#0a0e1e"/>
<ellipse cx="175" cy="842" rx="46" ry="51" fill="#0a0e1e"/>
<ellipse cx="248" cy="943" rx="105" ry="79" fill="#0a0e1e"/>
<rect x="143" y="943" width="211" height="1131" fill="#0a0e1e"/>
<ellipse cx="248" cy="832" rx="53" ry="59" fill="#0a0e1e"/>
<path d="M198 843 A53 59 0 0 1 245 773" stroke="#2246b0" stroke-width="3.2" fill="none" opacity="0.30" filter="url(#b3)"/>
<ellipse cx="355" cy="947" rx="97" ry="73" fill="#0a0e1e"/>
<rect x="258" y="947" width="194" height="1131" fill="#0a0e1e"/>
<ellipse cx="355" cy="845" rx="49" ry="54" fill="#0a0e1e"/>
<path d="M401 855 A49 54 0 0 0 357 790" stroke="#2246b0" stroke-width="2.9" fill="none" opacity="0.23" filter="url(#b3)"/>
<ellipse cx="442" cy="950" rx="115" ry="86" fill="#0a0e1e"/>
<rect x="326" y="950" width="230" height="1131" fill="#0a0e1e"/>
<ellipse cx="442" cy="829" rx="58" ry="64" fill="#0a0e1e"/>
<path d="M496 840 A58 64 0 0 0 444 764" stroke="#2246b0" stroke-width="3.5" fill="none" opacity="0.30" filter="url(#b3)"/>
<ellipse cx="515" cy="926" rx="97" ry="73" fill="#0a0e1e"/>
<rect x="418" y="926" width="194" height="1131" fill="#0a0e1e"/>
<ellipse cx="515" cy="824" rx="49" ry="54" fill="#0a0e1e"/>
<ellipse cx="622" cy="938" rx="95" ry="71" fill="#0a0e1e"/>
<rect x="526" y="938" width="190" height="1131" fill="#0a0e1e"/>
<ellipse cx="622" cy="838" rx="48" ry="53" fill="#0a0e1e"/>
<path d="M576 848 A48 53 0 0 1 619 785" stroke="#2246b0" stroke-width="2.9" fill="none" opacity="0.32" filter="url(#b3)"/>
<ellipse cx="691" cy="925" rx="106" ry="79" fill="#0a0e1e"/>
<rect x="585" y="925" width="212" height="1131" fill="#0a0e1e"/>
<ellipse cx="691" cy="813" rx="53" ry="59" fill="#0a0e1e"/>
<ellipse cx="797" cy="965" rx="122" ry="92" fill="#0a0e1e"/>
<rect x="674" y="965" width="244" height="1131" fill="#0a0e1e"/>
<ellipse cx="797" cy="836" rx="61" ry="68" fill="#0a0e1e"/>
<path d="M738 849 A61 68 0 0 1 793 768" stroke="#2246b0" stroke-width="3.7" fill="none" opacity="0.22" filter="url(#b3)"/>
<ellipse cx="870" cy="969" rx="118" ry="88" fill="#0a0e1e"/>
<rect x="752" y="969" width="236" height="1131" fill="#0a0e1e"/>
<ellipse cx="870" cy="845" rx="59" ry="66" fill="#0a0e1e"/>
<path d="M926 857 A59 66 0 0 0 873 779" stroke="#2246b0" stroke-width="3.5" fill="none" opacity="0.33" filter="url(#b3)"/>
<ellipse cx="965" cy="958" rx="110" ry="83" fill="#0a0e1e"/>
<rect x="855" y="958" width="221" height="1131" fill="#0a0e1e"/>
<ellipse cx="965" cy="842" rx="55" ry="62" fill="#0a0e1e"/>
<path d="M913 853 A55 62 0 0 1 963 780" stroke="#2246b0" stroke-width="3.3" fill="none" opacity="0.26" filter="url(#b3)"/>
<ellipse cx="1048" cy="938" rx="98" ry="74" fill="#0a0e1e"/>
<rect x="950" y="938" width="196" height="1131" fill="#0a0e1e"/>
<ellipse cx="1048" cy="835" rx="49" ry="55" fill="#0a0e1e"/>
<path d="M1002 845 A49 55 0 0 1 1046 780" stroke="#2246b0" stroke-width="2.9" fill="none" opacity="0.33" filter="url(#b3)"/>
<ellipse cx="1128" cy="937" rx="116" ry="87" fill="#0a0e1e"/>
<rect x="1012" y="937" width="231" height="1131" fill="#0a0e1e"/>
<ellipse cx="1128" cy="816" rx="58" ry="65" fill="#0a0e1e"/>
<path d="M1073 827 A58 65 0 0 1 1125 751" stroke="#2246b0" stroke-width="3.5" fill="none" opacity="0.36" filter="url(#b3)"/>
<ellipse cx="1235" cy="909" rx="92" ry="69" fill="#0a0e1e"/>
<rect x="1143" y="909" width="184" height="1131" fill="#0a0e1e"/>
<ellipse cx="1235" cy="813" rx="46" ry="51" fill="#0a0e1e"/>
<path d="M1278 822 A46 51 0 0 0 1237 761" stroke="#2246b0" stroke-width="2.8" fill="none" opacity="0.39" filter="url(#b3)"/>
<ellipse cx="1311" cy="926" rx="105" ry="79" fill="#0a0e1e"/>
<rect x="1206" y="926" width="210" height="1131" fill="#0a0e1e"/>
<ellipse cx="1311" cy="816" rx="53" ry="59" fill="#0a0e1e"/>
<path d="M1261 826 A53 59 0 0 1 1308 757" stroke="#2246b0" stroke-width="3.2" fill="none" opacity="0.35" filter="url(#b3)"/>
<ellipse cx="1392" cy="910" rx="96" ry="72" fill="#0a0e1e"/>
<rect x="1296" y="910" width="192" height="1131" fill="#0a0e1e"/>
<ellipse cx="1392" cy="809" rx="48" ry="54" fill="#0a0e1e"/>
<ellipse cx="1479" cy="957" rx="106" ry="80" fill="#0a0e1e"/>
<rect x="1373" y="957" width="212" height="1131" fill="#0a0e1e"/>
<ellipse cx="1479" cy="846" rx="53" ry="59" fill="#0a0e1e"/>
<ellipse cx="1553" cy="961" rx="113" ry="85" fill="#0a0e1e"/>
<rect x="1440" y="961" width="226" height="1131" fill="#0a0e1e"/>
<ellipse cx="1553" cy="842" rx="57" ry="63" fill="#0a0e1e"/>
<path d="M1607 853 A57 63 0 0 0 1556 779" stroke="#2246b0" stroke-width="3.4" fill="none" opacity="0.39" filter="url(#b3)"/>
<ellipse cx="1659" cy="923" rx="104" ry="78" fill="#0a0e1e"/>
<rect x="1555" y="923" width="209" height="1131" fill="#0a0e1e"/>
<ellipse cx="1659" cy="813" rx="52" ry="58" fill="#0a0e1e"/>
<ellipse cx="1752" cy="937" rx="108" ry="81" fill="#0a0e1e"/>
<rect x="1644" y="937" width="217" height="1131" fill="#0a0e1e"/>
<ellipse cx="1752" cy="823" rx="54" ry="61" fill="#0a0e1e"/>
<ellipse cx="1835" cy="956" rx="105" ry="79" fill="#0a0e1e"/>
<rect x="1730" y="956" width="209" height="1131" fill="#0a0e1e"/>
<ellipse cx="1835" cy="846" rx="52" ry="59" fill="#0a0e1e"/>
<ellipse cx="1901" cy="960" rx="117" ry="88" fill="#0a0e1e"/>
<rect x="1784" y="960" width="235" height="1131" fill="#0a0e1e"/>
<ellipse cx="1901" cy="837" rx="59" ry="66" fill="#0a0e1e"/>
<ellipse cx="2006" cy="943" rx="120" ry="90" fill="#0a0e1e"/>
<rect x="1885" y="943" width="241" height="1131" fill="#0a0e1e"/>
<ellipse cx="2006" cy="817" rx="60" ry="67" fill="#0a0e1e"/>
<ellipse cx="49" cy="1087" rx="141" ry="105" fill="#090c19"/>
<rect x="-92" y="1087" width="281" height="1131" fill="#090c19"/>
<ellipse cx="49" cy="940" rx="70" ry="79" fill="#090c19"/>
<ellipse cx="190" cy="1057" rx="128" ry="96" fill="#090c19"/>
<rect x="61" y="1057" width="257" height="1131" fill="#090c19"/>
<ellipse cx="190" cy="922" rx="64" ry="72" fill="#090c19"/>
<path d="M251 935 A64 72 0 0 0 193 850" stroke="#2246b0" stroke-width="3.8" fill="none" opacity="0.35" filter="url(#b3)"/>
<ellipse cx="296" cy="1084" rx="166" ry="125" fill="#090c19"/>
<rect x="130" y="1084" width="332" height="1131" fill="#090c19"/>
<ellipse cx="296" cy="909" rx="83" ry="93" fill="#090c19"/>
<path d="M217 926 A83 93 0 0 1 292 816" stroke="#2246b0" stroke-width="5.0" fill="none" opacity="0.23" filter="url(#b3)"/>
<ellipse cx="413" cy="1077" rx="131" ry="98" fill="#090c19"/>
<rect x="282" y="1077" width="263" height="1131" fill="#090c19"/>
<ellipse cx="413" cy="940" rx="66" ry="74" fill="#090c19"/>
<path d="M475 953 A66 74 0 0 0 416 866" stroke="#2246b0" stroke-width="3.9" fill="none" opacity="0.39" filter="url(#b3)"/>
<ellipse cx="545" cy="1081" rx="128" ry="96" fill="#090c19"/>
<rect x="417" y="1081" width="257" height="1131" fill="#090c19"/>
<ellipse cx="545" cy="946" rx="64" ry="72" fill="#090c19"/>
<path d="M606 959 A64 72 0 0 0 549 874" stroke="#2246b0" stroke-width="3.9" fill="none" opacity="0.37" filter="url(#b3)"/>
<ellipse cx="674" cy="1073" rx="151" ry="113" fill="#090c19"/>
<rect x="523" y="1073" width="301" height="1131" fill="#090c19"/>
<ellipse cx="674" cy="915" rx="75" ry="84" fill="#090c19"/>
<ellipse cx="783" cy="1117" rx="174" ry="130" fill="#090c19"/>
<rect x="609" y="1117" width="347" height="1131" fill="#090c19"/>
<ellipse cx="783" cy="935" rx="87" ry="97" fill="#090c19"/>
<ellipse cx="925" cy="1058" rx="131" ry="99" fill="#090c19"/>
<rect x="794" y="1058" width="263" height="1131" fill="#090c19"/>
<ellipse cx="925" cy="920" rx="66" ry="74" fill="#090c19"/>
<path d="M988 933 A66 74 0 0 0 928 847" stroke="#2246b0" stroke-width="3.9" fill="none" opacity="0.31" filter="url(#b3)"/>
<ellipse cx="1029" cy="1087" rx="150" ry="113" fill="#090c19"/>
<rect x="879" y="1087" width="300" height="1131" fill="#090c19"/>
<ellipse cx="1029" cy="929" rx="75" ry="84" fill="#090c19"/>
<ellipse cx="1145" cy="1105" rx="151" ry="113" fill="#090c19"/>
<rect x="995" y="1105" width="302" height="1131" fill="#090c19"/>
<ellipse cx="1145" cy="947" rx="75" ry="84" fill="#090c19"/>
<path d="M1074 962 A75 84 0 0 1 1142 862" stroke="#2246b0" stroke-width="4.5" fill="none" opacity="0.30" filter="url(#b3)"/>
<ellipse cx="1303" cy="1070" rx="152" ry="114" fill="#090c19"/>
<rect x="1151" y="1070" width="304" height="1131" fill="#090c19"/>
<ellipse cx="1303" cy="911" rx="76" ry="85" fill="#090c19"/>
<path d="M1375 926 A76 85 0 0 0 1307 826" stroke="#2246b0" stroke-width="4.6" fill="none" opacity="0.25" filter="url(#b3)"/>
<ellipse cx="1417" cy="1067" rx="147" ry="110" fill="#090c19"/>
<rect x="1270" y="1067" width="293" height="1131" fill="#090c19"/>
<ellipse cx="1417" cy="913" rx="73" ry="82" fill="#090c19"/>
<ellipse cx="1563" cy="1075" rx="140" ry="105" fill="#090c19"/>
<rect x="1422" y="1075" width="281" height="1131" fill="#090c19"/>
<ellipse cx="1563" cy="927" rx="70" ry="79" fill="#090c19"/>
<path d="M1496 941 A70 79 0 0 1 1559 848" stroke="#2246b0" stroke-width="4.2" fill="none" opacity="0.39" filter="url(#b3)"/>
<ellipse cx="1649" cy="1071" rx="125" ry="94" fill="#090c19"/>
<rect x="1524" y="1071" width="250" height="1131" fill="#090c19"/>
<ellipse cx="1649" cy="939" rx="63" ry="70" fill="#090c19"/>
<path d="M1590 952 A63 70 0 0 1 1646 869" stroke="#2246b0" stroke-width="3.8" fill="none" opacity="0.20" filter="url(#b3)"/>
<ellipse cx="1781" cy="1080" rx="137" ry="103" fill="#090c19"/>
<rect x="1645" y="1080" width="273" height="1131" fill="#090c19"/>
<ellipse cx="1781" cy="937" rx="68" ry="77" fill="#090c19"/>
<path d="M1846 951 A68 77 0 0 0 1785 860" stroke="#2246b0" stroke-width="4.1" fill="none" opacity="0.35" filter="url(#b3)"/>
<ellipse cx="1898" cy="1072" rx="137" ry="103" fill="#090c19"/>
<rect x="1761" y="1072" width="274" height="1131" fill="#090c19"/>
<ellipse cx="1898" cy="928" rx="69" ry="77" fill="#090c19"/>
<path d="M1963 942 A69 77 0 0 0 1901 852" stroke="#2246b0" stroke-width="4.1" fill="none" opacity="0.20" filter="url(#b3)"/>
<ellipse cx="2048" cy="1105" rx="156" ry="117" fill="#090c19"/>
<rect x="1892" y="1105" width="312" height="1131" fill="#090c19"/>
<ellipse cx="2048" cy="941" rx="78" ry="87" fill="#090c19"/>
<path d="M1974 957 A78 87 0 0 1 2044 854" stroke="#2246b0" stroke-width="4.7" fill="none" opacity="0.31" filter="url(#b3)"/>
<ellipse cx="56" cy="1252" rx="190" ry="142" fill="#080a14"/>
<rect x="-134" y="1252" width="380" height="1131" fill="#080a14"/>
<ellipse cx="56" cy="1052" rx="95" ry="106" fill="#080a14"/>
<ellipse cx="252" cy="1259" rx="195" ry="146" fill="#080a14"/>
<rect x="57" y="1259" width="390" height="1131" fill="#080a14"/>
<ellipse cx="252" cy="1054" rx="97" ry="109" fill="#080a14"/>
<path d="M159 1074 A97 109 0 0 1 247 945" stroke="#2246b0" stroke-width="5.8" fill="none" opacity="0.24" filter="url(#b3)"/>
<ellipse cx="447" cy="1247" rx="184" ry="138" fill="#080a14"/>
<rect x="263" y="1247" width="368" height="1131" fill="#080a14"/>
<ellipse cx="447" cy="1054" rx="92" ry="103" fill="#080a14"/>
<path d="M360 1072 A92 103 0 0 1 442 950" stroke="#2246b0" stroke-width="5.5" fill="none" opacity="0.25" filter="url(#b3)"/>
<ellipse cx="563" cy="1263" rx="201" ry="151" fill="#080a14"/>
<rect x="362" y="1263" width="403" height="1131" fill="#080a14"/>
<ellipse cx="563" cy="1051" rx="101" ry="113" fill="#080a14"/>
<ellipse cx="746" cy="1262" rx="217" ry="163" fill="#080a14"/>
<rect x="529" y="1262" width="434" height="1131" fill="#080a14"/>
<ellipse cx="746" cy="1034" rx="109" ry="122" fill="#080a14"/>
<path d="M643 1056 A109 122 0 0 1 741 913" stroke="#2246b0" stroke-width="6.5" fill="none" opacity="0.31" filter="url(#b3)"/>
<ellipse cx="944" cy="1258" rx="198" ry="148" fill="#080a14"/>
<rect x="747" y="1258" width="395" height="1131" fill="#080a14"/>
<ellipse cx="944" cy="1051" rx="99" ry="111" fill="#080a14"/>
<ellipse cx="1146" cy="1279" rx="236" ry="177" fill="#080a14"/>
<rect x="910" y="1279" width="472" height="1131" fill="#080a14"/>
<ellipse cx="1146" cy="1032" rx="118" ry="132" fill="#080a14"/>
<ellipse cx="1339" cy="1224" rx="177" ry="133" fill="#080a14"/>
<rect x="1162" y="1224" width="355" height="1131" fill="#080a14"/>
<ellipse cx="1339" cy="1037" rx="89" ry="99" fill="#080a14"/>
<ellipse cx="1507" cy="1269" rx="205" ry="154" fill="#080a14"/>
<rect x="1302" y="1269" width="410" height="1131" fill="#080a14"/>
<ellipse cx="1507" cy="1054" rx="102" ry="115" fill="#080a14"/>
<path d="M1409 1075 A102 115 0 0 1 1502 939" stroke="#2246b0" stroke-width="6.1" fill="none" opacity="0.24" filter="url(#b3)"/>
<ellipse cx="1704" cy="1301" rx="232" ry="174" fill="#080a14"/>
<rect x="1473" y="1301" width="463" height="1131" fill="#080a14"/>
<ellipse cx="1704" cy="1058" rx="116" ry="130" fill="#080a14"/>
<path d="M1594 1081 A116 130 0 0 1 1699 928" stroke="#2246b0" stroke-width="6.9" fill="none" opacity="0.23" filter="url(#b3)"/>
<ellipse cx="1874" cy="1212" rx="182" ry="136" fill="#080a14"/>
<rect x="1692" y="1212" width="364" height="1131" fill="#080a14"/>
<ellipse cx="1874" cy="1021" rx="91" ry="102" fill="#080a14"/>
<path d="M1960 1039 A91 102 0 0 0 1879 919" stroke="#2246b0" stroke-width="5.5" fill="none" opacity="0.30" filter="url(#b3)"/>
<ellipse cx="2037" cy="1228" rx="177" ry="133" fill="#080a14"/>
<rect x="1860" y="1228" width="354" height="1131" fill="#080a14"/>
<ellipse cx="2037" cy="1042" rx="88" ry="99" fill="#080a14"/>
<ellipse cx="33" cy="1436" rx="279" ry="209" fill="#07090f"/>
<rect x="-246" y="1436" width="558" height="1131" fill="#07090f"/>
<ellipse cx="33" cy="1143" rx="140" ry="156" fill="#07090f"/>
<path d="M-100 1171 A140 156 0 0 1 26 987" stroke="#2246b0" stroke-width="8.4" fill="none" opacity="0.32" filter="url(#b3)"/>
<ellipse cx="274" cy="1415" rx="246" ry="184" fill="#07090f"/>
<rect x="28" y="1415" width="492" height="1131" fill="#07090f"/>
<ellipse cx="274" cy="1157" rx="123" ry="138" fill="#07090f"/>
<path d="M390 1181 A123 138 0 0 0 280 1019" stroke="#2246b0" stroke-width="7.4" fill="none" opacity="0.31" filter="url(#b3)"/>
<ellipse cx="532" cy="1408" rx="247" ry="185" fill="#07090f"/>
<rect x="285" y="1408" width="495" height="1131" fill="#07090f"/>
<ellipse cx="532" cy="1148" rx="124" ry="138" fill="#07090f"/>
<ellipse cx="791" cy="1423" rx="279" ry="210" fill="#07090f"/>
<rect x="511" y="1423" width="559" height="1131" fill="#07090f"/>
<ellipse cx="791" cy="1130" rx="140" ry="156" fill="#07090f"/>
<path d="M923 1158 A140 156 0 0 0 798 973" stroke="#2246b0" stroke-width="8.4" fill="none" opacity="0.23" filter="url(#b3)"/>
<ellipse cx="1045" cy="1409" rx="250" ry="187" fill="#07090f"/>
<rect x="795" y="1409" width="499" height="1131" fill="#07090f"/>
<ellipse cx="1045" cy="1147" rx="125" ry="140" fill="#07090f"/>
<path d="M926 1172 A125 140 0 0 1 1039 1007" stroke="#2246b0" stroke-width="7.5" fill="none" opacity="0.28" filter="url(#b3)"/>
<ellipse cx="1333" cy="1388" rx="247" ry="186" fill="#07090f"/>
<rect x="1086" y="1388" width="495" height="1131" fill="#07090f"/>
<ellipse cx="1333" cy="1128" rx="124" ry="139" fill="#07090f"/>
<path d="M1216 1153 A124 139 0 0 1 1327 989" stroke="#2246b0" stroke-width="7.4" fill="none" opacity="0.38" filter="url(#b3)"/>
<ellipse cx="1609" cy="1396" rx="224" ry="168" fill="#07090f"/>
<rect x="1385" y="1396" width="448" height="1131" fill="#07090f"/>
<ellipse cx="1609" cy="1161" rx="112" ry="125" fill="#07090f"/>
<path d="M1716 1184 A112 125 0 0 0 1615 1036" stroke="#2246b0" stroke-width="6.7" fill="none" opacity="0.27" filter="url(#b3)"/>
<ellipse cx="1825" cy="1424" rx="263" ry="197" fill="#07090f"/>
<rect x="1563" y="1424" width="525" height="1131" fill="#07090f"/>
<ellipse cx="1825" cy="1148" rx="131" ry="147" fill="#07090f"/>
<path d="M1950 1174 A131 147 0 0 0 1832 1001" stroke="#2246b0" stroke-width="7.9" fill="none" opacity="0.33" filter="url(#b3)"/>
<ellipse cx="2079" cy="1469" rx="298" ry="224" fill="#07090f"/>
<rect x="1780" y="1469" width="597" height="1131" fill="#07090f"/>
<ellipse cx="2079" cy="1155" rx="149" ry="167" fill="#07090f"/>
<path d="M1937 1185 A149 167 0 0 1 2071 988" stroke="#2246b0" stroke-width="9.0" fill="none" opacity="0.35" filter="url(#b3)"/>
</g>
<g stroke="#0c1326" stroke-linecap="round" fill="none">
<path d="M590 760 Q588 710 570 660" stroke-width="9"/>
<ellipse cx="570" cy="657" rx="6" ry="8" fill="#0c1326" stroke="none"/>
<path d="M567 654 l-5 -14 M569 652 l-1 -16 M571 652 l3 -15 M574 654 l7 -11" stroke-width="3"/>
<path d="M700 740 Q714 670 712 600" stroke-width="9"/>
<ellipse cx="712" cy="597" rx="6" ry="8" fill="#0c1326" stroke="none"/>
<path d="M709 594 l-5 -14 M711 592 l-1 -16 M713 592 l3 -15 M716 594 l7 -11" stroke-width="3"/>
<path d="M790 740 Q803 665 800 590" stroke-width="9"/>
<ellipse cx="800" cy="587" rx="6" ry="8" fill="#0c1326" stroke="none"/>
<path d="M797 584 l-5 -14 M799 582 l-1 -16 M801 582 l3 -15 M804 584 l7 -11" stroke-width="3"/>
<path d="M860 720 Q860 640 845 560" stroke-width="9"/>
<ellipse cx="845" cy="557" rx="6" ry="8" fill="#0c1326" stroke="none"/>
<path d="M842 554 l-5 -14 M844 552 l-1 -16 M846 552 l3 -15 M849 554 l7 -11" stroke-width="3"/>
<path d="M905 745 Q905 692 890 640" stroke-width="9"/>
<ellipse cx="890" cy="637" rx="6" ry="8" fill="#0c1326" stroke="none"/>
<path d="M887 634 l-5 -14 M889 632 l-1 -16 M891 632 l3 -15 M894 634 l7 -11" stroke-width="3"/>
<path d="M985 745 Q1000 677 1000 610" stroke-width="9"/>
<ellipse cx="1000" cy="607" rx="6" ry="8" fill="#0c1326" stroke="none"/>
<path d="M997 604 l-5 -14 M999 602 l-1 -16 M1001 602 l3 -15 M1004 604 l7 -11" stroke-width="3"/>
<path d="M1050 740 Q1064 670 1062 600" stroke-width="9"/>
<ellipse cx="1062" cy="597" rx="6" ry="8" fill="#0c1326" stroke="none"/>
<path d="M1059 594 l-5 -14 M1061 592 l-1 -16 M1063 592 l3 -15 M1066 594 l7 -11" stroke-width="3"/>
<path d="M1115 740 Q1119 652 1108 565" stroke-width="9"/>
<ellipse cx="1108" cy="562" rx="6" ry="8" fill="#0c1326" stroke="none"/>
<path d="M1105 559 l-5 -14 M1107 557 l-1 -16 M1109 557 l3 -15 M1112 559 l7 -11" stroke-width="3"/>
<path d="M1170 740 Q1188 660 1190 580" stroke-width="9"/>
<ellipse cx="1190" cy="577" rx="6" ry="8" fill="#0c1326" stroke="none"/>
<path d="M1187 574 l-5 -14 M1189 572 l-1 -16 M1191 572 l3 -15 M1194 574 l7 -11" stroke-width="3"/>
<path d="M1245 745 Q1261 692 1262 640" stroke-width="9"/>
<ellipse cx="1262" cy="637" rx="6" ry="8" fill="#0c1326" stroke="none"/>
<path d="M1259 634 l-5 -14 M1261 632 l-1 -16 M1263 632 l3 -15 M1266 634 l7 -11" stroke-width="3"/>
<path d="M1290 740 Q1294 670 1282 600" stroke-width="9"/>
<ellipse cx="1282" cy="597" rx="6" ry="8" fill="#0c1326" stroke="none"/>
<path d="M1279 594 l-5 -14 M1281 592 l-1 -16 M1283 592 l3 -15 M1286 594 l7 -11" stroke-width="3"/>
<path d="M1395 740 Q1410 680 1410 620" stroke-width="9"/>
<ellipse cx="1410" cy="617" rx="6" ry="8" fill="#0c1326" stroke="none"/>
<path d="M1407 614 l-5 -14 M1409 612 l-1 -16 M1411 612 l3 -15 M1414 614 l7 -11" stroke-width="3"/>
<path d="M1435 750 Q1450 695 1450 640" stroke-width="9"/>
<ellipse cx="1450" cy="637" rx="6" ry="8" fill="#0c1326" stroke="none"/>
<path d="M1447 634 l-5 -14 M1449 632 l-1 -16 M1451 632 l3 -15 M1454 634 l7 -11" stroke-width="3"/>
</g>
</symbol></defs></svg>
<div id="win">
  <div class="a" id="edge" style="left:0;top:0;width:2848px;height:1600px;z-index:50;pointer-events:none;box-shadow:inset 0 1.5px 0 rgba(255,255,255,0.13), inset 1px 0 0 rgba(255,255,255,0.1), inset -1px 0 0 rgba(255,255,255,0.1), inset 0 -1px 0 rgba(255,255,255,0.1)"></div>
  <div id="tabs" class="a"></div>
  <!-- dropdown -->
  <div class="a" style="left:20px;top:18px;width:84px;height:82px;border-radius:26px;background:#85878d"></div>
  <svg style="left:42px;top:39px" width="40" height="40" viewBox="0 0 40 40"><path d="M9.5 14.5 L20 25 L30.5 14.5" stroke="#2a2c30" stroke-width="4.6" fill="none"/></svg>
  <div class="a chip" style="left:121px;width:145px;background:#6a3499;color:#aaa4b2">Hudba</div>
  <div class="a chip" style="left:296px;width:126px;background:#936a16;color:#22201c">Škola</div>
  <div class="a chip" style="left:452px;width:215px;background:#1f4f98;color:#a4a8b0">Sociální síť</div>
  <div class="a uline" style="left:127px;width:133px;background:#6432a0"></div>
  <div class="a uline" style="left:302px;width:113px;background:#916b1c"></div>
  <div class="a uline" style="left:458px;width:203px;background:#1f4f98"></div>

  <div id="toolbar" class="a"></div>
  <!-- active tab -->
  <svg style="left:680px;top:18px" width="704" height="106" viewBox="0 0 704 106">
    <path d="M0 106 Q28 106 28 80 L28 26 Q28 1 53 1 L651 1 Q676 1 676 26 L676 80 Q676 106 704 106 Z" fill="#8f9092"/>
  </svg>
  <svg style="left:735px;top:45px" width="42" height="30" viewBox="0 0 42 30"><rect x="0" y="0" width="42" height="30" rx="8" fill="#9c1117"/><path d="M16 8 L28 15 L16 22Z" fill="#8f9092"/></svg>
  <div class="a" style="left:797px;top:38px;font-size:36px;line-height:44px;color:#202124;-webkit-text-stroke:0.8px #202124">YouTube</div>
  <svg style="left:1296px;top:47px" width="27" height="27" viewBox="0 0 27 27"><path d="M3 3 L24 24 M24 3 L3 24" stroke="#202124" stroke-width="4.2"/></svg>
  <svg style="left:1406px;top:45px" width="31" height="31" viewBox="0 0 31 31"><path d="M15.5 2 V29 M2 15.5 H29" stroke="#2a2b2e" stroke-width="4.2"/></svg>
  <!-- window controls -->
  <div class="a" style="left:2532px;top:57px;width:36px;height:6px;background:#1c4896"></div>
  <div class="a" style="left:2652px;top:41px;width:37px;height:37px;border:6px solid #1c4896"></div>
  <svg style="left:2767px;top:40px" width="38" height="38" viewBox="0 0 38 38"><path d="M3 3 L35 35 M35 3 L3 35" stroke="#1c4896" stroke-width="6"/></svg>

  <!-- toolbar icons -->
  <svg style="left:39px;top:157px" width="36" height="36" viewBox="0 0 36 36"><path d="M34 18 H5 M18 4 L4 18 L18 32" stroke="#323336" stroke-width="3.0" fill="none"/></svg>
  <svg style="left:127px;top:157px" width="36" height="36" viewBox="0 0 36 36"><path d="M2 18 H31 M18 4 L32 18 L18 32" stroke="#6e6f72" stroke-width="3.0" fill="none"/></svg>
  <svg style="left:215px;top:156px" width="38" height="38" viewBox="0 0 38 38"><path d="M31 12 A14.5 14.5 0 1 0 33 21" stroke="#323336" stroke-width="3.1" fill="none"/><path d="M33 3 V14 H22" stroke="#323336" stroke-width="3.1" fill="none"/></svg>
  <div class="a" style="left:298px;top:134px;width:2200px;height:83px;border-radius:42px;background:#86878a"></div>
  <div class="a" style="left:309px;top:146px;width:59px;height:59px;border-radius:50%;background:#8d8e92"></div>
  <svg style="left:323px;top:162px" width="36" height="32" viewBox="0 0 36 32"><circle cx="8" cy="7" r="4.8" stroke="#2c2d30" stroke-width="3.0" fill="none"/><path d="M16.5 7 H33" stroke="#2c2d30" stroke-width="3.0"/><circle cx="27" cy="24" r="4.8" stroke="#2c2d30" stroke-width="3.0" fill="none"/><path d="M2 24 H19.5" stroke="#2c2d30" stroke-width="3.0"/></svg>
  <div class="a" style="left:387px;top:151px;font-size:36px;line-height:46px;color:#242528">youtube.com/watch/</div>
  <svg style="left:2422px;top:156px" width="42" height="42" viewBox="0 0 42 42"><path d="M21.5 5 L25.8 15.8 L37.5 16.5 L28.5 23.8 L31.6 35.5 L21.5 29 L11.4 35.5 L14.5 23.8 L5.5 16.5 L17.2 15.8 Z" stroke="#2c2d30" stroke-width="3.4" fill="none" stroke-linejoin="miter"/></svg>
  <svg style="left:2538px;top:150px" width="50" height="50" viewBox="0 0 50 50"><path d="M7.4 10.4 H38.2 V41.2 H7.4 V32 A6 6 0 0 0 7.4 20 Z" stroke="#2c2d30" stroke-width="3.6" fill="none" stroke-linejoin="round"/><path d="M17.5 10.4 A5.5 5.5 0 0 1 28.5 10.4 Z" fill="#2c2d30"/><path d="M38.2 20.5 A5.5 5.5 0 0 1 38.2 31.5 Z" fill="#2c2d30"/></svg>
  <!-- media button -->
  <div class="a" style="left:2620px;top:118.5px;width:115px;height:115px;border-radius:50%;background:#e8e9ec;box-shadow:0 4px 14px rgba(0,0,0,0.25)"></div>
  <svg style="left:2650px;top:161px" width="56" height="42" viewBox="0 0 56 42">
    <rect x="0.4" y="0.6" width="33.6" height="5.2" fill="#000"/><rect x="0.4" y="12" width="33.6" height="5" fill="#000"/><rect x="0.4" y="23" width="22.6" height="5.4" fill="#000"/>
    <rect x="40.3" y="0.4" width="4.7" height="31" fill="#000"/><rect x="40.3" y="0.4" width="13.5" height="5.6" fill="#000"/><circle cx="37" cy="31.5" r="8.3" fill="#000"/>
  </svg>
  <!-- avatar -->
  <div class="a" style="left:2760px;top:152px;width:49px;height:48px;border-radius:50%;background:#9a9b9d;overflow:hidden">
    <div class="a" style="left:0;top:0;width:14px;height:48px;background:#a6a7a9"></div>
    <div class="a" style="left:35px;top:0;width:14px;height:48px;background:#a2a3a5"></div>
    <div class="a" style="left:15px;top:4px;width:21px;height:16px;border-radius:11px 11px 5px 5px;background:#2a2624"></div>
    <div class="a" style="left:17px;top:10px;width:17px;height:23px;border-radius:8px 8px 9px 9px;background:#5e4034"></div>
    <div class="a" style="left:4px;top:33px;width:42px;height:22px;border-radius:16px 16px 0 0;background:#b8b9bb"></div>
    <div class="a" style="left:22px;top:32px;width:6px;height:14px;background:#5e4034;border-radius:0 0 3px 3px"></div>
  </div>

  <div id="content" class="a"></div>
  <!-- youtube header -->
  <div class="a" style="left:48px;top:265px;width:32px;height:2.4px;background:#2a2b2d"></div>
  <div class="a" style="left:48px;top:276px;width:32px;height:2.4px;background:#2a2b2d"></div>
  <div class="a" style="left:48px;top:287px;width:32px;height:2.4px;background:#2a2b2d"></div>
  <svg style="left:125px;top:260px" width="50" height="35" viewBox="0 0 50 35"><rect x="0" y="0" width="49.5" height="34.5" rx="9" fill="#9c1117"/><path d="M19 9.5 L33 17.2 L19 25Z" fill="#909193"/></svg>
  <div class="a" style="left:178px;top:255px;font-size:39px;line-height:44px;color:#202124;font-weight:bold;letter-spacing:-2.6px;transform:scaleX(0.71);transform-origin:0 0">YouTube</div>
  <div class="a" style="left:935px;top:244px;width:1024px;height:68px;border-radius:34px;border:2px solid #848587;background:#909193"></div>
  <div class="a" style="left:1850px;top:245px;width:2px;height:66px;background:#848587"></div>
  <div class="a" style="left:962px;top:259px;font-size:27.5px;line-height:36px;color:#5e5f61">Vyhledávání</div>
  <svg style="left:1886px;top:261px" width="36" height="36" viewBox="0 0 36 36"><circle cx="15" cy="15" r="12" stroke="#2c2d30" stroke-width="2.6" fill="none"/><path d="M24 24 L33 33" stroke="#2c2d30" stroke-width="2.6"/></svg>
  <div class="a" style="left:1987px;top:244px;width:68px;height:68px;border-radius:50%;background:#8a8b8d"></div>
  <div class="a" style="left:2016px;top:262px;width:9.5px;height:22px;border-radius:5px;background:#242528"></div>

  <!-- right skeleton -->
  <div class="skel" style="left:2152px;top:603px;width:286px;height:163px"></div>
  <div class="skel" style="left:2152px;top:784px;width:286px;height:164px"></div>
  <div class="skel" style="left:2152px;top:963px;width:286px;height:165px"></div>
  <div class="skel" style="left:2152px;top:1142px;width:286px;height:169px"></div>
  <div class="skel" style="left:2152px;top:1321px;width:286px;height:164px"></div>
  <div class="skel" style="left:2152px;top:1497px;width:286px;height:170px"></div>
  <div class="bar" style="left:2448px;top:787px;width:286px"></div>
  <div class="bar" style="left:2448px;top:824px;width:342px"></div>
  <div class="bar s" style="left:2448px;top:861px;width:151px"></div>
  <div class="bar s" style="left:2448px;top:893px;width:227px"></div>
  <div class="bar" style="left:2448px;top:963px;width:286px"></div>
  <div class="bar" style="left:2448px;top:1000px;width:342px"></div>
  <div class="bar s" style="left:2448px;top:1042px;width:151px"></div>
  <div class="bar s" style="left:2448px;top:1075px;width:249px"></div>
  <div class="bar" style="left:2448px;top:1152px;width:286px"></div>
  <div class="bar s" style="left:2448px;top:1189px;width:206px"></div>
  <div class="bar" style="left:2448px;top:1326px;width:354px"></div>
  <div class="bar" style="left:2448px;top:1363px;width:306px"></div>
  <div class="bar s" style="left:2448px;top:1403px;width:151px"></div>
  <div class="bar s" style="left:2448px;top:1434px;width:333px"></div>
  <div class="bar" style="left:2448px;top:1497px;width:333px"></div>
  <div class="bar" style="left:2448px;top:1535px;width:306px"></div>
  <div class="bar s" style="left:2448px;top:1573px;width:151px"></div>

  <!-- video -->
  <div class="a" style="left:119px;top:359px;width:1994px;height:1131px;border-radius:20px;overflow:hidden;background:#15131f">
    <svg style="left:0;top:0" width="1994" height="1131"><use href="#photo" width="1994" height="1131"/></svg>
    <div class="a" id="vdim" style="left:0;top:0;width:1994px;height:1131px;background:rgba(30,28,34,0.43)"></div>
  </div>
  <!-- cast chip -->
  <div class="a" style="left:155px;top:1322px;width:742px;height:121px;border-radius:61px;background:#222327"></div>
  <svg style="left:222px;top:1361px" width="54" height="44" viewBox="0 0 54 44"><path d="M2 12 V6 A4 4 0 0 1 6 2 H48 A4 4 0 0 1 52 6 V38 A4 4 0 0 1 48 42 H32" stroke="#fff" stroke-width="4.2" fill="none"/><path d="M2 20 A22 22 0 0 1 24 42 M2 29 A13 13 0 0 1 15 42" stroke="#fff" stroke-width="4.2" fill="none"/><path d="M2 35 A7 7 0 0 1 9 42 H2Z" fill="#fff"/></svg>
  <div class="a" style="left:308px;top:1359px;font-size:36px;line-height:46px;color:#fff">Přehrávání na televizi v obýváku</div>
  <div class="a" style="left:121px;top:1508px;font-size:41px;line-height:50px;color:#26272a">Živý koncert – Brno</div>

  <!-- popup -->
  <div class="a" style="left:2012px;top:277px;width:801px;height:471px;border-radius:16px;overflow:hidden;background:#fff;box-shadow:0 6px 24px rgba(0,0,0,0.3)">
    <div class="a" style="left:0;top:0;width:801px;height:265px;background:#060a14"></div>
    <div class="a" style="left:436px;top:0;width:365px;height:265px;background:#1a1540;overflow:hidden" id="pimg"><svg style="left:-100.5px;top:-23px" width="567.5" height="322"><use href="#photo" width="567.5" height="322"/></svg></div>
    <div class="a" style="left:40.6px;top:39px;width:57.4px;height:16.2px;border-radius:8px;background:#d0d4fa"></div>
    <div class="a" style="left:40.6px;top:88px;width:257px;height:16px;border-radius:8px;background:#d0d4fa"></div>
    <div class="a" style="left:40.6px;top:115px;width:133.4px;height:18px;border-radius:9px;background:#d0d4fa"></div>
    <svg style="left:48px;top:191px" width="40" height="26" viewBox="0 0 40 26"><path d="M1 12.5 L19 1.5 V23.5 Z M19 12.5 L37 1.5 V23.5 Z" fill="#d0d4fa" stroke="#d0d4fa" stroke-width="2" stroke-linejoin="round"/></svg>
    <svg style="left:136px;top:188px" width="28" height="31" viewBox="0 0 28 31"><path d="M2 2 L25 15.5 L2 29 Z" fill="#d0d4fa" stroke="#d0d4fa" stroke-width="2.4" stroke-linejoin="round"/></svg>
    <svg style="left:206px;top:191px" width="40" height="26" viewBox="0 0 40 26"><path d="M2 1.5 L20 12.5 L2 23.5 Z M20 1.5 L38 12.5 L20 23.5 Z" fill="#d0d4fa" stroke="#d0d4fa" stroke-width="2" stroke-linejoin="round"/></svg>
    <div class="a" style="left:276px;top:178px;width:4px;height:51px;border-radius:2px;background:#d0d4fa"></div>
    <svg style="left:305px;top:180px" width="50" height="42" viewBox="0 0 50 42"><path d="M18 3.8 H46 V24" stroke="#d0d4fa" stroke-width="3.6" fill="none"/><path d="M3.8 20 V37.2 H21" stroke="#d0d4fa" stroke-width="3.6" fill="none"/><rect x="26" y="26" width="21.8" height="13" fill="#d0d4fa"/><path d="M4 4 L14 14 M6 15 H15 V6" stroke="#d0d4fa" stroke-width="2.8" fill="none"/></svg>
    <div class="a" style="left:0;top:368.5px;width:801px;height:2px;background:#7b83c8"></div>
    <svg style="left:45px;top:297px" width="50" height="40" viewBox="0 0 50 40"><rect x="3.8" y="3.8" width="42" height="32" rx="2" stroke="#111" stroke-width="3.8" fill="none"/><path d="M11 17.5 H38 M11 24 H25 M31 24 H38" stroke="#111" stroke-width="3.6"/></svg>
    <div class="a" style="left:121px;top:293px;font-size:35px;line-height:44px;color:#1b1b1d">Okamžité titulky</div>
    <svg style="left:704px;top:302px" width="56" height="31" viewBox="0 0 56 31"><rect x="4.2" y="4.2" width="46.5" height="22.5" rx="11.25" stroke="#000" stroke-width="4.4" fill="none"/><circle cx="16.5" cy="15.5" r="6" fill="#000"/></svg>
    <svg style="left:44px;top:395px" width="52" height="50" viewBox="0 0 52 50"><g transform="translate(2.5,1)"><path d="M20 2 H28 L29 8.5 A16 16 0 0 1 34.5 11.7 L40.6 9.3 L44.6 16.2 L39.5 20.3 A16 16 0 0 1 39.5 26.7 L44.6 30.8 L40.6 37.7 L34.5 35.3 A16 16 0 0 1 29 38.5 L28 45 H20 L19 38.5 A16 16 0 0 1 13.5 35.3 L7.4 37.7 L3.4 30.8 L8.5 26.7 A16 16 0 0 1 8.5 20.3 L3.4 16.2 L7.4 9.3 L13.5 11.7 A16 16 0 0 1 19 8.5 Z" stroke="#111" stroke-width="3.4" fill="none" stroke-linejoin="round"/><circle cx="24" cy="23.5" r="6.5" fill="#111"/></g></svg>
    <div class="a" style="left:121px;top:396px;font-size:34px;line-height:44px;color:#1b1b1d">Nastavení titulků</div>
    <svg style="left:724px;top:399px" width="46" height="44" viewBox="0 0 46 44"><path d="M20 3.8 H3.8 V40 H41 V24" stroke="#111" stroke-width="3.8" fill="none"/><path d="M25 3.8 H41.6 V20 M41.6 3.8 L19 26.5" stroke="#111" stroke-width="3.8" fill="none"/></svg>
  </div>
</div>
</body></html>
